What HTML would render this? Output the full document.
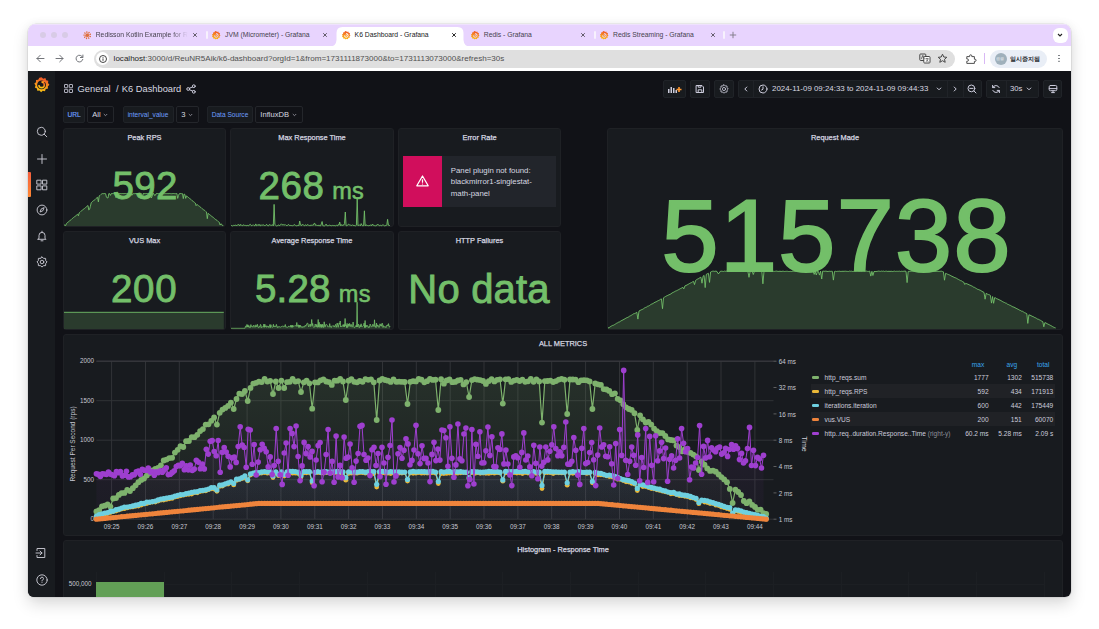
<!DOCTYPE html>
<html><head><meta charset="utf-8">
<style>
*{margin:0;padding:0;box-sizing:border-box}
html,body{width:1099px;height:629px;overflow:hidden;background:#ffffff;font-family:"Liberation Sans",sans-serif}
.a{position:absolute;white-space:nowrap}
#win{position:absolute;left:28px;top:24px;width:1043px;height:573px;border-radius:8px 8px 6px 6px;overflow:hidden;background:transparent;box-shadow:0 7px 16px rgba(0,0,0,0.15),0 0 0 0.6px rgba(0,0,0,0.10),0 0 10px rgba(0,0,0,0.05)}
#in{position:absolute;left:-28px;top:-24px;width:1099px;height:629px}
.tl{position:absolute;top:32px;width:6px;height:6px;border-radius:50%;background:#d8cbe6}
.tab{position:absolute;font-size:6.8px;color:#46424d;line-height:10px;top:30px;white-space:nowrap}
.sep{position:absolute;top:31px;width:2px;height:8px;border-radius:1px;background:#f7f1fd}
.x{position:absolute;top:29px;font-size:10px;line-height:12px;color:#4a4650}
.panel{position:absolute;background:#181b1f;border:1px solid #1f2125;border-radius:3px;overflow:hidden}
.pt{position:absolute;left:0;right:0;text-align:center;font-weight:normal;-webkit-text-stroke:0.25px #d6d7e0;font-size:7.4px;line-height:9px;color:#d6d7e0;white-space:nowrap}
.sv{position:absolute;left:0;right:0;text-align:center;color:#73bf69;white-space:nowrap;line-height:1}
.btn{position:absolute;top:80px;height:18px;background:#181b1f;border:1px solid #1f2227;border-radius:2px}
.vb{position:absolute;top:106px;height:17px;background:#181b1f;border:1px solid #202328;border-radius:2px;white-space:nowrap}
.vl{color:#6e9fff;font-size:6.6px;line-height:15px;text-align:center}
.vv{color:#d8d9e0;font-size:7.6px;line-height:15px;background:#111217 !important;border-color:#24262b !important}
.ax{position:absolute;font-size:6.3px;line-height:8px;color:#c7c8d2;white-space:nowrap}
.lg{position:absolute;font-size:6.6px;line-height:8px;color:#ccccdc;white-space:nowrap}
.lr{position:absolute;font-size:6.6px;line-height:8px;color:#ccccdc;white-space:nowrap;text-align:right}
svg{position:absolute;left:0;top:0;overflow:visible}
</style></head><body>
<div id="win"><div id="in">
<!-- ============ TAB BAR ============ -->
<div class="a" style="left:28px;top:24px;width:1043px;height:23px;background:#e8d4fe"></div><div class="a" style="left:28px;top:24px;width:1043px;height:1px;background:#efe2fd"></div>
<div class="tl" style="left:40px"></div><div class="tl" style="left:51px"></div><div class="tl" style="left:62px"></div>
<!-- active tab -->
<svg style="position:absolute;left:0;top:0" width="1099" height="60"><path d="M329,47 Q336,47 336.5,40 L336.5,33 Q336.5,27 342.5,27 L457.5,27 Q463.5,27 463.5,33 L463.5,40 Q464,47 471,47 Z" fill="#fff"/></svg>
<svg style="position:absolute;left:83px;top:31px" width="8.5" height="8.5" viewBox="0 0 16 16"><g stroke="#e37a4c" stroke-width="1.3" opacity="0.9"><line x1="8" y1="8" x2="13.92" y2="6.17"/><line x1="8" y1="8" x2="13.72" y2="10.40"/><line x1="8" y1="8" x2="10.83" y2="13.51"/><line x1="8" y1="8" x2="6.63" y2="14.05"/><line x1="8" y1="8" x2="3.06" y2="11.75"/><line x1="8" y1="8" x2="1.81" y2="7.70"/><line x1="8" y1="8" x2="3.45" y2="3.79"/><line x1="8" y1="8" x2="7.22" y2="1.85"/><line x1="8" y1="8" x2="11.36" y2="2.79"/></g><g fill="#e06d3a"><circle cx="13.92" cy="6.17" r="1.3"/><circle cx="13.72" cy="10.40" r="1.3"/><circle cx="10.83" cy="13.51" r="1.3"/><circle cx="6.63" cy="14.05" r="1.3"/><circle cx="3.06" cy="11.75" r="1.3"/><circle cx="1.81" cy="7.70" r="1.3"/><circle cx="3.45" cy="3.79" r="1.3"/><circle cx="7.22" cy="1.85" r="1.3"/><circle cx="11.36" cy="2.79" r="1.3"/></g><circle cx="8" cy="8" r="3.3" fill="#df6e3d"/></svg>
<div class="tab" style="left:95.7px;width:92px;overflow:hidden;-webkit-mask-image:linear-gradient(90deg,#000 82%,transparent)">Redisson Kotlin Example for R</div>
<svg style="position:absolute;left:192.4px;top:31.8px" width="6" height="6" viewBox="0 0 6 6"><path d="M1.2 1.2 L4.8 4.8 M4.8 1.2 L1.2 4.8" stroke="#4a4650" stroke-width="0.85"/></svg>
<div class="sep" style="left:206px"></div>
<svg style="position:absolute;left:211.75px;top:30.75px" width="8.5" height="8.5" viewBox="0 0 20 20"><defs><linearGradient id="gfl" x1="0" y1="1" x2="0.2" y2="0"><stop offset="0" stop-color="#fcc30f"/><stop offset="0.6" stop-color="#f7891e"/><stop offset="1" stop-color="#f05a28"/></linearGradient></defs><path fill="url(#gfl)" d="M9.6 0.2 L11.8 2.4 L14.8 1.2 L15.6 4.3 L18.8 4.8 L18 8 L20 10.4 L17.6 12.4 L18.2 15.6 L15 16 L14 19.2 L11 18 L8.6 20 L6.6 17.6 L3.4 18.2 L3 15 L0 13.8 L1.4 11 L0 8.2 L2.6 6.6 L2.4 3.4 L5.6 3.2 L7 0.4 Z"/><path d="M5.6 10.4 A4.4 4.4 0 1 0 10.2 6" fill="none" stroke="#e8d4fe" stroke-width="2.2"/><path d="M10.2 6 A2.2 2.2 0 1 1 8.2 9.4" fill="none" stroke="#e8d4fe" stroke-width="1.8"/></svg>
<div class="tab" style="left:225px">JVM (Micrometer) - Grafana</div>
<svg style="position:absolute;left:321.8px;top:31.8px" width="6" height="6" viewBox="0 0 6 6"><path d="M1.2 1.2 L4.8 4.8 M4.8 1.2 L1.2 4.8" stroke="#4a4650" stroke-width="0.85"/></svg>
<svg style="position:absolute;left:341.75px;top:30.75px" width="8.5" height="8.5" viewBox="0 0 20 20"><defs><linearGradient id="gfl" x1="0" y1="1" x2="0.2" y2="0"><stop offset="0" stop-color="#fcc30f"/><stop offset="0.6" stop-color="#f7891e"/><stop offset="1" stop-color="#f05a28"/></linearGradient></defs><path fill="url(#gfl)" d="M9.6 0.2 L11.8 2.4 L14.8 1.2 L15.6 4.3 L18.8 4.8 L18 8 L20 10.4 L17.6 12.4 L18.2 15.6 L15 16 L14 19.2 L11 18 L8.6 20 L6.6 17.6 L3.4 18.2 L3 15 L0 13.8 L1.4 11 L0 8.2 L2.6 6.6 L2.4 3.4 L5.6 3.2 L7 0.4 Z"/><path d="M5.6 10.4 A4.4 4.4 0 1 0 10.2 6" fill="none" stroke="#ffffff" stroke-width="2.2"/><path d="M10.2 6 A2.2 2.2 0 1 1 8.2 9.4" fill="none" stroke="#ffffff" stroke-width="1.8"/></svg>
<div class="tab" style="left:354.6px;color:#202124">K6 Dashboard - Grafana</div>
<svg style="position:absolute;left:451px;top:31.8px" width="6" height="6" viewBox="0 0 6 6"><path d="M1.2 1.2 L4.8 4.8 M4.8 1.2 L1.2 4.8" stroke="#1f1f1f" stroke-width="0.95"/></svg>
<svg style="position:absolute;left:470.75px;top:30.75px" width="8.5" height="8.5" viewBox="0 0 20 20"><defs><linearGradient id="gfl" x1="0" y1="1" x2="0.2" y2="0"><stop offset="0" stop-color="#fcc30f"/><stop offset="0.6" stop-color="#f7891e"/><stop offset="1" stop-color="#f05a28"/></linearGradient></defs><path fill="url(#gfl)" d="M9.6 0.2 L11.8 2.4 L14.8 1.2 L15.6 4.3 L18.8 4.8 L18 8 L20 10.4 L17.6 12.4 L18.2 15.6 L15 16 L14 19.2 L11 18 L8.6 20 L6.6 17.6 L3.4 18.2 L3 15 L0 13.8 L1.4 11 L0 8.2 L2.6 6.6 L2.4 3.4 L5.6 3.2 L7 0.4 Z"/><path d="M5.6 10.4 A4.4 4.4 0 1 0 10.2 6" fill="none" stroke="#e8d4fe" stroke-width="2.2"/><path d="M10.2 6 A2.2 2.2 0 1 1 8.2 9.4" fill="none" stroke="#e8d4fe" stroke-width="1.8"/></svg>
<div class="tab" style="left:483.8px">Redis - Grafana</div>
<svg style="position:absolute;left:580.4px;top:31.8px" width="6" height="6" viewBox="0 0 6 6"><path d="M1.2 1.2 L4.8 4.8 M4.8 1.2 L1.2 4.8" stroke="#4a4650" stroke-width="0.85"/></svg>
<div class="sep" style="left:593.8px"></div>
<svg style="position:absolute;left:599.75px;top:30.75px" width="8.5" height="8.5" viewBox="0 0 20 20"><defs><linearGradient id="gfl" x1="0" y1="1" x2="0.2" y2="0"><stop offset="0" stop-color="#fcc30f"/><stop offset="0.6" stop-color="#f7891e"/><stop offset="1" stop-color="#f05a28"/></linearGradient></defs><path fill="url(#gfl)" d="M9.6 0.2 L11.8 2.4 L14.8 1.2 L15.6 4.3 L18.8 4.8 L18 8 L20 10.4 L17.6 12.4 L18.2 15.6 L15 16 L14 19.2 L11 18 L8.6 20 L6.6 17.6 L3.4 18.2 L3 15 L0 13.8 L1.4 11 L0 8.2 L2.6 6.6 L2.4 3.4 L5.6 3.2 L7 0.4 Z"/><path d="M5.6 10.4 A4.4 4.4 0 1 0 10.2 6" fill="none" stroke="#e8d4fe" stroke-width="2.2"/><path d="M10.2 6 A2.2 2.2 0 1 1 8.2 9.4" fill="none" stroke="#e8d4fe" stroke-width="1.8"/></svg>
<div class="tab" style="left:613px">Redis Streaming - Grafana</div>
<svg style="position:absolute;left:709.5px;top:31.8px" width="6" height="6" viewBox="0 0 6 6"><path d="M1.2 1.2 L4.8 4.8 M4.8 1.2 L1.2 4.8" stroke="#4a4650" stroke-width="0.85"/></svg>
<div class="sep" style="left:723px"></div>
<svg style="position:absolute;left:728.5px;top:31px" width="8" height="8" viewBox="0 0 8 8"><path d="M4 0.8 V7.2 M0.8 4 H7.2" stroke="#7d7885" stroke-width="0.9"/></svg>
<div class="a" style="left:1052.5px;top:27.5px;width:15px;height:15px;border-radius:6px;background:#fff"></div>
<svg style="position:absolute;left:1056px;top:31px" width="8" height="8" viewBox="0 0 8 8"><path d="M2 3 L4 5 L6 3" fill="none" stroke="#222" stroke-width="1.1"/></svg>
<!-- ============ TOOLBAR ============ -->
<div class="a" style="left:28px;top:46px;width:1043px;height:25px;background:#fff"></div>
<div class="a" style="left:93.8px;top:49.6px;width:861.7px;height:18px;border-radius:9px;background:#dfdfdf"></div>
<div class="a" style="left:95.8px;top:51.8px;width:13.4px;height:13.4px;border-radius:50%;background:#fff"></div>
<div class="a" style="left:113.6px;top:54px;font-size:8.06px;line-height:10px;color:#1f1f1f">localhost<span style="color:#505050">:3000/d/ReuNR5Aik/k6-dashboard?orgId=1&amp;from=1731111873000&amp;to=1731113073000&amp;refresh=30s</span></div>
<svg style="position:absolute;left:35px;top:53px" width="11" height="11" viewBox="0 0 11 11"><path d="M9 5.5 H2 M5.3 2.2 L2 5.5 L5.3 8.8" fill="none" stroke="#6b6e73" stroke-width="0.95" stroke-linecap="round" stroke-linejoin="round"/></svg>
<svg style="position:absolute;left:54px;top:53px" width="11" height="11" viewBox="0 0 11 11"><path d="M2 5.5 H9 M5.7 2.2 L9 5.5 L5.7 8.8" fill="none" stroke="#6b6e73" stroke-width="0.95" stroke-linecap="round" stroke-linejoin="round"/></svg>
<svg style="position:absolute;left:74px;top:53px" width="11" height="11" viewBox="0 0 11 11"><path d="M8.6 4.2 A3.4 3.4 0 1 0 8.8 6.4" fill="none" stroke="#6b6e73" stroke-width="0.95" stroke-linecap="round" stroke-linejoin="round"/><path d="M8.9 2 V4.5 H6.4" fill="none" stroke="#6b6e73" stroke-width="0.95" stroke-linecap="round" stroke-linejoin="round"/></svg>
<svg style="position:absolute;left:97.5px;top:53.8px" width="10" height="10" viewBox="0 0 10 10"><circle cx="5" cy="5" r="3.5" fill="none" stroke="#303030" stroke-width="0.9"/><rect x="4.55" y="4.4" width="0.9" height="2.4" fill="#303030"/><rect x="4.55" y="3.1" width="0.9" height="0.8" fill="#303030"/></svg>
<svg style="position:absolute;left:919px;top:53px" width="12" height="11" viewBox="0 0 12 11"><rect x="0.8" y="1" width="6" height="6.5" rx="0.8" fill="none" stroke="#474747" stroke-width="1"/><rect x="4.8" y="3.5" width="6.2" height="6.5" rx="0.8" fill="#fff" stroke="#474747" stroke-width="1"/><path d="M2.4 5.8 L3.8 2.4 L5.2 5.8" fill="none" stroke="#474747" stroke-width="0.8"/><path d="M6.5 5.6 H9.5 M8 5 V5.6 M7 8.8 Q8.5 7.5 9.2 5.8 M7.2 6.5 Q8 8 9.6 8.8" fill="none" stroke="#474747" stroke-width="0.7"/></svg>
<svg style="position:absolute;left:937.3px;top:53px" width="11" height="11" viewBox="0 0 11 11"><path d="M5.5 1.2 L6.8 4 L9.8 4.3 L7.5 6.3 L8.2 9.3 L5.5 7.7 L2.8 9.3 L3.5 6.3 L1.2 4.3 L4.2 4 Z" fill="none" stroke="#474747" stroke-width="1" stroke-linejoin="round"/></svg>
<svg style="position:absolute;left:964.6px;top:52.6px" width="12" height="12" viewBox="0 0 12 12"><path d="M1.8 3.6 H4.6 V2.9 A1.1 1.1 0 0 1 6.8 2.9 V3.6 H9.4 V6.2 H10 A1.1 1.1 0 0 1 10 8.4 H9.4 V10.4 H1.8 V8.2 H2.4 A1.1 1.1 0 0 0 2.4 6 H1.8 Z" fill="none" stroke="#474747" stroke-width="0.95" stroke-linejoin="round"/></svg>
<div class="a" style="left:984px;top:53px;width:1px;height:11px;background:#d9b8f5"></div>
<div class="a" style="left:990px;top:50px;width:57px;height:18px;border-radius:9px;background:#e9eef6"></div>
<div class="a" style="left:994.6px;top:53px;width:12px;height:12px;border-radius:6px;background:#9fb0bb"></div>
<div class="a" style="left:996px;top:56px;font-size:4px;line-height:6px;color:#e8eef2">&#52896;&#52888;</div>
<div class="a" style="left:1009.6px;top:54.2px;font-size:6.2px;line-height:10px;color:#2f3236;-webkit-text-stroke:0.25px #2f3236">&#51068;&#49884;&#51473;&#51648;&#46120;</div>
<div class="a" style="left:1058.4px;top:54.6px;width:1.3px;height:1.3px;border-radius:1px;background:#6f7378;box-shadow:0 2.9px 0 #6f7378,0 5.8px 0 #6f7378"></div>
<!-- ============ GRAFANA ============ -->
<div class="a" style="left:28px;top:71px;width:1043px;height:526px;background:#111217"></div>
<div class="a" style="left:28px;top:71px;width:27px;height:526px;background:#181b1f"></div>
<svg style="position:absolute;left:33.6px;top:77px" width="15.4" height="15.4" viewBox="0 0 20 20"><defs><linearGradient id="glg" x1="0" y1="1" x2="0.25" y2="0"><stop offset="0" stop-color="#fcd20f"/><stop offset="0.5" stop-color="#f89a1c"/><stop offset="1" stop-color="#f05a28"/></linearGradient></defs><path fill="url(#glg)" d="M9.8 0.4 L12 2.2 L14.8 1.4 L15.8 4.2 L18.6 5 L18.2 7.9 L20 10.2 L17.9 12.2 L18.2 15.1 L15.3 15.7 L14.2 18.5 L11.4 17.8 L9.2 19.7 L7.2 17.6 L4.3 17.9 L3.8 15 L1.1 13.8 L2 11 L0.4 8.6 L2.6 6.8 L2.6 3.9 L5.5 3.6 L6.9 1 Z"/><circle cx="9.8" cy="10.3" r="5.7" fill="#181b1f"/><path d="M13.2 6.4 A4.6 4.6 0 1 0 14.2 12.4" fill="none" stroke="url(#glg)" stroke-width="0.01"/><path d="M9.9 6.8 A3.5 3.5 0 1 1 6.4 10.3" fill="none" stroke="url(#glg)" stroke-width="2"/><path d="M9.9 6.8 L14 5.2" fill="none" stroke="url(#glg)" stroke-width="2.2"/></svg>
<svg style="position:absolute;left:35.5px;top:125.8px" width="12" height="12" viewBox="0 0 12 12"><circle cx="5.3" cy="5.3" r="4" fill="none" stroke="#c7c7d1" stroke-width="0.95" stroke-linecap="round" stroke-linejoin="round"/><path d="M8.2 8.2 L10.8 10.8" fill="none" stroke="#c7c7d1" stroke-width="0.95" stroke-linecap="round" stroke-linejoin="round"/></svg>
<svg style="position:absolute;left:35.5px;top:152.7px" width="12" height="12" viewBox="0 0 12 12"><path d="M6 1.5 V10.5 M1.5 6 H10.5" fill="none" stroke="#c7c7d1" stroke-width="0.95" stroke-linecap="round" stroke-linejoin="round"/></svg>
<div class="a" style="left:28px;top:172px;width:2.5px;height:25px;border-radius:0 1px 1px 0;background:linear-gradient(180deg,#f55f3e,#ff8833)"></div>
<svg style="position:absolute;left:35.5px;top:178.5px" width="12" height="12" viewBox="0 0 12 12"><rect x="1.2" y="1.2" width="3.9" height="3.9" fill="none" stroke="#c7c7d1" stroke-width="0.95" stroke-linecap="round" stroke-linejoin="round"/><rect x="6.9" y="1.2" width="3.9" height="3.9" fill="none" stroke="#c7c7d1" stroke-width="0.95" stroke-linecap="round" stroke-linejoin="round"/><rect x="1.2" y="6.9" width="3.9" height="3.9" fill="none" stroke="#c7c7d1" stroke-width="0.95" stroke-linecap="round" stroke-linejoin="round"/><rect x="6.9" y="6.9" width="3.9" height="3.9" fill="none" stroke="#c7c7d1" stroke-width="0.95" stroke-linecap="round" stroke-linejoin="round"/></svg>
<svg style="position:absolute;left:35.5px;top:203.9px" width="12" height="12" viewBox="0 0 12 12"><circle cx="6" cy="6" r="4.9" fill="none" stroke="#c7c7d1" stroke-width="0.95" stroke-linecap="round" stroke-linejoin="round"/><path d="M8 4 L6.8 6.8 L4 8 L5.2 5.2 Z" fill="none" stroke="#c7c7d1" stroke-width="0.95" stroke-linecap="round" stroke-linejoin="round"/></svg>
<svg style="position:absolute;left:35.5px;top:229.8px" width="12" height="12" viewBox="0 0 12 12"><path d="M3 8.3 V5.4 A3 3 0 0 1 9 5.4 V8.3 L10 9.3 H2 Z" fill="none" stroke="#c7c7d1" stroke-width="0.95" stroke-linecap="round" stroke-linejoin="round"/><path d="M5 10.8 H7 M6 1.2 V2.2" fill="none" stroke="#c7c7d1" stroke-width="0.95" stroke-linecap="round" stroke-linejoin="round"/></svg>
<svg style="position:absolute;left:35.5px;top:255.6px" width="12" height="12" viewBox="0 0 12 12"><path d="M6 0.9 L7.4 2.3 L9.6 2.4 L9.7 4.6 L11.1 6 L9.7 7.4 L9.6 9.6 L7.4 9.7 L6 11.1 L4.6 9.7 L2.4 9.6 L2.3 7.4 L0.9 6 L2.3 4.6 L2.4 2.4 L4.6 2.3 Z" fill="none" stroke="#c7c7d1" stroke-width="0.95" stroke-linecap="round" stroke-linejoin="round"/><circle cx="6" cy="6" r="1.8" fill="none" stroke="#c7c7d1" stroke-width="0.95" stroke-linecap="round" stroke-linejoin="round"/></svg>
<svg style="position:absolute;left:35.3px;top:547.4px" width="12" height="12" viewBox="0 0 12 12"><path d="M2 3.5 V1.5 H9.8 V10.5 H2 V8.5" fill="none" stroke="#c7c7d1" stroke-width="0.95" stroke-linecap="round" stroke-linejoin="round"/><path d="M1 6 H7 M5 4 L7 6 L5 8" fill="none" stroke="#c7c7d1" stroke-width="0.95" stroke-linecap="round" stroke-linejoin="round"/></svg>
<svg style="position:absolute;left:35.6px;top:573.5px" width="12" height="12" viewBox="0 0 12 12"><circle cx="6" cy="6" r="5.2" fill="none" stroke="#c7c7d1" stroke-width="0.95" stroke-linecap="round" stroke-linejoin="round"/><path d="M4.5 4.6 A1.5 1.5 0 1 1 6.3 6.1 Q6 6.3 6 7" fill="none" stroke="#c7c7d1" stroke-width="0.95" stroke-linecap="round" stroke-linejoin="round"/><circle cx="6" cy="8.6" r="0.5" fill="#c7c7d1"/></svg>
<!-- header -->
<div class="a" style="left:77.6px;top:83px;font-size:9.3px;line-height:12px;color:#d8d9e1">General</div><div class="a" style="left:116px;top:83px;font-size:9.3px;line-height:12px;color:#d8d9e1">/</div><div class="a" style="left:121.8px;top:83px;font-size:9.3px;line-height:12px;color:#d8d9e1">K6 Dashboard</div>
<svg style="position:absolute;left:63.6px;top:83.7px" width="9" height="9" viewBox="0 0 9 9"><g fill="none" stroke="#ccccdc" stroke-width="0.85"><rect x="0.5" y="0.5" width="3.2" height="3.2" rx="0.3"/><rect x="5.3" y="0.5" width="3.2" height="3.2" rx="0.3"/><rect x="0.5" y="5.3" width="3.2" height="3.2" rx="0.3"/><rect x="5.3" y="5.3" width="3.2" height="3.2" rx="0.3"/></g></svg>
<svg style="position:absolute;left:185.5px;top:83.5px" width="10" height="10" viewBox="0 0 10 10"><circle cx="7.8" cy="2.2" r="1.4" fill="none" stroke="#ccccdc" stroke-width="1" stroke-linecap="round" stroke-linejoin="round"/><circle cx="2.2" cy="5" r="1.4" fill="none" stroke="#ccccdc" stroke-width="1" stroke-linecap="round" stroke-linejoin="round"/><circle cx="7.8" cy="7.8" r="1.4" fill="none" stroke="#ccccdc" stroke-width="1" stroke-linecap="round" stroke-linejoin="round"/><path d="M3.4 4.3 L6.6 2.9 M3.4 5.7 L6.6 7.1" fill="none" stroke="#ccccdc" stroke-width="1" stroke-linecap="round" stroke-linejoin="round"/></svg>
<div class="a" style="left:663.2px;top:80px;width:23.0px;height:17.5px;background:#181b1f;border:1px solid #202328;border-radius:2px"></div>
<div class="a" style="left:690.4px;top:80px;width:20.0px;height:17.5px;background:#181b1f;border:1px solid #202328;border-radius:2px"></div>
<div class="a" style="left:714.2px;top:80px;width:19.799999999999955px;height:17.5px;background:#181b1f;border:1px solid #202328;border-radius:2px"></div>
<div class="a" style="left:738.2px;top:80px;width:243.5px;height:17.5px;background:#181b1f;border:1px solid #202328;border-radius:2px"></div>
<div class="a" style="left:986.1px;top:80px;width:52.60000000000002px;height:17.5px;background:#181b1f;border:1px solid #202328;border-radius:2px"></div>
<div class="a" style="left:1043px;top:80px;width:19.200000000000045px;height:17.5px;background:#181b1f;border:1px solid #202328;border-radius:2px"></div>
<div class="a" style="left:753.4px;top:81px;width:1px;height:15.5px;background:#202328"></div>
<div class="a" style="left:947.3px;top:81px;width:1px;height:15.5px;background:#202328"></div>
<div class="a" style="left:962.6px;top:81px;width:1px;height:15.5px;background:#202328"></div>
<div class="a" style="left:1005.6px;top:81px;width:1px;height:15.5px;background:#202328"></div>
<svg style="position:absolute;left:667px;top:83.5px" width="15" height="10" viewBox="0 0 15 10"><g fill="#ccccdc"><rect x="1" y="5" width="1.5" height="4"/><rect x="3.5" y="3" width="1.5" height="6"/><rect x="6" y="4" width="1.5" height="5"/><rect x="8.5" y="6" width="1.5" height="3"/></g><path d="M12 3 V8 M9.5 5.5 H14.5" stroke="#ff9830" stroke-width="1.6"/></svg>
<svg style="position:absolute;left:695.4px;top:83.8px" width="10" height="10" viewBox="0 0 10 10"><path d="M1.5 1.5 H7 L8.5 3 V8.5 H1.5 Z" fill="none" stroke="#ccccdc" stroke-width="1" stroke-linecap="round" stroke-linejoin="round"/><path d="M3.2 8.5 V5.8 H6.8 V8.5" fill="none" stroke="#ccccdc" stroke-width="1" stroke-linecap="round" stroke-linejoin="round"/><path d="M3.2 1.5 V3.2 H6 V1.5" fill="none" stroke="#ccccdc" stroke-width="1" stroke-linecap="round" stroke-linejoin="round"/></svg>
<svg style="position:absolute;left:719.1px;top:83.8px" width="10" height="10" viewBox="0 0 12 12"><path d="M6 0.9 L7.4 2.3 L9.6 2.4 L9.7 4.6 L11.1 6 L9.7 7.4 L9.6 9.6 L7.4 9.7 L6 11.1 L4.6 9.7 L2.4 9.6 L2.3 7.4 L0.9 6 L2.3 4.6 L2.4 2.4 L4.6 2.3 Z" fill="none" stroke="#ccccdc" stroke-width="1" stroke-linecap="round" stroke-linejoin="round" stroke-width="1.1"/><circle cx="6" cy="6" r="1.9" fill="none" stroke="#ccccdc" stroke-width="1" stroke-linecap="round" stroke-linejoin="round" stroke-width="1.1"/></svg>
<svg style="position:absolute;left:742.8px;top:85.8px" width="6" height="6" viewBox="0 0 6 6"><path d="M3.8 1 L1.8 3 L3.8 5" fill="none" stroke="#ccccdc" stroke-width="1" stroke-linecap="round" stroke-linejoin="round"/></svg>
<svg style="position:absolute;left:758px;top:83.8px" width="10" height="10" viewBox="0 0 10 10"><circle cx="5" cy="5" r="4" fill="none" stroke="#ccccdc" stroke-width="1" stroke-linecap="round" stroke-linejoin="round"/><path d="M5 2.8 V5.2 L3.6 6" fill="none" stroke="#ccccdc" stroke-width="1" stroke-linecap="round" stroke-linejoin="round"/></svg>
<div class="a" style="left:772px;top:84px;font-size:7.9px;line-height:10px;color:#d8d9e1">2024-11-09 09:24:33 to 2024-11-09 09:44:33</div>
<svg style="position:absolute;left:935.7px;top:86px" width="6" height="6" viewBox="0 0 6 6"><path d="M1.2 2 L3 3.8 L4.8 2" fill="none" stroke="#ccccdc" stroke-width="1" stroke-linecap="round" stroke-linejoin="round"/></svg>
<svg style="position:absolute;left:952.2px;top:85.8px" width="6" height="6" viewBox="0 0 6 6"><path d="M2.2 1 L4.2 3 L2.2 5" fill="none" stroke="#ccccdc" stroke-width="1" stroke-linecap="round" stroke-linejoin="round"/></svg>
<svg style="position:absolute;left:966.8px;top:83.8px" width="10" height="10" viewBox="0 0 10 10"><circle cx="4.4" cy="4.4" r="3.4" fill="none" stroke="#ccccdc" stroke-width="1" stroke-linecap="round" stroke-linejoin="round"/><path d="M6.9 6.9 L9 9 M2.8 4.4 H6" fill="none" stroke="#ccccdc" stroke-width="1" stroke-linecap="round" stroke-linejoin="round"/></svg>
<svg style="position:absolute;left:990.7px;top:83.8px" width="10" height="10" viewBox="0 0 10 10"><path d="M8.2 3.6 A3.6 3.6 0 0 0 1.8 3.4 M1.8 6.4 A3.6 3.6 0 0 0 8.2 6.6" fill="none" stroke="#ccccdc" stroke-width="1" stroke-linecap="round" stroke-linejoin="round"/><path d="M1.6 1.4 V3.6 H3.8 M8.4 8.6 V6.4 H6.2" fill="none" stroke="#ccccdc" stroke-width="1" stroke-linecap="round" stroke-linejoin="round"/></svg>
<div class="a" style="left:1010px;top:84px;font-size:7.7px;line-height:10px;color:#d8d9e1">30s</div>
<svg style="position:absolute;left:1026px;top:86px" width="6" height="6" viewBox="0 0 6 6"><path d="M1.2 2 L3 3.8 L4.8 2" fill="none" stroke="#ccccdc" stroke-width="1" stroke-linecap="round" stroke-linejoin="round"/></svg>
<svg style="position:absolute;left:1047.6px;top:83.8px" width="10" height="10" viewBox="0 0 10 10"><rect x="1.2" y="1.5" width="7.6" height="5.2" rx="1.2" fill="none" stroke="#ccccdc" stroke-width="1" stroke-linecap="round" stroke-linejoin="round"/><path d="M1.2 4.6 H8.8 M3.6 8.6 H6.4 M5 6.8 V8.4" fill="none" stroke="#ccccdc" stroke-width="1" stroke-linecap="round" stroke-linejoin="round"/></svg>
<!-- variables -->
<div class="vb vl" style="left:63px;width:22px;-webkit-text-stroke:0.15px #6e9fff">URL</div>
<div class="vb vv" style="left:87px;width:27px;padding-left:4.3px">All<svg style="position:absolute;left:auto;right:5px;top:6px" width="5" height="4" viewBox="0 0 5 4"><path d="M0.8 1 L2.5 2.7 L4.2 1" fill="none" stroke="#9fa0ab" stroke-width="0.8"/></svg></div>
<div class="vb vl" style="left:122.5px;width:51px">interval_value</div>
<div class="vb vv" style="left:176px;width:23px;padding-left:4.3px">3<svg style="position:absolute;left:auto;right:5px;top:6px" width="5" height="4" viewBox="0 0 5 4"><path d="M0.8 1 L2.5 2.7 L4.2 1" fill="none" stroke="#9fa0ab" stroke-width="0.8"/></svg></div>
<div class="vb vl" style="left:207px;width:46px">Data Source</div>
<div class="vb vv" style="left:255px;width:48px;padding-left:4.3px">InfluxDB<svg style="position:absolute;left:auto;right:5px;top:6px" width="5" height="4" viewBox="0 0 5 4"><path d="M0.8 1 L2.5 2.7 L4.2 1" fill="none" stroke="#9fa0ab" stroke-width="0.8"/></svg></div>
<!-- ============ PANELS ============ -->
<div class="panel" style="left:63px;top:128px;width:163px;height:99px"></div>
<div class="panel" style="left:230px;top:128px;width:164px;height:99px"></div>
<div class="panel" style="left:398px;top:128px;width:163px;height:99px"></div>
<div class="panel" style="left:607px;top:128px;width:456px;height:202px"></div>
<div class="panel" style="left:63px;top:231px;width:163px;height:99px"></div>
<div class="panel" style="left:230px;top:231px;width:164px;height:99px"></div>
<div class="panel" style="left:398px;top:231px;width:163px;height:99px"></div>
<div class="panel" style="left:63px;top:334px;width:1000px;height:202px"></div>
<div class="panel" style="left:63px;top:540px;width:1000px;height:80px"></div>
<!-- titles -->
<div class="pt" style="left:63px;width:163px;top:132.8px">Peak RPS</div>
<div class="pt" style="left:230px;width:164px;top:132.8px">Max Response Time</div>
<div class="pt" style="left:398px;width:163px;top:132.8px">Error Rate</div>
<div class="pt" style="left:607px;width:456px;top:132.8px">Request Made</div>
<div class="pt" style="left:63px;width:163px;top:236px">VUS Max</div>
<div class="pt" style="left:230px;width:164px;top:236px">Average Response Time</div>
<div class="pt" style="left:398px;width:163px;top:236px">HTTP Failures</div>
<div class="pt" style="left:63px;width:1000px;top:339px">ALL METRICS</div>
<div class="pt" style="left:63px;width:1000px;top:544.6px">Histogram - Response Time</div>
<!-- stat values -->
<div class="a" style="left:112.5px;top:164.7px;font-size:38.5px;line-height:42px;letter-spacing:0.3px;color:#73bf69;-webkit-text-stroke:0.9px #73bf69">592</div>
<div class="a" style="left:258.5px;top:164.7px;font-size:38.5px;line-height:42px;letter-spacing:0.6px;color:#73bf69;-webkit-text-stroke:0.9px #73bf69">268<span style="font-size:23.5px;margin-left:7.6px;letter-spacing:0.4px;-webkit-text-stroke:0.6px #73bf69;position:relative;top:0.6px">ms</span></div>
<div class="a" style="left:111px;top:267.8px;font-size:38.5px;line-height:42px;letter-spacing:0.7px;color:#73bf69;-webkit-text-stroke:0.9px #73bf69">200</div>
<div class="a" style="left:255px;top:267.8px;font-size:38.5px;line-height:42px;letter-spacing:0.2px;color:#73bf69;-webkit-text-stroke:0.9px #73bf69">5.28<span style="font-size:23.5px;margin-left:8px;letter-spacing:0.4px;-webkit-text-stroke:0.6px #73bf69;position:relative;top:0.4px">ms</span></div>
<div class="a" style="left:408.3px;top:267.8px;font-size:40px;line-height:42px;letter-spacing:0.2px;color:#73bf69;-webkit-text-stroke:0.9px #73bf69">No data</div>
<div class="a" style="left:661.5px;top:180.6px;font-size:102.5px;line-height:110px;letter-spacing:1.4px;color:#73bf69;-webkit-text-stroke:2.2px #73bf69">515738</div>
<svg width="1099" height="629" viewBox="0 0 1099 629">
<path d="M64.0,226 L64.0,225.5 L64.8,224.9 L65.6,225.6 L66.4,223.7 L67.2,222.8 L68.0,222.2 L68.8,221.5 L69.6,220.8 L70.4,220.3 L71.2,219.6 L72.0,218.7 L72.8,218.2 L73.6,217.4 L74.4,216.8 L75.2,216.3 L76.0,215.6 L76.8,214.9 L77.6,214.3 L78.4,215.8 L79.2,212.9 L80.0,212.2 L80.8,211.4 L81.6,210.7 L82.4,210.1 L83.2,209.5 L84.0,208.9 L84.8,208.1 L85.6,207.5 L86.4,206.8 L87.2,206.1 L88.0,205.5 L88.8,210.0 L89.6,209.3 L90.4,206.2 L91.2,202.8 L92.0,201.9 L92.8,201.2 L93.6,200.6 L94.4,200.1 L95.2,199.5 L96.0,198.5 L96.8,197.8 L97.6,197.3 L98.4,201.9 L99.2,195.9 L100.0,195.4 L100.8,194.6 L101.6,194.0 L102.4,193.6 L103.2,193.7 L104.0,193.6 L104.8,193.5 L105.6,193.7 L106.4,197.0 L107.2,197.9 L108.0,198.0 L108.8,193.6 L109.6,193.6 L110.4,195.4 L111.2,193.7 L112.0,193.5 L112.8,193.6 L113.6,193.6 L114.4,193.6 L115.2,193.5 L116.0,197.7 L116.8,193.7 L117.6,193.5 L118.4,193.5 L119.2,193.6 L120.0,193.5 L120.8,193.6 L121.6,193.6 L122.4,193.5 L123.2,193.6 L124.0,193.6 L124.8,193.5 L125.6,193.5 L126.4,193.7 L127.2,193.5 L128.0,193.6 L128.8,196.4 L129.6,193.7 L130.4,193.6 L131.2,193.6 L132.0,195.2 L132.8,193.7 L133.6,193.7 L134.4,193.7 L135.2,193.5 L136.0,193.7 L136.8,193.6 L137.6,193.6 L138.4,193.5 L139.2,193.5 L140.0,193.5 L140.8,193.7 L141.6,193.7 L142.4,198.5 L143.2,193.5 L144.1,193.6 L144.9,193.6 L145.7,193.6 L146.5,193.5 L147.3,193.6 L148.1,193.6 L148.9,193.6 L149.7,193.5 L150.5,193.7 L151.3,198.0 L152.1,196.4 L152.9,193.5 L153.7,193.6 L154.5,195.4 L155.3,195.3 L156.1,193.7 L156.9,193.5 L157.7,193.5 L158.5,193.6 L159.3,193.6 L160.1,193.5 L160.9,193.5 L161.7,193.7 L162.5,193.5 L163.3,193.6 L164.1,193.7 L164.9,193.7 L165.7,193.6 L166.5,193.6 L167.3,193.6 L168.1,193.6 L168.9,193.6 L169.7,193.5 L170.5,193.6 L171.3,193.7 L172.1,193.7 L172.9,193.5 L173.7,193.5 L174.5,193.6 L175.3,193.7 L176.1,193.7 L176.9,193.5 L177.7,198.4 L178.5,195.4 L179.3,193.7 L180.1,193.5 L180.9,193.5 L181.7,193.7 L182.5,193.7 L183.3,198.6 L184.1,194.0 L184.9,194.5 L185.7,198.4 L186.5,195.9 L187.3,196.5 L188.1,197.1 L188.9,197.9 L189.7,198.5 L190.5,199.1 L191.3,199.7 L192.1,200.6 L192.9,201.2 L193.7,201.8 L194.5,202.4 L195.3,203.0 L196.1,205.7 L196.9,204.4 L197.7,205.0 L198.5,205.7 L199.3,206.2 L200.1,206.9 L200.9,207.5 L201.7,208.3 L202.5,208.9 L203.3,209.6 L204.1,210.0 L204.9,210.6 L205.7,211.4 L206.5,212.0 L207.3,218.7 L208.1,213.3 L208.9,214.0 L209.7,214.7 L210.5,215.3 L211.3,216.0 L212.1,216.6 L212.9,217.2 L213.7,217.8 L214.5,218.6 L215.3,219.3 L216.1,219.7 L216.9,220.3 L217.7,221.2 L218.5,221.7 L219.3,222.3 L220.1,225.0 L220.9,223.8 L221.7,224.3 L222.5,225.6 L223.3,225.6 L223.3,226 Z" fill="rgba(115,191,105,0.2)"/><polyline points="64.0,225.5 64.8,224.9 65.6,225.6 66.4,223.7 67.2,222.8 68.0,222.2 68.8,221.5 69.6,220.8 70.4,220.3 71.2,219.6 72.0,218.7 72.8,218.2 73.6,217.4 74.4,216.8 75.2,216.3 76.0,215.6 76.8,214.9 77.6,214.3 78.4,215.8 79.2,212.9 80.0,212.2 80.8,211.4 81.6,210.7 82.4,210.1 83.2,209.5 84.0,208.9 84.8,208.1 85.6,207.5 86.4,206.8 87.2,206.1 88.0,205.5 88.8,210.0 89.6,209.3 90.4,206.2 91.2,202.8 92.0,201.9 92.8,201.2 93.6,200.6 94.4,200.1 95.2,199.5 96.0,198.5 96.8,197.8 97.6,197.3 98.4,201.9 99.2,195.9 100.0,195.4 100.8,194.6 101.6,194.0 102.4,193.6 103.2,193.7 104.0,193.6 104.8,193.5 105.6,193.7 106.4,197.0 107.2,197.9 108.0,198.0 108.8,193.6 109.6,193.6 110.4,195.4 111.2,193.7 112.0,193.5 112.8,193.6 113.6,193.6 114.4,193.6 115.2,193.5 116.0,197.7 116.8,193.7 117.6,193.5 118.4,193.5 119.2,193.6 120.0,193.5 120.8,193.6 121.6,193.6 122.4,193.5 123.2,193.6 124.0,193.6 124.8,193.5 125.6,193.5 126.4,193.7 127.2,193.5 128.0,193.6 128.8,196.4 129.6,193.7 130.4,193.6 131.2,193.6 132.0,195.2 132.8,193.7 133.6,193.7 134.4,193.7 135.2,193.5 136.0,193.7 136.8,193.6 137.6,193.6 138.4,193.5 139.2,193.5 140.0,193.5 140.8,193.7 141.6,193.7 142.4,198.5 143.2,193.5 144.1,193.6 144.9,193.6 145.7,193.6 146.5,193.5 147.3,193.6 148.1,193.6 148.9,193.6 149.7,193.5 150.5,193.7 151.3,198.0 152.1,196.4 152.9,193.5 153.7,193.6 154.5,195.4 155.3,195.3 156.1,193.7 156.9,193.5 157.7,193.5 158.5,193.6 159.3,193.6 160.1,193.5 160.9,193.5 161.7,193.7 162.5,193.5 163.3,193.6 164.1,193.7 164.9,193.7 165.7,193.6 166.5,193.6 167.3,193.6 168.1,193.6 168.9,193.6 169.7,193.5 170.5,193.6 171.3,193.7 172.1,193.7 172.9,193.5 173.7,193.5 174.5,193.6 175.3,193.7 176.1,193.7 176.9,193.5 177.7,198.4 178.5,195.4 179.3,193.7 180.1,193.5 180.9,193.5 181.7,193.7 182.5,193.7 183.3,198.6 184.1,194.0 184.9,194.5 185.7,198.4 186.5,195.9 187.3,196.5 188.1,197.1 188.9,197.9 189.7,198.5 190.5,199.1 191.3,199.7 192.1,200.6 192.9,201.2 193.7,201.8 194.5,202.4 195.3,203.0 196.1,205.7 196.9,204.4 197.7,205.0 198.5,205.7 199.3,206.2 200.1,206.9 200.9,207.5 201.7,208.3 202.5,208.9 203.3,209.6 204.1,210.0 204.9,210.6 205.7,211.4 206.5,212.0 207.3,218.7 208.1,213.3 208.9,214.0 209.7,214.7 210.5,215.3 211.3,216.0 212.1,216.6 212.9,217.2 213.7,217.8 214.5,218.6 215.3,219.3 216.1,219.7 216.9,220.3 217.7,221.2 218.5,221.7 219.3,222.3 220.1,225.0 220.9,223.8 221.7,224.3 222.5,225.6 223.3,225.6" fill="none" stroke="#73bf69" stroke-width="0.9"/>
<path d="M608.0,329 L608.0,327.9 L609.1,327.6 L610.1,326.9 L611.2,326.2 L612.3,325.5 L613.3,325.3 L614.4,324.7 L615.5,324.0 L616.5,323.3 L617.6,322.8 L618.7,322.1 L619.8,321.8 L620.8,321.0 L621.9,320.4 L623.0,319.9 L624.0,319.3 L625.1,318.7 L626.2,318.0 L627.2,317.6 L628.3,317.1 L629.4,316.3 L630.4,315.8 L631.5,315.2 L632.6,314.5 L633.6,313.8 L634.7,313.5 L635.8,313.0 L636.8,312.2 L637.9,319.1 L639.0,311.0 L640.0,310.5 L641.1,309.9 L642.2,309.5 L643.3,308.9 L644.3,308.1 L645.4,307.5 L646.5,307.1 L647.5,306.3 L648.6,306.0 L649.7,305.4 L650.7,304.6 L651.8,304.0 L652.9,303.6 L653.9,302.9 L655.0,302.2 L656.1,301.9 L657.1,301.2 L658.2,300.7 L659.3,300.2 L660.3,299.4 L661.4,298.9 L662.5,308.7 L663.5,297.8 L664.6,297.1 L665.7,296.4 L666.8,295.8 L667.8,295.4 L668.9,294.8 L670.0,294.4 L671.0,293.8 L672.1,292.9 L673.2,292.4 L674.2,291.9 L675.3,291.2 L676.4,290.8 L677.4,290.3 L678.5,289.7 L679.6,289.1 L680.6,288.5 L681.7,288.0 L682.8,287.3 L683.8,288.9 L684.9,285.9 L686.0,285.5 L687.1,284.9 L688.1,284.4 L689.2,283.7 L690.3,283.1 L691.3,282.7 L692.4,281.9 L693.5,281.4 L694.5,284.6 L695.6,280.4 L696.7,279.6 L697.7,279.0 L698.8,278.5 L699.9,277.7 L700.9,277.2 L702.0,283.2 L703.1,276.1 L704.1,275.4 L705.2,287.6 L706.3,274.3 L707.3,273.8 L708.4,273.3 L709.5,282.4 L710.6,272.0 L711.6,271.5 L712.7,271.2 L713.8,271.2 L714.8,271.4 L715.9,271.1 L717.0,271.5 L718.0,273.6 L719.1,273.3 L720.2,271.4 L721.2,271.2 L722.3,271.3 L723.4,271.5 L724.4,271.1 L725.5,271.3 L726.6,271.1 L727.6,271.4 L728.7,271.3 L729.8,271.4 L730.8,271.2 L731.9,271.4 L733.0,271.3 L734.1,271.2 L735.1,271.2 L736.2,271.3 L737.3,271.2 L738.3,271.3 L739.4,271.3 L740.5,271.2 L741.5,271.1 L742.6,271.4 L743.7,271.1 L744.7,271.4 L745.8,271.5 L746.9,271.3 L747.9,271.4 L749.0,277.3 L750.1,271.5 L751.1,271.3 L752.2,271.1 L753.3,274.5 L754.4,271.4 L755.4,271.1 L756.5,271.5 L757.6,271.3 L758.6,271.4 L759.7,271.4 L760.8,271.2 L761.8,271.1 L762.9,283.8 L764.0,271.2 L765.0,271.1 L766.1,271.2 L767.2,271.3 L768.2,271.4 L769.3,271.2 L770.4,271.3 L771.4,271.4 L772.5,271.4 L773.6,271.3 L774.6,271.4 L775.7,271.2 L776.8,271.1 L777.9,271.4 L778.9,271.4 L780.0,271.2 L781.1,271.5 L782.1,271.3 L783.2,271.2 L784.3,271.5 L785.3,271.4 L786.4,271.3 L787.5,271.3 L788.5,271.5 L789.6,271.5 L790.7,271.4 L791.7,271.5 L792.8,271.2 L793.9,271.2 L794.9,271.4 L796.0,271.3 L797.1,271.1 L798.1,271.2 L799.2,271.2 L800.3,271.4 L801.4,271.1 L802.4,271.3 L803.5,271.2 L804.6,271.4 L805.6,271.5 L806.7,271.2 L807.8,271.2 L808.8,271.3 L809.9,271.2 L811.0,271.2 L812.0,271.5 L813.1,271.2 L814.2,274.4 L815.2,271.3 L816.3,275.0 L817.4,271.4 L818.4,271.5 L819.5,275.1 L820.6,271.1 L821.7,279.0 L822.7,271.1 L823.8,271.2 L824.9,271.3 L825.9,271.1 L827.0,271.4 L828.1,271.5 L829.1,271.2 L830.2,271.4 L831.3,271.3 L832.3,271.3 L833.4,280.1 L834.5,271.5 L835.5,271.3 L836.6,271.5 L837.7,271.3 L838.7,271.3 L839.8,271.2 L840.9,271.5 L841.9,271.3 L843.0,271.3 L844.1,271.3 L845.2,271.2 L846.2,271.3 L847.3,271.4 L848.4,271.5 L849.4,271.1 L850.5,271.3 L851.6,271.2 L852.6,271.5 L853.7,271.4 L854.8,271.3 L855.8,271.5 L856.9,271.2 L858.0,271.2 L859.0,271.4 L860.1,271.2 L861.2,271.5 L862.2,271.3 L863.3,271.2 L864.4,271.5 L865.5,271.2 L866.5,271.1 L867.6,271.4 L868.7,271.4 L869.7,271.1 L870.8,276.1 L871.9,271.3 L872.9,275.5 L874.0,271.5 L875.1,271.5 L876.1,271.5 L877.2,271.4 L878.3,271.1 L879.3,271.2 L880.4,271.4 L881.5,271.1 L882.5,271.3 L883.6,271.1 L884.7,271.5 L885.7,271.2 L886.8,271.2 L887.9,271.5 L889.0,271.2 L890.0,271.5 L891.1,271.2 L892.2,271.5 L893.2,271.4 L894.3,271.1 L895.4,271.4 L896.4,271.3 L897.5,271.3 L898.6,271.3 L899.6,271.2 L900.7,271.5 L901.8,271.2 L902.8,271.4 L903.9,271.2 L905.0,271.1 L906.0,271.3 L907.1,282.6 L908.2,271.4 L909.2,271.4 L910.3,271.4 L911.4,271.3 L912.5,271.2 L913.5,271.2 L914.6,271.2 L915.7,271.2 L916.7,271.5 L917.8,271.4 L918.9,271.2 L919.9,271.2 L921.0,271.3 L922.1,271.2 L923.1,271.2 L924.2,271.3 L925.3,271.3 L926.3,271.5 L927.4,271.3 L928.5,271.1 L929.5,271.4 L930.6,271.1 L931.7,271.3 L932.8,271.2 L933.8,271.3 L934.9,271.3 L936.0,271.4 L937.0,271.2 L938.1,271.3 L939.2,271.4 L940.2,271.3 L941.3,271.2 L942.4,271.5 L943.4,271.8 L944.5,280.2 L945.6,273.3 L946.6,273.7 L947.7,274.3 L948.8,274.7 L949.8,275.1 L950.9,275.7 L952.0,276.4 L953.0,276.7 L954.1,277.4 L955.2,277.7 L956.3,278.2 L957.3,278.8 L958.4,279.4 L959.5,280.0 L960.5,280.6 L961.6,280.9 L962.7,281.7 L963.7,282.1 L964.8,284.5 L965.9,283.2 L966.9,283.9 L968.0,284.2 L969.1,284.8 L970.1,285.2 L971.2,285.7 L972.3,286.2 L973.3,287.0 L974.4,287.3 L975.5,288.0 L976.5,288.6 L977.6,289.3 L978.7,289.6 L979.8,290.1 L980.8,290.5 L981.9,291.3 L983.0,291.9 L984.0,292.4 L985.1,299.2 L986.2,293.3 L987.2,294.0 L988.3,294.5 L989.4,294.8 L990.4,295.4 L991.5,303.1 L992.6,296.5 L993.6,303.3 L994.7,297.6 L995.8,298.0 L996.8,298.8 L997.9,299.1 L999.0,299.7 L1000.1,300.2 L1001.1,300.7 L1002.2,301.4 L1003.3,302.0 L1004.3,302.4 L1005.4,303.0 L1006.5,303.3 L1007.5,304.2 L1008.6,304.6 L1009.7,305.2 L1010.7,305.5 L1011.8,306.3 L1012.9,306.9 L1013.9,307.1 L1015.0,307.7 L1016.1,308.3 L1017.1,308.8 L1018.2,309.3 L1019.3,310.0 L1020.3,310.4 L1021.4,311.1 L1022.5,311.3 L1023.6,312.0 L1024.6,312.7 L1025.7,313.1 L1026.8,313.7 L1027.8,323.4 L1028.9,314.8 L1030.0,315.2 L1031.0,315.6 L1032.1,316.3 L1033.2,316.6 L1034.2,317.3 L1035.3,317.7 L1036.4,318.3 L1037.4,319.0 L1038.5,319.3 L1039.6,319.9 L1040.6,320.4 L1041.7,321.1 L1042.8,321.7 L1043.8,326.8 L1044.9,322.6 L1046.0,323.0 L1047.1,323.7 L1048.1,324.2 L1049.2,324.7 L1050.3,325.3 L1051.3,325.8 L1052.4,326.5 L1053.5,327.1 L1054.5,327.5 L1055.6,327.9 L1055.6,329 Z" fill="rgba(115,191,105,0.2)"/><polyline points="608.0,327.9 609.1,327.6 610.1,326.9 611.2,326.2 612.3,325.5 613.3,325.3 614.4,324.7 615.5,324.0 616.5,323.3 617.6,322.8 618.7,322.1 619.8,321.8 620.8,321.0 621.9,320.4 623.0,319.9 624.0,319.3 625.1,318.7 626.2,318.0 627.2,317.6 628.3,317.1 629.4,316.3 630.4,315.8 631.5,315.2 632.6,314.5 633.6,313.8 634.7,313.5 635.8,313.0 636.8,312.2 637.9,319.1 639.0,311.0 640.0,310.5 641.1,309.9 642.2,309.5 643.3,308.9 644.3,308.1 645.4,307.5 646.5,307.1 647.5,306.3 648.6,306.0 649.7,305.4 650.7,304.6 651.8,304.0 652.9,303.6 653.9,302.9 655.0,302.2 656.1,301.9 657.1,301.2 658.2,300.7 659.3,300.2 660.3,299.4 661.4,298.9 662.5,308.7 663.5,297.8 664.6,297.1 665.7,296.4 666.8,295.8 667.8,295.4 668.9,294.8 670.0,294.4 671.0,293.8 672.1,292.9 673.2,292.4 674.2,291.9 675.3,291.2 676.4,290.8 677.4,290.3 678.5,289.7 679.6,289.1 680.6,288.5 681.7,288.0 682.8,287.3 683.8,288.9 684.9,285.9 686.0,285.5 687.1,284.9 688.1,284.4 689.2,283.7 690.3,283.1 691.3,282.7 692.4,281.9 693.5,281.4 694.5,284.6 695.6,280.4 696.7,279.6 697.7,279.0 698.8,278.5 699.9,277.7 700.9,277.2 702.0,283.2 703.1,276.1 704.1,275.4 705.2,287.6 706.3,274.3 707.3,273.8 708.4,273.3 709.5,282.4 710.6,272.0 711.6,271.5 712.7,271.2 713.8,271.2 714.8,271.4 715.9,271.1 717.0,271.5 718.0,273.6 719.1,273.3 720.2,271.4 721.2,271.2 722.3,271.3 723.4,271.5 724.4,271.1 725.5,271.3 726.6,271.1 727.6,271.4 728.7,271.3 729.8,271.4 730.8,271.2 731.9,271.4 733.0,271.3 734.1,271.2 735.1,271.2 736.2,271.3 737.3,271.2 738.3,271.3 739.4,271.3 740.5,271.2 741.5,271.1 742.6,271.4 743.7,271.1 744.7,271.4 745.8,271.5 746.9,271.3 747.9,271.4 749.0,277.3 750.1,271.5 751.1,271.3 752.2,271.1 753.3,274.5 754.4,271.4 755.4,271.1 756.5,271.5 757.6,271.3 758.6,271.4 759.7,271.4 760.8,271.2 761.8,271.1 762.9,283.8 764.0,271.2 765.0,271.1 766.1,271.2 767.2,271.3 768.2,271.4 769.3,271.2 770.4,271.3 771.4,271.4 772.5,271.4 773.6,271.3 774.6,271.4 775.7,271.2 776.8,271.1 777.9,271.4 778.9,271.4 780.0,271.2 781.1,271.5 782.1,271.3 783.2,271.2 784.3,271.5 785.3,271.4 786.4,271.3 787.5,271.3 788.5,271.5 789.6,271.5 790.7,271.4 791.7,271.5 792.8,271.2 793.9,271.2 794.9,271.4 796.0,271.3 797.1,271.1 798.1,271.2 799.2,271.2 800.3,271.4 801.4,271.1 802.4,271.3 803.5,271.2 804.6,271.4 805.6,271.5 806.7,271.2 807.8,271.2 808.8,271.3 809.9,271.2 811.0,271.2 812.0,271.5 813.1,271.2 814.2,274.4 815.2,271.3 816.3,275.0 817.4,271.4 818.4,271.5 819.5,275.1 820.6,271.1 821.7,279.0 822.7,271.1 823.8,271.2 824.9,271.3 825.9,271.1 827.0,271.4 828.1,271.5 829.1,271.2 830.2,271.4 831.3,271.3 832.3,271.3 833.4,280.1 834.5,271.5 835.5,271.3 836.6,271.5 837.7,271.3 838.7,271.3 839.8,271.2 840.9,271.5 841.9,271.3 843.0,271.3 844.1,271.3 845.2,271.2 846.2,271.3 847.3,271.4 848.4,271.5 849.4,271.1 850.5,271.3 851.6,271.2 852.6,271.5 853.7,271.4 854.8,271.3 855.8,271.5 856.9,271.2 858.0,271.2 859.0,271.4 860.1,271.2 861.2,271.5 862.2,271.3 863.3,271.2 864.4,271.5 865.5,271.2 866.5,271.1 867.6,271.4 868.7,271.4 869.7,271.1 870.8,276.1 871.9,271.3 872.9,275.5 874.0,271.5 875.1,271.5 876.1,271.5 877.2,271.4 878.3,271.1 879.3,271.2 880.4,271.4 881.5,271.1 882.5,271.3 883.6,271.1 884.7,271.5 885.7,271.2 886.8,271.2 887.9,271.5 889.0,271.2 890.0,271.5 891.1,271.2 892.2,271.5 893.2,271.4 894.3,271.1 895.4,271.4 896.4,271.3 897.5,271.3 898.6,271.3 899.6,271.2 900.7,271.5 901.8,271.2 902.8,271.4 903.9,271.2 905.0,271.1 906.0,271.3 907.1,282.6 908.2,271.4 909.2,271.4 910.3,271.4 911.4,271.3 912.5,271.2 913.5,271.2 914.6,271.2 915.7,271.2 916.7,271.5 917.8,271.4 918.9,271.2 919.9,271.2 921.0,271.3 922.1,271.2 923.1,271.2 924.2,271.3 925.3,271.3 926.3,271.5 927.4,271.3 928.5,271.1 929.5,271.4 930.6,271.1 931.7,271.3 932.8,271.2 933.8,271.3 934.9,271.3 936.0,271.4 937.0,271.2 938.1,271.3 939.2,271.4 940.2,271.3 941.3,271.2 942.4,271.5 943.4,271.8 944.5,280.2 945.6,273.3 946.6,273.7 947.7,274.3 948.8,274.7 949.8,275.1 950.9,275.7 952.0,276.4 953.0,276.7 954.1,277.4 955.2,277.7 956.3,278.2 957.3,278.8 958.4,279.4 959.5,280.0 960.5,280.6 961.6,280.9 962.7,281.7 963.7,282.1 964.8,284.5 965.9,283.2 966.9,283.9 968.0,284.2 969.1,284.8 970.1,285.2 971.2,285.7 972.3,286.2 973.3,287.0 974.4,287.3 975.5,288.0 976.5,288.6 977.6,289.3 978.7,289.6 979.8,290.1 980.8,290.5 981.9,291.3 983.0,291.9 984.0,292.4 985.1,299.2 986.2,293.3 987.2,294.0 988.3,294.5 989.4,294.8 990.4,295.4 991.5,303.1 992.6,296.5 993.6,303.3 994.7,297.6 995.8,298.0 996.8,298.8 997.9,299.1 999.0,299.7 1000.1,300.2 1001.1,300.7 1002.2,301.4 1003.3,302.0 1004.3,302.4 1005.4,303.0 1006.5,303.3 1007.5,304.2 1008.6,304.6 1009.7,305.2 1010.7,305.5 1011.8,306.3 1012.9,306.9 1013.9,307.1 1015.0,307.7 1016.1,308.3 1017.1,308.8 1018.2,309.3 1019.3,310.0 1020.3,310.4 1021.4,311.1 1022.5,311.3 1023.6,312.0 1024.6,312.7 1025.7,313.1 1026.8,313.7 1027.8,323.4 1028.9,314.8 1030.0,315.2 1031.0,315.6 1032.1,316.3 1033.2,316.6 1034.2,317.3 1035.3,317.7 1036.4,318.3 1037.4,319.0 1038.5,319.3 1039.6,319.9 1040.6,320.4 1041.7,321.1 1042.8,321.7 1043.8,326.8 1044.9,322.6 1046.0,323.0 1047.1,323.7 1048.1,324.2 1049.2,324.7 1050.3,325.3 1051.3,325.8 1052.4,326.5 1053.5,327.1 1054.5,327.5 1055.6,327.9" fill="none" stroke="#73bf69" stroke-width="0.9"/>
<path d="M231.0,226 L231.0,225.1 L231.8,225.8 L232.6,225.9 L233.4,225.4 L234.2,225.5 L235.0,225.3 L235.8,225.0 L236.6,225.9 L237.4,224.9 L238.2,224.8 L239.0,224.5 L239.8,225.9 L240.6,224.4 L241.4,225.2 L242.2,225.8 L243.0,224.8 L243.8,225.1 L244.6,225.4 L245.4,225.4 L246.2,225.7 L247.0,225.5 L247.8,225.4 L248.6,225.8 L249.4,224.8 L250.2,224.2 L251.0,225.4 L251.8,225.8 L252.6,225.0 L253.4,224.8 L254.2,225.6 L255.0,225.8 L255.8,223.9 L256.6,225.7 L257.4,225.4 L258.2,224.4 L259.0,225.7 L259.8,224.4 L260.6,225.8 L261.4,225.2 L262.2,225.0 L263.0,225.3 L263.8,224.8 L264.6,225.6 L265.4,225.5 L266.2,224.6 L267.0,224.6 L267.8,225.8 L268.6,225.8 L269.4,224.5 L270.2,225.1 L270.9,225.1 L271.7,225.3 L272.5,224.7 L273.3,225.9 L274.1,204.4 L274.9,224.5 L275.7,225.2 L276.5,225.9 L277.3,225.7 L278.1,225.4 L278.9,224.8 L279.7,225.7 L280.5,224.8 L281.3,223.8 L282.1,224.6 L282.9,224.9 L283.7,224.7 L284.5,224.9 L285.3,224.6 L286.1,225.4 L286.9,225.6 L287.7,225.3 L288.5,224.4 L289.3,225.4 L290.1,225.5 L290.9,225.4 L291.7,225.6 L292.5,225.7 L293.3,225.4 L294.1,224.8 L294.9,224.7 L295.7,225.6 L296.5,225.8 L297.3,225.7 L298.1,225.1 L298.9,225.8 L299.7,221.0 L300.5,224.8 L301.3,225.8 L302.1,224.4 L302.9,224.8 L303.7,225.1 L304.5,225.8 L305.3,224.8 L306.1,225.2 L306.9,225.6 L307.7,224.4 L308.5,225.3 L309.3,225.5 L310.1,225.9 L310.9,224.8 L311.7,225.4 L312.5,225.2 L313.3,225.2 L314.1,223.4 L314.9,223.4 L315.7,225.5 L316.5,225.2 L317.3,225.4 L318.1,225.9 L318.9,224.9 L319.7,225.9 L320.5,225.9 L321.3,223.9 L322.1,221.5 L322.9,225.8 L323.7,225.8 L324.5,225.9 L325.3,225.4 L326.1,224.1 L326.9,225.7 L327.7,225.7 L328.5,225.6 L329.3,225.2 L330.1,225.2 L330.9,225.8 L331.7,225.7 L332.5,225.4 L333.3,225.6 L334.1,225.6 L334.9,225.6 L335.7,225.8 L336.5,225.3 L337.3,225.8 L338.1,224.6 L338.9,225.2 L339.7,222.0 L340.5,225.6 L341.3,224.6 L342.1,225.8 L342.9,224.7 L343.7,225.2 L344.5,223.6 L345.3,212.0 L346.1,225.6 L346.9,225.9 L347.7,225.0 L348.5,224.1 L349.3,224.7 L350.1,225.2 L350.8,225.1 L351.6,225.6 L352.4,224.7 L353.2,225.6 L354.0,225.1 L354.8,225.8 L355.6,225.8 L356.4,225.2 L357.2,198.4 L358.0,225.8 L358.8,225.1 L359.6,224.9 L360.4,225.8 L361.2,223.6 L362.0,225.3 L362.8,225.8 L363.6,225.7 L364.4,210.8 L365.2,225.8 L366.0,224.7 L366.8,225.4 L367.6,225.5 L368.4,225.7 L369.2,225.5 L370.0,225.4 L370.8,224.9 L371.6,225.8 L372.4,224.0 L373.2,225.1 L374.0,225.6 L374.8,225.7 L375.6,225.8 L376.4,225.7 L377.2,224.4 L378.0,225.0 L378.8,224.8 L379.6,225.8 L380.4,225.3 L381.2,225.8 L382.0,225.3 L382.8,224.9 L383.6,225.1 L384.4,225.8 L385.2,225.5 L386.0,225.8 L386.8,224.9 L387.6,219.3 L388.4,225.2 L389.2,225.4 L390.0,225.7 L390.0,226 Z" fill="rgba(115,191,105,0.2)"/><polyline points="231.0,225.1 231.8,225.8 232.6,225.9 233.4,225.4 234.2,225.5 235.0,225.3 235.8,225.0 236.6,225.9 237.4,224.9 238.2,224.8 239.0,224.5 239.8,225.9 240.6,224.4 241.4,225.2 242.2,225.8 243.0,224.8 243.8,225.1 244.6,225.4 245.4,225.4 246.2,225.7 247.0,225.5 247.8,225.4 248.6,225.8 249.4,224.8 250.2,224.2 251.0,225.4 251.8,225.8 252.6,225.0 253.4,224.8 254.2,225.6 255.0,225.8 255.8,223.9 256.6,225.7 257.4,225.4 258.2,224.4 259.0,225.7 259.8,224.4 260.6,225.8 261.4,225.2 262.2,225.0 263.0,225.3 263.8,224.8 264.6,225.6 265.4,225.5 266.2,224.6 267.0,224.6 267.8,225.8 268.6,225.8 269.4,224.5 270.2,225.1 270.9,225.1 271.7,225.3 272.5,224.7 273.3,225.9 274.1,204.4 274.9,224.5 275.7,225.2 276.5,225.9 277.3,225.7 278.1,225.4 278.9,224.8 279.7,225.7 280.5,224.8 281.3,223.8 282.1,224.6 282.9,224.9 283.7,224.7 284.5,224.9 285.3,224.6 286.1,225.4 286.9,225.6 287.7,225.3 288.5,224.4 289.3,225.4 290.1,225.5 290.9,225.4 291.7,225.6 292.5,225.7 293.3,225.4 294.1,224.8 294.9,224.7 295.7,225.6 296.5,225.8 297.3,225.7 298.1,225.1 298.9,225.8 299.7,221.0 300.5,224.8 301.3,225.8 302.1,224.4 302.9,224.8 303.7,225.1 304.5,225.8 305.3,224.8 306.1,225.2 306.9,225.6 307.7,224.4 308.5,225.3 309.3,225.5 310.1,225.9 310.9,224.8 311.7,225.4 312.5,225.2 313.3,225.2 314.1,223.4 314.9,223.4 315.7,225.5 316.5,225.2 317.3,225.4 318.1,225.9 318.9,224.9 319.7,225.9 320.5,225.9 321.3,223.9 322.1,221.5 322.9,225.8 323.7,225.8 324.5,225.9 325.3,225.4 326.1,224.1 326.9,225.7 327.7,225.7 328.5,225.6 329.3,225.2 330.1,225.2 330.9,225.8 331.7,225.7 332.5,225.4 333.3,225.6 334.1,225.6 334.9,225.6 335.7,225.8 336.5,225.3 337.3,225.8 338.1,224.6 338.9,225.2 339.7,222.0 340.5,225.6 341.3,224.6 342.1,225.8 342.9,224.7 343.7,225.2 344.5,223.6 345.3,212.0 346.1,225.6 346.9,225.9 347.7,225.0 348.5,224.1 349.3,224.7 350.1,225.2 350.8,225.1 351.6,225.6 352.4,224.7 353.2,225.6 354.0,225.1 354.8,225.8 355.6,225.8 356.4,225.2 357.2,198.4 358.0,225.8 358.8,225.1 359.6,224.9 360.4,225.8 361.2,223.6 362.0,225.3 362.8,225.8 363.6,225.7 364.4,210.8 365.2,225.8 366.0,224.7 366.8,225.4 367.6,225.5 368.4,225.7 369.2,225.5 370.0,225.4 370.8,224.9 371.6,225.8 372.4,224.0 373.2,225.1 374.0,225.6 374.8,225.7 375.6,225.8 376.4,225.7 377.2,224.4 378.0,225.0 378.8,224.8 379.6,225.8 380.4,225.3 381.2,225.8 382.0,225.3 382.8,224.9 383.6,225.1 384.4,225.8 385.2,225.5 386.0,225.8 386.8,224.9 387.6,219.3 388.4,225.2 389.2,225.4 390.0,225.7" fill="none" stroke="#73bf69" stroke-width="0.9"/>
<path d="M64.0,329 L64.0,312.3 L223.8,312.3 L223.8,329 Z" fill="rgba(115,191,105,0.2)"/><polyline points="64.0,312.3 223.8,312.3" fill="none" stroke="#73bf69" stroke-width="0.9"/>
<path d="M231.0,329 L231.0,328.3 L231.5,328.3 L232.0,328.3 L232.5,328.3 L233.0,328.3 L233.5,328.3 L234.0,328.3 L234.5,328.3 L235.0,328.3 L235.5,328.3 L236.0,328.3 L236.5,328.3 L237.0,328.3 L237.5,328.3 L238.0,328.3 L238.5,328.3 L239.0,328.3 L239.5,328.3 L240.0,328.3 L240.5,328.3 L241.0,328.3 L241.5,328.3 L242.0,328.3 L242.5,328.3 L243.0,328.3 L243.5,328.3 L244.0,328.3 L244.5,328.3 L245.0,328.3 L245.5,326.2 L246.0,326.6 L246.5,327.2 L246.9,324.5 L247.4,326.8 L247.9,324.8 L248.4,327.2 L248.9,325.6 L249.4,327.1 L249.9,327.9 L250.4,327.4 L250.9,324.6 L251.4,326.5 L251.9,326.5 L252.4,326.4 L252.9,327.3 L253.4,325.6 L253.9,325.0 L254.4,326.9 L254.9,327.3 L255.4,327.1 L255.9,324.8 L256.4,326.5 L256.9,327.0 L257.4,324.3 L257.9,326.4 L258.4,327.7 L258.9,327.4 L259.4,326.4 L259.9,327.3 L260.4,324.4 L260.9,324.8 L261.4,327.6 L261.9,327.0 L262.4,326.8 L262.9,326.9 L263.4,327.0 L263.9,324.0 L264.4,327.3 L264.9,324.3 L265.4,327.0 L265.9,326.5 L266.4,327.3 L266.9,325.7 L267.4,326.2 L267.9,327.1 L268.4,326.4 L268.9,327.6 L269.4,325.7 L269.9,324.5 L270.4,327.6 L270.9,324.7 L271.4,326.6 L271.9,327.2 L272.4,327.4 L272.9,326.8 L273.4,324.3 L273.9,327.0 L274.4,325.9 L274.9,326.7 L275.4,326.4 L275.9,326.6 L276.4,324.4 L276.9,326.5 L277.4,327.6 L277.9,326.4 L278.4,326.7 L278.8,327.3 L279.3,326.5 L279.8,327.1 L280.3,327.3 L280.8,327.0 L281.3,326.4 L281.8,326.7 L282.3,326.4 L282.8,325.8 L283.3,326.7 L283.8,327.0 L284.3,326.2 L284.8,326.2 L285.3,324.5 L285.8,327.2 L286.3,327.2 L286.8,326.9 L287.3,327.3 L287.8,327.0 L288.3,326.9 L288.8,325.9 L289.3,326.5 L289.8,326.9 L290.3,327.0 L290.8,325.1 L291.3,327.3 L291.8,325.3 L292.3,327.4 L292.8,325.1 L293.3,326.7 L293.8,326.7 L294.3,326.2 L294.8,325.6 L295.3,325.7 L295.8,325.8 L296.3,326.4 L296.8,322.5 L297.3,326.3 L297.8,326.0 L298.3,324.8 L298.8,327.5 L299.3,325.0 L299.8,327.3 L300.3,325.2 L300.8,326.9 L301.3,327.4 L301.8,326.3 L302.3,326.6 L302.8,327.6 L303.3,326.7 L303.8,326.6 L304.3,327.2 L304.8,326.0 L305.3,325.2 L305.8,326.3 L306.3,325.3 L306.8,323.9 L307.3,323.1 L307.8,323.2 L308.3,325.6 L308.8,327.0 L309.3,324.7 L309.8,325.3 L310.3,324.1 L310.7,326.6 L311.2,325.3 L311.7,319.5 L312.2,325.6 L312.7,323.5 L313.2,326.8 L313.7,327.4 L314.2,326.9 L314.7,327.1 L315.2,324.0 L315.7,325.5 L316.2,327.1 L316.7,324.4 L317.2,326.1 L317.7,327.4 L318.2,319.5 L318.7,327.1 L319.2,322.3 L319.7,327.3 L320.2,326.9 L320.7,324.2 L321.2,327.6 L321.7,324.5 L322.2,327.3 L322.7,324.2 L323.2,326.2 L323.7,327.6 L324.2,321.8 L324.7,326.3 L325.2,327.1 L325.7,324.7 L326.2,324.6 L326.7,324.5 L327.2,325.1 L327.7,326.8 L328.2,327.1 L328.7,326.6 L329.2,327.2 L329.7,323.6 L330.2,326.5 L330.7,326.3 L331.2,327.6 L331.7,326.3 L332.2,325.7 L332.7,326.2 L333.2,325.6 L333.7,325.9 L334.2,327.1 L334.7,325.8 L335.2,325.7 L335.7,324.3 L336.2,327.4 L336.7,325.8 L337.2,323.0 L337.7,325.3 L338.2,327.3 L338.7,324.6 L339.2,322.9 L339.7,324.4 L340.2,321.0 L340.7,327.0 L341.2,326.0 L341.7,326.4 L342.2,325.9 L342.6,326.4 L343.1,324.6 L343.6,326.6 L344.1,324.4 L344.6,326.8 L345.1,318.5 L345.6,325.8 L346.1,324.9 L346.6,327.6 L347.1,323.4 L347.6,327.5 L348.1,326.3 L348.6,323.9 L349.1,326.4 L349.6,323.4 L350.1,325.3 L350.6,326.5 L351.1,324.3 L351.6,326.4 L352.1,327.2 L352.6,326.0 L353.1,322.0 L353.6,325.5 L354.1,327.6 L354.6,327.7 L355.1,327.0 L355.6,326.3 L356.1,325.3 L356.6,327.0 L357.1,302.2 L357.6,326.9 L358.1,325.4 L358.6,324.1 L359.1,327.6 L359.6,327.6 L360.1,325.2 L360.6,326.7 L361.1,323.8 L361.6,326.6 L362.1,326.9 L362.6,326.0 L363.1,325.5 L363.6,325.5 L364.1,323.1 L364.6,327.6 L365.1,320.5 L365.6,327.5 L366.1,325.0 L366.6,326.6 L367.1,325.8 L367.6,325.5 L368.1,327.5 L368.6,327.5 L369.1,326.4 L369.6,327.4 L370.1,324.0 L370.6,325.2 L371.1,326.2 L371.6,326.9 L372.1,326.9 L372.6,324.5 L373.1,324.2 L373.6,326.2 L374.1,326.7 L374.5,319.8 L375.0,326.5 L375.5,326.2 L376.0,327.7 L376.5,323.1 L377.0,326.4 L377.5,324.9 L378.0,326.3 L378.5,325.7 L379.0,327.5 L379.5,326.9 L380.0,323.8 L380.5,325.6 L381.0,324.5 L381.5,326.2 L382.0,323.1 L382.5,323.5 L383.0,327.5 L383.5,325.7 L384.0,326.7 L384.5,326.7 L385.0,327.4 L385.5,326.7 L386.0,327.6 L386.5,325.4 L387.0,324.9 L387.5,325.0 L388.0,326.0 L388.5,323.6 L389.0,326.0 L389.5,327.2 L390.0,326.0 L390.0,329 Z" fill="rgba(115,191,105,0.2)"/><polyline points="231.0,328.3 231.5,328.3 232.0,328.3 232.5,328.3 233.0,328.3 233.5,328.3 234.0,328.3 234.5,328.3 235.0,328.3 235.5,328.3 236.0,328.3 236.5,328.3 237.0,328.3 237.5,328.3 238.0,328.3 238.5,328.3 239.0,328.3 239.5,328.3 240.0,328.3 240.5,328.3 241.0,328.3 241.5,328.3 242.0,328.3 242.5,328.3 243.0,328.3 243.5,328.3 244.0,328.3 244.5,328.3 245.0,328.3 245.5,326.2 246.0,326.6 246.5,327.2 246.9,324.5 247.4,326.8 247.9,324.8 248.4,327.2 248.9,325.6 249.4,327.1 249.9,327.9 250.4,327.4 250.9,324.6 251.4,326.5 251.9,326.5 252.4,326.4 252.9,327.3 253.4,325.6 253.9,325.0 254.4,326.9 254.9,327.3 255.4,327.1 255.9,324.8 256.4,326.5 256.9,327.0 257.4,324.3 257.9,326.4 258.4,327.7 258.9,327.4 259.4,326.4 259.9,327.3 260.4,324.4 260.9,324.8 261.4,327.6 261.9,327.0 262.4,326.8 262.9,326.9 263.4,327.0 263.9,324.0 264.4,327.3 264.9,324.3 265.4,327.0 265.9,326.5 266.4,327.3 266.9,325.7 267.4,326.2 267.9,327.1 268.4,326.4 268.9,327.6 269.4,325.7 269.9,324.5 270.4,327.6 270.9,324.7 271.4,326.6 271.9,327.2 272.4,327.4 272.9,326.8 273.4,324.3 273.9,327.0 274.4,325.9 274.9,326.7 275.4,326.4 275.9,326.6 276.4,324.4 276.9,326.5 277.4,327.6 277.9,326.4 278.4,326.7 278.8,327.3 279.3,326.5 279.8,327.1 280.3,327.3 280.8,327.0 281.3,326.4 281.8,326.7 282.3,326.4 282.8,325.8 283.3,326.7 283.8,327.0 284.3,326.2 284.8,326.2 285.3,324.5 285.8,327.2 286.3,327.2 286.8,326.9 287.3,327.3 287.8,327.0 288.3,326.9 288.8,325.9 289.3,326.5 289.8,326.9 290.3,327.0 290.8,325.1 291.3,327.3 291.8,325.3 292.3,327.4 292.8,325.1 293.3,326.7 293.8,326.7 294.3,326.2 294.8,325.6 295.3,325.7 295.8,325.8 296.3,326.4 296.8,322.5 297.3,326.3 297.8,326.0 298.3,324.8 298.8,327.5 299.3,325.0 299.8,327.3 300.3,325.2 300.8,326.9 301.3,327.4 301.8,326.3 302.3,326.6 302.8,327.6 303.3,326.7 303.8,326.6 304.3,327.2 304.8,326.0 305.3,325.2 305.8,326.3 306.3,325.3 306.8,323.9 307.3,323.1 307.8,323.2 308.3,325.6 308.8,327.0 309.3,324.7 309.8,325.3 310.3,324.1 310.7,326.6 311.2,325.3 311.7,319.5 312.2,325.6 312.7,323.5 313.2,326.8 313.7,327.4 314.2,326.9 314.7,327.1 315.2,324.0 315.7,325.5 316.2,327.1 316.7,324.4 317.2,326.1 317.7,327.4 318.2,319.5 318.7,327.1 319.2,322.3 319.7,327.3 320.2,326.9 320.7,324.2 321.2,327.6 321.7,324.5 322.2,327.3 322.7,324.2 323.2,326.2 323.7,327.6 324.2,321.8 324.7,326.3 325.2,327.1 325.7,324.7 326.2,324.6 326.7,324.5 327.2,325.1 327.7,326.8 328.2,327.1 328.7,326.6 329.2,327.2 329.7,323.6 330.2,326.5 330.7,326.3 331.2,327.6 331.7,326.3 332.2,325.7 332.7,326.2 333.2,325.6 333.7,325.9 334.2,327.1 334.7,325.8 335.2,325.7 335.7,324.3 336.2,327.4 336.7,325.8 337.2,323.0 337.7,325.3 338.2,327.3 338.7,324.6 339.2,322.9 339.7,324.4 340.2,321.0 340.7,327.0 341.2,326.0 341.7,326.4 342.2,325.9 342.6,326.4 343.1,324.6 343.6,326.6 344.1,324.4 344.6,326.8 345.1,318.5 345.6,325.8 346.1,324.9 346.6,327.6 347.1,323.4 347.6,327.5 348.1,326.3 348.6,323.9 349.1,326.4 349.6,323.4 350.1,325.3 350.6,326.5 351.1,324.3 351.6,326.4 352.1,327.2 352.6,326.0 353.1,322.0 353.6,325.5 354.1,327.6 354.6,327.7 355.1,327.0 355.6,326.3 356.1,325.3 356.6,327.0 357.1,302.2 357.6,326.9 358.1,325.4 358.6,324.1 359.1,327.6 359.6,327.6 360.1,325.2 360.6,326.7 361.1,323.8 361.6,326.6 362.1,326.9 362.6,326.0 363.1,325.5 363.6,325.5 364.1,323.1 364.6,327.6 365.1,320.5 365.6,327.5 366.1,325.0 366.6,326.6 367.1,325.8 367.6,325.5 368.1,327.5 368.6,327.5 369.1,326.4 369.6,327.4 370.1,324.0 370.6,325.2 371.1,326.2 371.6,326.9 372.1,326.9 372.6,324.5 373.1,324.2 373.6,326.2 374.1,326.7 374.5,319.8 375.0,326.5 375.5,326.2 376.0,327.7 376.5,323.1 377.0,326.4 377.5,324.9 378.0,326.3 378.5,325.7 379.0,327.5 379.5,326.9 380.0,323.8 380.5,325.6 381.0,324.5 381.5,326.2 382.0,323.1 382.5,323.5 383.0,327.5 383.5,325.7 384.0,326.7 384.5,326.7 385.0,327.4 385.5,326.7 386.0,327.6 386.5,325.4 387.0,324.9 387.5,325.0 388.0,326.0 388.5,323.6 389.0,326.0 389.5,327.2 390.0,326.0" fill="none" stroke="#73bf69" stroke-width="0.8"/>
</svg>
<!-- error panel -->
<div class="a" style="left:403px;top:156px;width:153px;height:51px;background:#22252b"></div>
<div class="a" style="left:403px;top:156px;width:39px;height:51px;background:#d10e5c"></div>
<svg style="position:absolute;left:415.6px;top:175.2px" width="13" height="12" viewBox="0 0 13 12"><path d="M6.5 1 L12.2 10.8 H0.8 Z" fill="none" stroke="#fff" stroke-width="1.25" stroke-linejoin="round"/><rect x="5.9" y="4.3" width="1.2" height="3.4" rx="0.5" fill="#fff"/><rect x="5.9" y="8.4" width="1.2" height="1.1" rx="0.5" fill="#fff"/></svg>
<div class="a" style="left:450.8px;top:165px;font-size:7.8px;line-height:11.3px;color:#d8d9e1">Panel plugin not found:<br>blackmirror1-singlestat-<br>math-panel</div>
<svg width="1099" height="629" viewBox="0 0 1099 629">
<defs><linearGradient id="gg" x1="0" y1="0" x2="0" y2="1"><stop offset="0" stop-color="#7eb26d" stop-opacity="0.14"/><stop offset="1" stop-color="#7eb26d" stop-opacity="0.02"/></linearGradient><linearGradient id="pg" x1="0" y1="0" x2="0" y2="1"><stop offset="0" stop-color="#a040d0" stop-opacity="0.10"/><stop offset="1" stop-color="#a040d0" stop-opacity="0.03"/></linearGradient><linearGradient id="cg" x1="0" y1="0" x2="0" y2="1"><stop offset="0" stop-color="#6ed0e0" stop-opacity="0.06"/><stop offset="1" stop-color="#6ed0e0" stop-opacity="0.02"/></linearGradient></defs>
<g stroke="#313337" stroke-width="1"><line x1="96.4" y1="361.2" x2="773.5" y2="361.2"/><line x1="96.4" y1="400.7" x2="773.5" y2="400.7"/><line x1="96.4" y1="440.2" x2="773.5" y2="440.2"/><line x1="96.4" y1="479.7" x2="773.5" y2="479.7"/><line x1="96.4" y1="519.2" x2="773.5" y2="519.2"/><line x1="111.6" y1="361.2" x2="111.6" y2="519.2"/><line x1="145.5" y1="361.2" x2="145.5" y2="519.2"/><line x1="179.3" y1="361.2" x2="179.3" y2="519.2"/><line x1="213.2" y1="361.2" x2="213.2" y2="519.2"/><line x1="247.1" y1="361.2" x2="247.1" y2="519.2"/><line x1="280.9" y1="361.2" x2="280.9" y2="519.2"/><line x1="314.8" y1="361.2" x2="314.8" y2="519.2"/><line x1="348.6" y1="361.2" x2="348.6" y2="519.2"/><line x1="382.5" y1="361.2" x2="382.5" y2="519.2"/><line x1="416.3" y1="361.2" x2="416.3" y2="519.2"/><line x1="450.2" y1="361.2" x2="450.2" y2="519.2"/><line x1="484.0" y1="361.2" x2="484.0" y2="519.2"/><line x1="517.9" y1="361.2" x2="517.9" y2="519.2"/><line x1="551.7" y1="361.2" x2="551.7" y2="519.2"/><line x1="585.6" y1="361.2" x2="585.6" y2="519.2"/><line x1="619.5" y1="361.2" x2="619.5" y2="519.2"/><line x1="653.3" y1="361.2" x2="653.3" y2="519.2"/><line x1="687.2" y1="361.2" x2="687.2" y2="519.2"/><line x1="721.0" y1="361.2" x2="721.0" y2="519.2"/><line x1="754.9" y1="361.2" x2="754.9" y2="519.2"/></g>
<line x1="96.4" y1="361.2" x2="773.5" y2="361.2" stroke="#3a3b40" stroke-width="1"/>
<g stroke="#8e8e8e" stroke-width="0.6"><line x1="773.5" y1="519.2" x2="776.5" y2="519.2"/><line x1="773.5" y1="492.9" x2="776.5" y2="492.9"/><line x1="773.5" y1="466.5" x2="776.5" y2="466.5"/><line x1="773.5" y1="440.2" x2="776.5" y2="440.2"/><line x1="773.5" y1="413.9" x2="776.5" y2="413.9"/><line x1="773.5" y1="387.5" x2="776.5" y2="387.5"/><line x1="773.5" y1="361.2" x2="776.5" y2="361.2"/></g>
<path d="M96.4,519.2 L96.4,511.4 L99.2,510.1 L102.0,506.3 L104.8,505.7 L107.6,504.4 L110.4,506.6 L113.2,498.5 L116.0,498.1 L118.8,494.9 L121.6,493.1 L124.4,492.9 L127.2,489.9 L130.0,491.0 L132.8,488.2 L135.6,485.3 L138.4,482.2 L141.2,479.9 L144.0,478.5 L146.8,475.6 L149.6,472.9 L152.5,470.5 L155.3,468.8 L158.1,467.8 L160.9,465.3 L163.7,460.5 L166.5,459.6 L169.3,458.1 L172.1,457.8 L174.9,452.6 L177.7,449.8 L180.5,446.2 L183.3,447.0 L186.1,441.2 L188.9,441.0 L191.7,437.1 L194.5,437.2 L197.3,434.8 L200.1,431.1 L202.9,429.1 L205.7,424.6 L208.5,424.3 L211.3,420.8 L214.1,417.5 L216.9,424.6 L219.7,412.8 L222.5,409.6 L225.3,407.9 L228.1,405.9 L230.9,402.6 L233.7,409.0 L236.5,399.0 L239.3,393.7 L242.1,394.1 L244.9,391.0 L247.7,401.0 L250.5,387.9 L253.3,383.7 L256.1,382.8 L258.9,381.7 L261.7,382.1 L264.6,378.8 L267.4,381.6 L270.2,380.8 L273.0,394.0 L275.8,381.5 L278.6,388.0 L281.4,380.6 L284.2,388.0 L287.0,382.1 L289.8,381.8 L292.6,379.0 L295.4,381.6 L298.2,381.1 L301.0,392.0 L303.8,382.3 L306.6,380.6 L309.4,383.3 L312.2,408.7 L315.0,382.3 L317.8,382.4 L320.6,380.3 L323.4,379.3 L326.2,381.5 L329.0,382.1 L331.8,384.9 L334.6,380.7 L337.4,380.7 L340.2,378.9 L343.0,381.5 L345.8,400.0 L348.6,380.7 L351.4,379.1 L354.2,381.8 L357.0,382.3 L359.8,381.0 L362.6,381.8 L365.4,379.1 L368.2,379.8 L371.0,379.3 L373.8,382.3 L376.7,420.0 L379.5,380.5 L382.3,378.8 L385.1,380.0 L387.9,380.7 L390.7,381.9 L393.5,379.3 L396.3,381.8 L399.1,381.7 L401.9,381.8 L404.7,382.0 L407.5,404.0 L410.3,381.8 L413.1,381.2 L415.9,381.4 L418.7,379.0 L421.5,379.7 L424.3,382.3 L427.1,381.2 L429.9,379.0 L432.7,379.9 L435.5,379.7 L438.3,410.0 L441.1,379.2 L443.9,383.7 L446.7,380.4 L449.5,379.5 L452.3,382.2 L455.1,381.9 L457.9,380.5 L460.7,379.8 L463.5,384.4 L466.3,382.1 L469.1,397.0 L471.9,380.1 L474.7,379.1 L477.5,379.7 L480.3,380.1 L483.1,381.0 L485.9,383.9 L488.8,381.1 L491.6,379.2 L494.4,381.4 L497.2,379.8 L500.0,379.3 L502.8,403.6 L505.6,379.3 L508.4,379.1 L511.2,381.9 L514.0,380.6 L516.8,379.8 L519.6,381.0 L522.4,379.6 L525.2,381.8 L528.0,381.3 L530.8,378.8 L533.6,381.8 L536.4,379.3 L539.2,381.4 L542.0,422.6 L544.8,381.1 L547.6,381.0 L550.4,380.6 L553.2,382.0 L556.0,381.1 L558.8,379.6 L561.6,378.8 L564.4,379.7 L567.2,414.0 L570.0,379.5 L572.8,379.5 L575.6,379.6 L578.4,382.2 L581.2,380.3 L584.0,380.2 L586.8,380.3 L589.6,381.4 L592.4,409.0 L595.2,383.4 L598.0,384.3 L600.9,384.9 L603.7,389.1 L606.5,389.5 L609.3,390.9 L612.1,394.2 L614.9,393.3 L617.7,398.8 L620.5,400.3 L623.3,404.2 L626.1,407.3 L628.9,409.0 L631.7,409.9 L634.5,413.2 L637.3,430.0 L640.1,415.3 L642.9,419.3 L645.7,422.5 L648.5,421.9 L651.3,424.6 L654.1,428.6 L656.9,431.2 L659.7,433.0 L662.5,433.1 L665.3,436.0 L668.1,439.4 L670.9,440.0 L673.7,440.4 L676.5,445.6 L679.3,447.1 L682.1,451.3 L684.9,449.1 L687.7,451.8 L690.5,452.9 L693.3,454.6 L696.1,456.4 L698.9,470.0 L701.7,461.5 L704.5,464.7 L707.3,468.4 L710.1,470.9 L713.0,470.6 L715.8,471.7 L718.6,474.4 L721.4,477.1 L724.2,479.4 L727.0,482.2 L729.8,488.9 L732.6,503.0 L735.4,489.7 L738.2,492.0 L741.0,495.0 L743.8,501.0 L746.6,503.2 L749.4,501.4 L752.2,504.9 L755.0,507.0 L757.8,509.8 L760.6,509.6 L763.4,513.1 L766.2,514.0 L766.2,519.2 Z" fill="url(#gg)"/>
<path d="M96.4,519.2 L96.4,473.7 L98.4,474.4 L100.4,476.5 L102.4,473.8 L104.4,474.0 L106.4,474.5 L108.4,472.1 L110.4,474.1 L112.4,474.8 L114.4,475.8 L116.4,471.6 L118.4,472.8 L120.4,471.5 L122.4,475.9 L124.4,475.2 L126.4,471.3 L128.4,476.9 L130.4,476.8 L132.4,474.9 L134.3,474.7 L136.3,471.9 L138.3,471.1 L140.3,474.2 L142.3,469.3 L144.3,470.3 L146.3,470.5 L148.3,468.1 L150.3,472.1 L152.3,471.6 L154.3,475.3 L156.3,471.7 L158.3,472.6 L160.3,470.9 L162.3,472.2 L164.3,469.9 L166.3,467.8 L168.3,474.6 L170.3,474.3 L172.3,472.4 L174.3,470.8 L176.3,466.6 L178.3,465.4 L180.3,465.7 L182.3,463.2 L184.3,469.8 L186.3,465.9 L188.3,470.0 L190.3,465.1 L192.3,470.5 L194.3,469.1 L196.3,460.3 L198.3,462.1 L200.3,468.8 L202.3,464.1 L204.3,468.9 L206.3,449.2 L208.3,454.1 L210.2,441.3 L212.2,440.6 L214.2,451.5 L216.2,455.8 L218.2,440.5 L220.2,472.2 L222.2,452.2 L224.2,447.5 L226.2,452.1 L228.2,456.2 L230.2,466.9 L232.2,457.9 L234.2,457.1 L236.2,462.4 L238.2,446.5 L240.2,426.8 L242.2,445.0 L244.2,447.5 L246.2,467.2 L248.2,429.3 L250.2,430.0 L252.2,464.2 L254.2,444.6 L256.2,475.0 L258.2,462.1 L260.2,449.7 L262.2,444.3 L264.2,448.3 L266.2,451.7 L268.2,466.9 L270.2,456.9 L272.2,474.6 L274.2,465.6 L276.2,428.5 L278.2,461.2 L280.2,474.8 L282.2,484.4 L284.2,453.0 L286.1,443.0 L288.1,475.3 L290.1,428.6 L292.1,433.4 L294.1,446.6 L296.1,426.0 L298.1,456.5 L300.1,480.6 L302.1,465.9 L304.1,442.4 L306.1,453.6 L308.1,446.6 L310.1,456.9 L312.1,451.4 L314.1,485.7 L316.1,460.0 L318.1,445.6 L320.1,442.5 L322.1,481.8 L324.1,472.3 L326.1,454.5 L328.1,429.5 L330.1,473.1 L332.1,461.2 L334.1,482.3 L336.1,436.1 L338.1,476.9 L340.1,465.4 L342.1,477.8 L344.1,437.1 L346.1,458.2 L348.1,457.1 L350.1,444.1 L352.1,467.8 L354.1,482.2 L356.1,461.1 L358.1,453.5 L360.0,426.2 L362.0,425.4 L364.0,454.5 L366.0,460.2 L368.0,458.0 L370.0,475.6 L372.0,449.8 L374.0,447.3 L376.0,465.5 L378.0,453.5 L380.0,476.6 L382.0,447.2 L384.0,463.0 L386.0,484.3 L388.0,457.2 L390.0,445.5 L392.0,420.0 L394.0,482.0 L396.0,475.9 L398.0,453.7 L400.0,447.6 L402.0,458.3 L404.0,450.2 L406.0,438.7 L408.0,443.9 L410.0,464.7 L412.0,460.4 L414.0,450.0 L416.0,425.3 L418.0,453.8 L420.0,463.6 L422.0,445.7 L424.0,458.4 L426.0,458.4 L428.0,463.0 L430.0,481.6 L432.0,454.4 L434.0,442.3 L435.9,460.6 L437.9,449.1 L439.9,460.1 L441.9,430.0 L443.9,430.5 L445.9,437.7 L447.9,466.2 L449.9,426.8 L451.9,458.3 L453.9,477.3 L455.9,464.9 L457.9,424.0 L459.9,458.9 L461.9,460.8 L463.9,434.0 L465.9,428.0 L467.9,485.7 L469.9,479.5 L471.9,429.5 L473.9,484.0 L475.9,444.2 L477.9,456.3 L479.9,431.8 L481.9,463.0 L483.9,462.8 L485.9,450.7 L487.9,427.0 L489.9,455.4 L491.9,436.8 L493.9,466.6 L495.9,466.7 L497.9,447.8 L499.9,449.5 L501.9,433.9 L503.9,463.9 L505.9,450.1 L507.9,464.0 L509.9,474.9 L511.8,485.6 L513.8,456.9 L515.8,455.9 L517.8,457.7 L519.8,467.2 L521.8,452.4 L523.8,432.9 L525.8,460.0 L527.8,456.0 L529.8,466.9 L531.8,475.8 L533.8,445.3 L535.8,463.2 L537.8,478.7 L539.8,447.0 L541.8,466.1 L543.8,462.3 L545.8,447.0 L547.8,459.9 L549.8,451.2 L551.8,444.7 L553.8,426.7 L555.8,448.5 L557.8,455.8 L559.8,451.8 L561.8,455.8 L563.8,447.3 L565.8,422.0 L567.8,464.1 L569.8,464.3 L571.8,461.3 L573.8,437.6 L575.8,450.2 L577.8,475.1 L579.8,484.4 L581.8,448.2 L583.8,428.6 L585.7,463.6 L587.7,462.5 L589.7,452.5 L591.7,442.5 L593.7,459.7 L595.7,485.6 L597.7,455.1 L599.7,428.0 L601.7,446.9 L603.7,444.8 L605.7,456.3 L607.7,456.8 L609.7,446.8 L611.7,463.8 L613.7,485.0 L615.7,443.6 L617.7,478.5 L619.7,429.6 L621.7,455.4 L623.7,370.4 L625.7,460.2 L627.7,474.5 L629.7,461.2 L631.7,447.1 L633.7,455.3 L635.7,465.2 L637.7,434.9 L639.7,480.8 L641.7,457.6 L643.7,467.5 L645.7,428.6 L647.7,482.4 L649.7,436.4 L651.7,465.3 L653.7,481.7 L655.7,435.7 L657.7,460.8 L659.7,450.9 L661.6,442.3 L663.6,458.6 L665.6,448.0 L667.6,481.3 L669.6,459.2 L671.6,455.9 L673.6,468.0 L675.6,460.2 L677.6,438.7 L679.6,458.0 L681.6,428.6 L683.6,443.3 L685.6,451.8 L687.6,448.5 L689.6,479.7 L691.6,467.1 L693.6,467.9 L695.6,463.0 L697.6,457.5 L699.6,425.6 L701.6,474.2 L703.6,446.4 L705.6,457.9 L707.6,440.4 L709.6,456.8 L711.6,447.8 L713.6,450.1 L715.6,451.8 L717.6,448.0 L719.6,447.0 L721.6,454.1 L723.6,452.8 L725.6,448.2 L727.6,456.4 L729.6,449.2 L731.6,444.6 L733.6,449.2 L735.6,445.9 L737.5,448.4 L739.5,459.6 L741.5,453.4 L743.5,463.0 L745.5,460.7 L747.5,448.5 L749.5,427.4 L751.5,465.5 L753.5,450.2 L755.5,465.6 L757.5,457.4 L759.5,458.7 L761.5,468.0 L763.5,455.3 L763.5,519.2 Z" fill="url(#pg)"/>
<path d="M96.4,519.2 L96.4,516.2 L99.2,514.7 L102.0,513.8 L104.8,513.0 L107.6,512.6 L110.4,511.4 L113.2,511.1 L116.0,509.7 L118.8,509.2 L121.6,508.1 L124.4,507.2 L127.2,507.1 L130.0,506.5 L132.8,505.9 L135.6,505.2 L138.4,504.7 L141.2,503.3 L144.0,503.4 L146.8,502.0 L149.6,502.1 L152.5,501.6 L155.3,501.0 L158.1,499.9 L160.9,499.0 L163.7,498.7 L166.5,498.0 L169.3,497.5 L172.1,497.2 L174.9,496.2 L177.7,495.3 L180.5,494.7 L183.3,494.5 L186.1,493.6 L188.9,493.1 L191.7,492.3 L194.5,491.9 L197.3,491.7 L200.1,490.5 L202.9,490.3 L205.7,489.8 L208.5,489.0 L211.3,487.6 L214.1,487.7 L216.9,489.9 L219.7,485.2 L222.5,484.9 L225.3,483.8 L228.1,482.8 L230.9,481.8 L233.7,483.4 L236.5,479.2 L239.3,478.9 L242.1,477.7 L244.9,475.9 L247.7,479.8 L250.5,473.8 L253.3,473.1 L256.1,472.3 L258.9,472.6 L261.7,471.9 L264.6,471.5 L267.4,471.8 L270.2,471.8 L273.0,476.0 L275.8,471.9 L278.6,474.4 L281.4,471.8 L284.2,474.5 L287.0,471.9 L289.8,471.4 L292.6,471.4 L295.4,471.5 L298.2,472.2 L301.0,475.5 L303.8,471.5 L306.6,471.5 L309.4,471.7 L312.2,481.1 L315.0,472.3 L317.8,471.6 L320.6,472.1 L323.4,471.9 L326.2,471.7 L329.0,472.1 L331.8,471.8 L334.6,471.6 L337.4,471.4 L340.2,471.6 L343.0,471.8 L345.8,477.7 L348.6,471.8 L351.4,471.7 L354.2,471.8 L357.0,472.1 L359.8,471.6 L362.6,471.6 L365.4,472.2 L368.2,471.6 L371.0,471.6 L373.8,471.5 L376.7,484.3 L379.5,471.5 L382.3,471.4 L385.1,471.5 L387.9,472.0 L390.7,471.6 L393.5,471.9 L396.3,471.9 L399.1,471.8 L401.9,472.1 L404.7,472.0 L407.5,479.4 L410.3,471.9 L413.1,471.3 L415.9,471.8 L418.7,471.6 L421.5,471.5 L424.3,471.7 L427.1,471.9 L429.9,471.6 L432.7,471.3 L435.5,472.0 L438.3,481.5 L441.1,471.5 L443.9,472.1 L446.7,471.5 L449.5,471.4 L452.3,472.1 L455.1,471.5 L457.9,471.8 L460.7,471.6 L463.5,472.1 L466.3,472.2 L469.1,477.7 L471.9,471.6 L474.7,471.6 L477.5,471.8 L480.3,472.2 L483.1,472.2 L485.9,471.8 L488.8,471.3 L491.6,471.6 L494.4,471.6 L497.2,471.7 L500.0,472.2 L502.8,479.9 L505.6,471.4 L508.4,471.6 L511.2,471.7 L514.0,471.6 L516.8,471.4 L519.6,471.5 L522.4,471.7 L525.2,471.3 L528.0,471.8 L530.8,472.2 L533.6,471.5 L536.4,472.0 L539.2,472.1 L542.0,485.4 L544.8,471.4 L547.6,471.4 L550.4,471.7 L553.2,471.8 L556.0,471.8 L558.8,472.0 L561.6,472.0 L564.4,472.2 L567.2,482.8 L570.0,472.0 L572.8,471.6 L575.6,472.1 L578.4,471.5 L581.2,472.2 L584.0,472.3 L586.8,472.2 L589.6,472.2 L592.4,481.4 L595.2,472.4 L598.0,473.0 L600.9,473.4 L603.7,474.3 L606.5,475.3 L609.3,475.0 L612.1,475.6 L614.9,476.4 L617.7,477.3 L620.5,478.6 L623.3,479.7 L626.1,480.1 L628.9,480.7 L631.7,481.5 L634.5,483.0 L637.3,488.4 L640.1,484.4 L642.9,484.8 L645.7,485.4 L648.5,486.6 L651.3,487.3 L654.1,488.1 L656.9,488.8 L659.7,489.2 L662.5,490.3 L665.3,490.9 L668.1,492.0 L670.9,492.5 L673.7,492.4 L676.5,493.9 L679.3,493.9 L682.1,494.9 L684.9,495.1 L687.7,495.7 L690.5,496.4 L693.3,497.5 L696.1,498.3 L698.9,502.5 L701.7,500.2 L704.5,500.4 L707.3,500.9 L710.1,501.9 L713.0,502.7 L715.8,503.7 L718.6,504.3 L721.4,505.3 L724.2,506.4 L727.0,507.4 L729.8,507.7 L732.6,513.1 L735.4,509.8 L738.2,510.2 L741.0,510.8 L743.8,512.1 L746.6,512.6 L749.4,513.4 L752.2,514.1 L755.0,514.6 L757.8,515.3 L760.6,516.3 L763.4,516.7 L766.2,518.2 L766.2,519.2 Z" fill="url(#cg)"/>
<polyline points="96.4,511.4 99.2,510.1 102.0,506.3 104.8,505.7 107.6,504.4 110.4,506.6 113.2,498.5 116.0,498.1 118.8,494.9 121.6,493.1 124.4,492.9 127.2,489.9 130.0,491.0 132.8,488.2 135.6,485.3 138.4,482.2 141.2,479.9 144.0,478.5 146.8,475.6 149.6,472.9 152.5,470.5 155.3,468.8 158.1,467.8 160.9,465.3 163.7,460.5 166.5,459.6 169.3,458.1 172.1,457.8 174.9,452.6 177.7,449.8 180.5,446.2 183.3,447.0 186.1,441.2 188.9,441.0 191.7,437.1 194.5,437.2 197.3,434.8 200.1,431.1 202.9,429.1 205.7,424.6 208.5,424.3 211.3,420.8 214.1,417.5 216.9,424.6 219.7,412.8 222.5,409.6 225.3,407.9 228.1,405.9 230.9,402.6 233.7,409.0 236.5,399.0 239.3,393.7 242.1,394.1 244.9,391.0 247.7,401.0 250.5,387.9 253.3,383.7 256.1,382.8 258.9,381.7 261.7,382.1 264.6,378.8 267.4,381.6 270.2,380.8 273.0,394.0 275.8,381.5 278.6,388.0 281.4,380.6 284.2,388.0 287.0,382.1 289.8,381.8 292.6,379.0 295.4,381.6 298.2,381.1 301.0,392.0 303.8,382.3 306.6,380.6 309.4,383.3 312.2,408.7 315.0,382.3 317.8,382.4 320.6,380.3 323.4,379.3 326.2,381.5 329.0,382.1 331.8,384.9 334.6,380.7 337.4,380.7 340.2,378.9 343.0,381.5 345.8,400.0 348.6,380.7 351.4,379.1 354.2,381.8 357.0,382.3 359.8,381.0 362.6,381.8 365.4,379.1 368.2,379.8 371.0,379.3 373.8,382.3 376.7,420.0 379.5,380.5 382.3,378.8 385.1,380.0 387.9,380.7 390.7,381.9 393.5,379.3 396.3,381.8 399.1,381.7 401.9,381.8 404.7,382.0 407.5,404.0 410.3,381.8 413.1,381.2 415.9,381.4 418.7,379.0 421.5,379.7 424.3,382.3 427.1,381.2 429.9,379.0 432.7,379.9 435.5,379.7 438.3,410.0 441.1,379.2 443.9,383.7 446.7,380.4 449.5,379.5 452.3,382.2 455.1,381.9 457.9,380.5 460.7,379.8 463.5,384.4 466.3,382.1 469.1,397.0 471.9,380.1 474.7,379.1 477.5,379.7 480.3,380.1 483.1,381.0 485.9,383.9 488.8,381.1 491.6,379.2 494.4,381.4 497.2,379.8 500.0,379.3 502.8,403.6 505.6,379.3 508.4,379.1 511.2,381.9 514.0,380.6 516.8,379.8 519.6,381.0 522.4,379.6 525.2,381.8 528.0,381.3 530.8,378.8 533.6,381.8 536.4,379.3 539.2,381.4 542.0,422.6 544.8,381.1 547.6,381.0 550.4,380.6 553.2,382.0 556.0,381.1 558.8,379.6 561.6,378.8 564.4,379.7 567.2,414.0 570.0,379.5 572.8,379.5 575.6,379.6 578.4,382.2 581.2,380.3 584.0,380.2 586.8,380.3 589.6,381.4 592.4,409.0 595.2,383.4 598.0,384.3 600.9,384.9 603.7,389.1 606.5,389.5 609.3,390.9 612.1,394.2 614.9,393.3 617.7,398.8 620.5,400.3 623.3,404.2 626.1,407.3 628.9,409.0 631.7,409.9 634.5,413.2 637.3,430.0 640.1,415.3 642.9,419.3 645.7,422.5 648.5,421.9 651.3,424.6 654.1,428.6 656.9,431.2 659.7,433.0 662.5,433.1 665.3,436.0 668.1,439.4 670.9,440.0 673.7,440.4 676.5,445.6 679.3,447.1 682.1,451.3 684.9,449.1 687.7,451.8 690.5,452.9 693.3,454.6 696.1,456.4 698.9,470.0 701.7,461.5 704.5,464.7 707.3,468.4 710.1,470.9 713.0,470.6 715.8,471.7 718.6,474.4 721.4,477.1 724.2,479.4 727.0,482.2 729.8,488.9 732.6,503.0 735.4,489.7 738.2,492.0 741.0,495.0 743.8,501.0 746.6,503.2 749.4,501.4 752.2,504.9 755.0,507.0 757.8,509.8 760.6,509.6 763.4,513.1 766.2,514.0" fill="none" stroke="#7eb26d" stroke-width="1.2"/>
<g fill="#7eb26d"><circle cx="96.4" cy="511.4" r="2.9"/><circle cx="99.2" cy="510.1" r="2.9"/><circle cx="102.0" cy="506.3" r="2.9"/><circle cx="104.8" cy="505.7" r="2.9"/><circle cx="107.6" cy="504.4" r="2.9"/><circle cx="110.4" cy="506.6" r="2.9"/><circle cx="113.2" cy="498.5" r="2.9"/><circle cx="116.0" cy="498.1" r="2.9"/><circle cx="118.8" cy="494.9" r="2.9"/><circle cx="121.6" cy="493.1" r="2.9"/><circle cx="124.4" cy="492.9" r="2.9"/><circle cx="127.2" cy="489.9" r="2.9"/><circle cx="130.0" cy="491.0" r="2.9"/><circle cx="132.8" cy="488.2" r="2.9"/><circle cx="135.6" cy="485.3" r="2.9"/><circle cx="138.4" cy="482.2" r="2.9"/><circle cx="141.2" cy="479.9" r="2.9"/><circle cx="144.0" cy="478.5" r="2.9"/><circle cx="146.8" cy="475.6" r="2.9"/><circle cx="149.6" cy="472.9" r="2.9"/><circle cx="152.5" cy="470.5" r="2.9"/><circle cx="155.3" cy="468.8" r="2.9"/><circle cx="158.1" cy="467.8" r="2.9"/><circle cx="160.9" cy="465.3" r="2.9"/><circle cx="163.7" cy="460.5" r="2.9"/><circle cx="166.5" cy="459.6" r="2.9"/><circle cx="169.3" cy="458.1" r="2.9"/><circle cx="172.1" cy="457.8" r="2.9"/><circle cx="174.9" cy="452.6" r="2.9"/><circle cx="177.7" cy="449.8" r="2.9"/><circle cx="180.5" cy="446.2" r="2.9"/><circle cx="183.3" cy="447.0" r="2.9"/><circle cx="186.1" cy="441.2" r="2.9"/><circle cx="188.9" cy="441.0" r="2.9"/><circle cx="191.7" cy="437.1" r="2.9"/><circle cx="194.5" cy="437.2" r="2.9"/><circle cx="197.3" cy="434.8" r="2.9"/><circle cx="200.1" cy="431.1" r="2.9"/><circle cx="202.9" cy="429.1" r="2.9"/><circle cx="205.7" cy="424.6" r="2.9"/><circle cx="208.5" cy="424.3" r="2.9"/><circle cx="211.3" cy="420.8" r="2.9"/><circle cx="214.1" cy="417.5" r="2.9"/><circle cx="216.9" cy="424.6" r="2.9"/><circle cx="219.7" cy="412.8" r="2.9"/><circle cx="222.5" cy="409.6" r="2.9"/><circle cx="225.3" cy="407.9" r="2.9"/><circle cx="228.1" cy="405.9" r="2.9"/><circle cx="230.9" cy="402.6" r="2.9"/><circle cx="233.7" cy="409.0" r="2.9"/><circle cx="236.5" cy="399.0" r="2.9"/><circle cx="239.3" cy="393.7" r="2.9"/><circle cx="242.1" cy="394.1" r="2.9"/><circle cx="244.9" cy="391.0" r="2.9"/><circle cx="247.7" cy="401.0" r="2.9"/><circle cx="250.5" cy="387.9" r="2.9"/><circle cx="253.3" cy="383.7" r="2.9"/><circle cx="256.1" cy="382.8" r="2.9"/><circle cx="258.9" cy="381.7" r="2.9"/><circle cx="261.7" cy="382.1" r="2.9"/><circle cx="264.6" cy="378.8" r="2.9"/><circle cx="267.4" cy="381.6" r="2.9"/><circle cx="270.2" cy="380.8" r="2.9"/><circle cx="273.0" cy="394.0" r="2.9"/><circle cx="275.8" cy="381.5" r="2.9"/><circle cx="278.6" cy="388.0" r="2.9"/><circle cx="281.4" cy="380.6" r="2.9"/><circle cx="284.2" cy="388.0" r="2.9"/><circle cx="287.0" cy="382.1" r="2.9"/><circle cx="289.8" cy="381.8" r="2.9"/><circle cx="292.6" cy="379.0" r="2.9"/><circle cx="295.4" cy="381.6" r="2.9"/><circle cx="298.2" cy="381.1" r="2.9"/><circle cx="301.0" cy="392.0" r="2.9"/><circle cx="303.8" cy="382.3" r="2.9"/><circle cx="306.6" cy="380.6" r="2.9"/><circle cx="309.4" cy="383.3" r="2.9"/><circle cx="312.2" cy="408.7" r="2.9"/><circle cx="315.0" cy="382.3" r="2.9"/><circle cx="317.8" cy="382.4" r="2.9"/><circle cx="320.6" cy="380.3" r="2.9"/><circle cx="323.4" cy="379.3" r="2.9"/><circle cx="326.2" cy="381.5" r="2.9"/><circle cx="329.0" cy="382.1" r="2.9"/><circle cx="331.8" cy="384.9" r="2.9"/><circle cx="334.6" cy="380.7" r="2.9"/><circle cx="337.4" cy="380.7" r="2.9"/><circle cx="340.2" cy="378.9" r="2.9"/><circle cx="343.0" cy="381.5" r="2.9"/><circle cx="345.8" cy="400.0" r="2.9"/><circle cx="348.6" cy="380.7" r="2.9"/><circle cx="351.4" cy="379.1" r="2.9"/><circle cx="354.2" cy="381.8" r="2.9"/><circle cx="357.0" cy="382.3" r="2.9"/><circle cx="359.8" cy="381.0" r="2.9"/><circle cx="362.6" cy="381.8" r="2.9"/><circle cx="365.4" cy="379.1" r="2.9"/><circle cx="368.2" cy="379.8" r="2.9"/><circle cx="371.0" cy="379.3" r="2.9"/><circle cx="373.8" cy="382.3" r="2.9"/><circle cx="376.7" cy="420.0" r="2.9"/><circle cx="379.5" cy="380.5" r="2.9"/><circle cx="382.3" cy="378.8" r="2.9"/><circle cx="385.1" cy="380.0" r="2.9"/><circle cx="387.9" cy="380.7" r="2.9"/><circle cx="390.7" cy="381.9" r="2.9"/><circle cx="393.5" cy="379.3" r="2.9"/><circle cx="396.3" cy="381.8" r="2.9"/><circle cx="399.1" cy="381.7" r="2.9"/><circle cx="401.9" cy="381.8" r="2.9"/><circle cx="404.7" cy="382.0" r="2.9"/><circle cx="407.5" cy="404.0" r="2.9"/><circle cx="410.3" cy="381.8" r="2.9"/><circle cx="413.1" cy="381.2" r="2.9"/><circle cx="415.9" cy="381.4" r="2.9"/><circle cx="418.7" cy="379.0" r="2.9"/><circle cx="421.5" cy="379.7" r="2.9"/><circle cx="424.3" cy="382.3" r="2.9"/><circle cx="427.1" cy="381.2" r="2.9"/><circle cx="429.9" cy="379.0" r="2.9"/><circle cx="432.7" cy="379.9" r="2.9"/><circle cx="435.5" cy="379.7" r="2.9"/><circle cx="438.3" cy="410.0" r="2.9"/><circle cx="441.1" cy="379.2" r="2.9"/><circle cx="443.9" cy="383.7" r="2.9"/><circle cx="446.7" cy="380.4" r="2.9"/><circle cx="449.5" cy="379.5" r="2.9"/><circle cx="452.3" cy="382.2" r="2.9"/><circle cx="455.1" cy="381.9" r="2.9"/><circle cx="457.9" cy="380.5" r="2.9"/><circle cx="460.7" cy="379.8" r="2.9"/><circle cx="463.5" cy="384.4" r="2.9"/><circle cx="466.3" cy="382.1" r="2.9"/><circle cx="469.1" cy="397.0" r="2.9"/><circle cx="471.9" cy="380.1" r="2.9"/><circle cx="474.7" cy="379.1" r="2.9"/><circle cx="477.5" cy="379.7" r="2.9"/><circle cx="480.3" cy="380.1" r="2.9"/><circle cx="483.1" cy="381.0" r="2.9"/><circle cx="485.9" cy="383.9" r="2.9"/><circle cx="488.8" cy="381.1" r="2.9"/><circle cx="491.6" cy="379.2" r="2.9"/><circle cx="494.4" cy="381.4" r="2.9"/><circle cx="497.2" cy="379.8" r="2.9"/><circle cx="500.0" cy="379.3" r="2.9"/><circle cx="502.8" cy="403.6" r="2.9"/><circle cx="505.6" cy="379.3" r="2.9"/><circle cx="508.4" cy="379.1" r="2.9"/><circle cx="511.2" cy="381.9" r="2.9"/><circle cx="514.0" cy="380.6" r="2.9"/><circle cx="516.8" cy="379.8" r="2.9"/><circle cx="519.6" cy="381.0" r="2.9"/><circle cx="522.4" cy="379.6" r="2.9"/><circle cx="525.2" cy="381.8" r="2.9"/><circle cx="528.0" cy="381.3" r="2.9"/><circle cx="530.8" cy="378.8" r="2.9"/><circle cx="533.6" cy="381.8" r="2.9"/><circle cx="536.4" cy="379.3" r="2.9"/><circle cx="539.2" cy="381.4" r="2.9"/><circle cx="542.0" cy="422.6" r="2.9"/><circle cx="544.8" cy="381.1" r="2.9"/><circle cx="547.6" cy="381.0" r="2.9"/><circle cx="550.4" cy="380.6" r="2.9"/><circle cx="553.2" cy="382.0" r="2.9"/><circle cx="556.0" cy="381.1" r="2.9"/><circle cx="558.8" cy="379.6" r="2.9"/><circle cx="561.6" cy="378.8" r="2.9"/><circle cx="564.4" cy="379.7" r="2.9"/><circle cx="567.2" cy="414.0" r="2.9"/><circle cx="570.0" cy="379.5" r="2.9"/><circle cx="572.8" cy="379.5" r="2.9"/><circle cx="575.6" cy="379.6" r="2.9"/><circle cx="578.4" cy="382.2" r="2.9"/><circle cx="581.2" cy="380.3" r="2.9"/><circle cx="584.0" cy="380.2" r="2.9"/><circle cx="586.8" cy="380.3" r="2.9"/><circle cx="589.6" cy="381.4" r="2.9"/><circle cx="592.4" cy="409.0" r="2.9"/><circle cx="595.2" cy="383.4" r="2.9"/><circle cx="598.0" cy="384.3" r="2.9"/><circle cx="600.9" cy="384.9" r="2.9"/><circle cx="603.7" cy="389.1" r="2.9"/><circle cx="606.5" cy="389.5" r="2.9"/><circle cx="609.3" cy="390.9" r="2.9"/><circle cx="612.1" cy="394.2" r="2.9"/><circle cx="614.9" cy="393.3" r="2.9"/><circle cx="617.7" cy="398.8" r="2.9"/><circle cx="620.5" cy="400.3" r="2.9"/><circle cx="623.3" cy="404.2" r="2.9"/><circle cx="626.1" cy="407.3" r="2.9"/><circle cx="628.9" cy="409.0" r="2.9"/><circle cx="631.7" cy="409.9" r="2.9"/><circle cx="634.5" cy="413.2" r="2.9"/><circle cx="637.3" cy="430.0" r="2.9"/><circle cx="640.1" cy="415.3" r="2.9"/><circle cx="642.9" cy="419.3" r="2.9"/><circle cx="645.7" cy="422.5" r="2.9"/><circle cx="648.5" cy="421.9" r="2.9"/><circle cx="651.3" cy="424.6" r="2.9"/><circle cx="654.1" cy="428.6" r="2.9"/><circle cx="656.9" cy="431.2" r="2.9"/><circle cx="659.7" cy="433.0" r="2.9"/><circle cx="662.5" cy="433.1" r="2.9"/><circle cx="665.3" cy="436.0" r="2.9"/><circle cx="668.1" cy="439.4" r="2.9"/><circle cx="670.9" cy="440.0" r="2.9"/><circle cx="673.7" cy="440.4" r="2.9"/><circle cx="676.5" cy="445.6" r="2.9"/><circle cx="679.3" cy="447.1" r="2.9"/><circle cx="682.1" cy="451.3" r="2.9"/><circle cx="684.9" cy="449.1" r="2.9"/><circle cx="687.7" cy="451.8" r="2.9"/><circle cx="690.5" cy="452.9" r="2.9"/><circle cx="693.3" cy="454.6" r="2.9"/><circle cx="696.1" cy="456.4" r="2.9"/><circle cx="698.9" cy="470.0" r="2.9"/><circle cx="701.7" cy="461.5" r="2.9"/><circle cx="704.5" cy="464.7" r="2.9"/><circle cx="707.3" cy="468.4" r="2.9"/><circle cx="710.1" cy="470.9" r="2.9"/><circle cx="713.0" cy="470.6" r="2.9"/><circle cx="715.8" cy="471.7" r="2.9"/><circle cx="718.6" cy="474.4" r="2.9"/><circle cx="721.4" cy="477.1" r="2.9"/><circle cx="724.2" cy="479.4" r="2.9"/><circle cx="727.0" cy="482.2" r="2.9"/><circle cx="729.8" cy="488.9" r="2.9"/><circle cx="732.6" cy="503.0" r="2.9"/><circle cx="735.4" cy="489.7" r="2.9"/><circle cx="738.2" cy="492.0" r="2.9"/><circle cx="741.0" cy="495.0" r="2.9"/><circle cx="743.8" cy="501.0" r="2.9"/><circle cx="746.6" cy="503.2" r="2.9"/><circle cx="749.4" cy="501.4" r="2.9"/><circle cx="752.2" cy="504.9" r="2.9"/><circle cx="755.0" cy="507.0" r="2.9"/><circle cx="757.8" cy="509.8" r="2.9"/><circle cx="760.6" cy="509.6" r="2.9"/><circle cx="763.4" cy="513.1" r="2.9"/><circle cx="766.2" cy="514.0" r="2.9"/></g>
<polyline points="96.4,516.8 99.2,516.3 102.0,515.0 104.8,514.3 107.6,513.6 110.4,512.5 113.2,511.6 116.0,511.1 118.8,510.1 121.6,509.1 124.4,508.7 127.2,507.8 130.0,507.1 132.8,506.9 135.6,506.3 138.4,506.0 141.2,505.1 144.0,504.1 146.8,503.6 149.6,502.7 152.5,502.0 155.3,502.1 158.1,501.0 160.9,500.2 163.7,500.0 166.5,499.4 169.3,498.8 172.1,498.4 174.9,497.1 177.7,496.5 180.5,495.8 183.3,495.2 186.1,494.6 188.9,494.3 191.7,494.0 194.5,492.7 197.3,492.8 200.1,491.5 202.9,491.0 205.7,490.9 208.5,489.7 211.3,488.8 214.1,489.1 216.9,491.3 219.7,486.4 222.5,486.0 225.3,484.3 228.1,484.0 230.9,482.6 233.7,484.9 236.5,480.4 239.3,479.4 242.1,478.6 244.9,478.1 247.7,480.8 250.5,475.1 253.3,473.9 256.1,472.9 258.9,473.4 261.7,473.0 264.6,472.5 267.4,473.2 270.2,473.1 273.0,477.6 275.8,473.3 278.6,475.7 281.4,473.0 284.2,476.1 287.0,473.4 289.8,472.9 292.6,473.2 295.4,473.2 298.2,473.5 301.0,477.1 303.8,472.9 306.6,472.8 309.4,472.5 312.2,482.7 315.0,472.6 317.8,472.6 320.6,472.8 323.4,473.2 326.2,472.6 329.0,472.6 331.8,472.8 334.6,472.6 337.4,472.7 340.2,472.8 343.0,472.7 345.8,480.2 348.6,473.4 351.4,473.0 354.2,473.2 357.0,473.2 359.8,472.6 362.6,472.7 365.4,473.2 368.2,473.0 371.0,473.5 373.8,473.5 376.7,487.1 379.5,473.0 382.3,472.9 385.1,473.1 387.9,473.2 390.7,473.5 393.5,472.5 396.3,473.2 399.1,473.0 401.9,473.1 404.7,472.7 407.5,481.0 410.3,473.1 413.1,473.3 415.9,473.2 418.7,472.6 421.5,473.2 424.3,473.0 427.1,473.1 429.9,473.2 432.7,472.6 435.5,473.2 438.3,483.6 441.1,473.5 443.9,473.5 446.7,473.4 449.5,473.0 452.3,473.0 455.1,473.4 457.9,473.0 460.7,472.8 463.5,472.6 466.3,472.8 469.1,479.0 471.9,472.5 474.7,473.4 477.5,472.7 480.3,473.3 483.1,473.0 485.9,473.3 488.8,473.4 491.6,472.8 494.4,473.2 497.2,472.7 500.0,473.0 502.8,481.2 505.6,472.8 508.4,473.1 511.2,472.9 514.0,472.6 516.8,473.0 519.6,472.8 522.4,473.5 525.2,472.5 528.0,473.1 530.8,473.3 533.6,472.6 536.4,473.4 539.2,473.0 542.0,488.6 544.8,472.8 547.6,472.6 550.4,472.7 553.2,473.5 556.0,472.7 558.8,472.8 561.6,472.9 564.4,472.7 567.2,485.2 570.0,473.0 572.8,473.3 575.6,472.8 578.4,472.7 581.2,472.6 584.0,472.6 586.8,473.4 589.6,472.8 592.4,482.8 595.2,473.6 598.0,474.8 600.9,474.8 603.7,475.1 606.5,475.8 609.3,476.6 612.1,476.8 614.9,478.1 617.7,479.2 620.5,479.4 623.3,480.6 626.1,481.8 628.9,482.1 631.7,483.3 634.5,484.0 637.3,490.5 640.1,485.1 642.9,486.6 645.7,486.5 648.5,487.6 651.3,488.6 654.1,488.8 656.9,489.8 659.7,490.4 662.5,491.2 665.3,491.8 668.1,492.3 670.9,493.8 673.7,493.7 676.5,494.5 679.3,495.6 682.1,495.7 684.9,496.3 687.7,496.7 690.5,497.8 693.3,498.2 696.1,499.6 698.9,503.7 701.7,500.7 704.5,502.0 707.3,502.6 710.1,503.5 713.0,503.6 715.8,505.2 718.6,505.6 721.4,506.9 724.2,507.7 727.0,508.6 729.8,509.4 732.6,515.4 735.4,511.0 738.2,511.5 741.0,512.5 743.8,512.6 746.6,513.9 749.4,514.5 752.2,514.8 755.0,516.3 757.8,516.8 760.6,517.2 763.4,518.5 766.2,519.1" fill="none" stroke="#eab839" stroke-width="1"/>
<g fill="#eab839"><circle cx="96.4" cy="516.8" r="2.4"/><circle cx="99.2" cy="516.3" r="2.4"/><circle cx="102.0" cy="515.0" r="2.4"/><circle cx="104.8" cy="514.3" r="2.4"/><circle cx="107.6" cy="513.6" r="2.4"/><circle cx="110.4" cy="512.5" r="2.4"/><circle cx="113.2" cy="511.6" r="2.4"/><circle cx="116.0" cy="511.1" r="2.4"/><circle cx="118.8" cy="510.1" r="2.4"/><circle cx="121.6" cy="509.1" r="2.4"/><circle cx="124.4" cy="508.7" r="2.4"/><circle cx="127.2" cy="507.8" r="2.4"/><circle cx="130.0" cy="507.1" r="2.4"/><circle cx="132.8" cy="506.9" r="2.4"/><circle cx="135.6" cy="506.3" r="2.4"/><circle cx="138.4" cy="506.0" r="2.4"/><circle cx="141.2" cy="505.1" r="2.4"/><circle cx="144.0" cy="504.1" r="2.4"/><circle cx="146.8" cy="503.6" r="2.4"/><circle cx="149.6" cy="502.7" r="2.4"/><circle cx="152.5" cy="502.0" r="2.4"/><circle cx="155.3" cy="502.1" r="2.4"/><circle cx="158.1" cy="501.0" r="2.4"/><circle cx="160.9" cy="500.2" r="2.4"/><circle cx="163.7" cy="500.0" r="2.4"/><circle cx="166.5" cy="499.4" r="2.4"/><circle cx="169.3" cy="498.8" r="2.4"/><circle cx="172.1" cy="498.4" r="2.4"/><circle cx="174.9" cy="497.1" r="2.4"/><circle cx="177.7" cy="496.5" r="2.4"/><circle cx="180.5" cy="495.8" r="2.4"/><circle cx="183.3" cy="495.2" r="2.4"/><circle cx="186.1" cy="494.6" r="2.4"/><circle cx="188.9" cy="494.3" r="2.4"/><circle cx="191.7" cy="494.0" r="2.4"/><circle cx="194.5" cy="492.7" r="2.4"/><circle cx="197.3" cy="492.8" r="2.4"/><circle cx="200.1" cy="491.5" r="2.4"/><circle cx="202.9" cy="491.0" r="2.4"/><circle cx="205.7" cy="490.9" r="2.4"/><circle cx="208.5" cy="489.7" r="2.4"/><circle cx="211.3" cy="488.8" r="2.4"/><circle cx="214.1" cy="489.1" r="2.4"/><circle cx="216.9" cy="491.3" r="2.4"/><circle cx="219.7" cy="486.4" r="2.4"/><circle cx="222.5" cy="486.0" r="2.4"/><circle cx="225.3" cy="484.3" r="2.4"/><circle cx="228.1" cy="484.0" r="2.4"/><circle cx="230.9" cy="482.6" r="2.4"/><circle cx="233.7" cy="484.9" r="2.4"/><circle cx="236.5" cy="480.4" r="2.4"/><circle cx="239.3" cy="479.4" r="2.4"/><circle cx="242.1" cy="478.6" r="2.4"/><circle cx="244.9" cy="478.1" r="2.4"/><circle cx="247.7" cy="480.8" r="2.4"/><circle cx="250.5" cy="475.1" r="2.4"/><circle cx="253.3" cy="473.9" r="2.4"/><circle cx="256.1" cy="472.9" r="2.4"/><circle cx="258.9" cy="473.4" r="2.4"/><circle cx="261.7" cy="473.0" r="2.4"/><circle cx="264.6" cy="472.5" r="2.4"/><circle cx="267.4" cy="473.2" r="2.4"/><circle cx="270.2" cy="473.1" r="2.4"/><circle cx="273.0" cy="477.6" r="2.4"/><circle cx="275.8" cy="473.3" r="2.4"/><circle cx="278.6" cy="475.7" r="2.4"/><circle cx="281.4" cy="473.0" r="2.4"/><circle cx="284.2" cy="476.1" r="2.4"/><circle cx="287.0" cy="473.4" r="2.4"/><circle cx="289.8" cy="472.9" r="2.4"/><circle cx="292.6" cy="473.2" r="2.4"/><circle cx="295.4" cy="473.2" r="2.4"/><circle cx="298.2" cy="473.5" r="2.4"/><circle cx="301.0" cy="477.1" r="2.4"/><circle cx="303.8" cy="472.9" r="2.4"/><circle cx="306.6" cy="472.8" r="2.4"/><circle cx="309.4" cy="472.5" r="2.4"/><circle cx="312.2" cy="482.7" r="2.4"/><circle cx="315.0" cy="472.6" r="2.4"/><circle cx="317.8" cy="472.6" r="2.4"/><circle cx="320.6" cy="472.8" r="2.4"/><circle cx="323.4" cy="473.2" r="2.4"/><circle cx="326.2" cy="472.6" r="2.4"/><circle cx="329.0" cy="472.6" r="2.4"/><circle cx="331.8" cy="472.8" r="2.4"/><circle cx="334.6" cy="472.6" r="2.4"/><circle cx="337.4" cy="472.7" r="2.4"/><circle cx="340.2" cy="472.8" r="2.4"/><circle cx="343.0" cy="472.7" r="2.4"/><circle cx="345.8" cy="480.2" r="2.4"/><circle cx="348.6" cy="473.4" r="2.4"/><circle cx="351.4" cy="473.0" r="2.4"/><circle cx="354.2" cy="473.2" r="2.4"/><circle cx="357.0" cy="473.2" r="2.4"/><circle cx="359.8" cy="472.6" r="2.4"/><circle cx="362.6" cy="472.7" r="2.4"/><circle cx="365.4" cy="473.2" r="2.4"/><circle cx="368.2" cy="473.0" r="2.4"/><circle cx="371.0" cy="473.5" r="2.4"/><circle cx="373.8" cy="473.5" r="2.4"/><circle cx="376.7" cy="487.1" r="2.4"/><circle cx="379.5" cy="473.0" r="2.4"/><circle cx="382.3" cy="472.9" r="2.4"/><circle cx="385.1" cy="473.1" r="2.4"/><circle cx="387.9" cy="473.2" r="2.4"/><circle cx="390.7" cy="473.5" r="2.4"/><circle cx="393.5" cy="472.5" r="2.4"/><circle cx="396.3" cy="473.2" r="2.4"/><circle cx="399.1" cy="473.0" r="2.4"/><circle cx="401.9" cy="473.1" r="2.4"/><circle cx="404.7" cy="472.7" r="2.4"/><circle cx="407.5" cy="481.0" r="2.4"/><circle cx="410.3" cy="473.1" r="2.4"/><circle cx="413.1" cy="473.3" r="2.4"/><circle cx="415.9" cy="473.2" r="2.4"/><circle cx="418.7" cy="472.6" r="2.4"/><circle cx="421.5" cy="473.2" r="2.4"/><circle cx="424.3" cy="473.0" r="2.4"/><circle cx="427.1" cy="473.1" r="2.4"/><circle cx="429.9" cy="473.2" r="2.4"/><circle cx="432.7" cy="472.6" r="2.4"/><circle cx="435.5" cy="473.2" r="2.4"/><circle cx="438.3" cy="483.6" r="2.4"/><circle cx="441.1" cy="473.5" r="2.4"/><circle cx="443.9" cy="473.5" r="2.4"/><circle cx="446.7" cy="473.4" r="2.4"/><circle cx="449.5" cy="473.0" r="2.4"/><circle cx="452.3" cy="473.0" r="2.4"/><circle cx="455.1" cy="473.4" r="2.4"/><circle cx="457.9" cy="473.0" r="2.4"/><circle cx="460.7" cy="472.8" r="2.4"/><circle cx="463.5" cy="472.6" r="2.4"/><circle cx="466.3" cy="472.8" r="2.4"/><circle cx="469.1" cy="479.0" r="2.4"/><circle cx="471.9" cy="472.5" r="2.4"/><circle cx="474.7" cy="473.4" r="2.4"/><circle cx="477.5" cy="472.7" r="2.4"/><circle cx="480.3" cy="473.3" r="2.4"/><circle cx="483.1" cy="473.0" r="2.4"/><circle cx="485.9" cy="473.3" r="2.4"/><circle cx="488.8" cy="473.4" r="2.4"/><circle cx="491.6" cy="472.8" r="2.4"/><circle cx="494.4" cy="473.2" r="2.4"/><circle cx="497.2" cy="472.7" r="2.4"/><circle cx="500.0" cy="473.0" r="2.4"/><circle cx="502.8" cy="481.2" r="2.4"/><circle cx="505.6" cy="472.8" r="2.4"/><circle cx="508.4" cy="473.1" r="2.4"/><circle cx="511.2" cy="472.9" r="2.4"/><circle cx="514.0" cy="472.6" r="2.4"/><circle cx="516.8" cy="473.0" r="2.4"/><circle cx="519.6" cy="472.8" r="2.4"/><circle cx="522.4" cy="473.5" r="2.4"/><circle cx="525.2" cy="472.5" r="2.4"/><circle cx="528.0" cy="473.1" r="2.4"/><circle cx="530.8" cy="473.3" r="2.4"/><circle cx="533.6" cy="472.6" r="2.4"/><circle cx="536.4" cy="473.4" r="2.4"/><circle cx="539.2" cy="473.0" r="2.4"/><circle cx="542.0" cy="488.6" r="2.4"/><circle cx="544.8" cy="472.8" r="2.4"/><circle cx="547.6" cy="472.6" r="2.4"/><circle cx="550.4" cy="472.7" r="2.4"/><circle cx="553.2" cy="473.5" r="2.4"/><circle cx="556.0" cy="472.7" r="2.4"/><circle cx="558.8" cy="472.8" r="2.4"/><circle cx="561.6" cy="472.9" r="2.4"/><circle cx="564.4" cy="472.7" r="2.4"/><circle cx="567.2" cy="485.2" r="2.4"/><circle cx="570.0" cy="473.0" r="2.4"/><circle cx="572.8" cy="473.3" r="2.4"/><circle cx="575.6" cy="472.8" r="2.4"/><circle cx="578.4" cy="472.7" r="2.4"/><circle cx="581.2" cy="472.6" r="2.4"/><circle cx="584.0" cy="472.6" r="2.4"/><circle cx="586.8" cy="473.4" r="2.4"/><circle cx="589.6" cy="472.8" r="2.4"/><circle cx="592.4" cy="482.8" r="2.4"/><circle cx="595.2" cy="473.6" r="2.4"/><circle cx="598.0" cy="474.8" r="2.4"/><circle cx="600.9" cy="474.8" r="2.4"/><circle cx="603.7" cy="475.1" r="2.4"/><circle cx="606.5" cy="475.8" r="2.4"/><circle cx="609.3" cy="476.6" r="2.4"/><circle cx="612.1" cy="476.8" r="2.4"/><circle cx="614.9" cy="478.1" r="2.4"/><circle cx="617.7" cy="479.2" r="2.4"/><circle cx="620.5" cy="479.4" r="2.4"/><circle cx="623.3" cy="480.6" r="2.4"/><circle cx="626.1" cy="481.8" r="2.4"/><circle cx="628.9" cy="482.1" r="2.4"/><circle cx="631.7" cy="483.3" r="2.4"/><circle cx="634.5" cy="484.0" r="2.4"/><circle cx="637.3" cy="490.5" r="2.4"/><circle cx="640.1" cy="485.1" r="2.4"/><circle cx="642.9" cy="486.6" r="2.4"/><circle cx="645.7" cy="486.5" r="2.4"/><circle cx="648.5" cy="487.6" r="2.4"/><circle cx="651.3" cy="488.6" r="2.4"/><circle cx="654.1" cy="488.8" r="2.4"/><circle cx="656.9" cy="489.8" r="2.4"/><circle cx="659.7" cy="490.4" r="2.4"/><circle cx="662.5" cy="491.2" r="2.4"/><circle cx="665.3" cy="491.8" r="2.4"/><circle cx="668.1" cy="492.3" r="2.4"/><circle cx="670.9" cy="493.8" r="2.4"/><circle cx="673.7" cy="493.7" r="2.4"/><circle cx="676.5" cy="494.5" r="2.4"/><circle cx="679.3" cy="495.6" r="2.4"/><circle cx="682.1" cy="495.7" r="2.4"/><circle cx="684.9" cy="496.3" r="2.4"/><circle cx="687.7" cy="496.7" r="2.4"/><circle cx="690.5" cy="497.8" r="2.4"/><circle cx="693.3" cy="498.2" r="2.4"/><circle cx="696.1" cy="499.6" r="2.4"/><circle cx="698.9" cy="503.7" r="2.4"/><circle cx="701.7" cy="500.7" r="2.4"/><circle cx="704.5" cy="502.0" r="2.4"/><circle cx="707.3" cy="502.6" r="2.4"/><circle cx="710.1" cy="503.5" r="2.4"/><circle cx="713.0" cy="503.6" r="2.4"/><circle cx="715.8" cy="505.2" r="2.4"/><circle cx="718.6" cy="505.6" r="2.4"/><circle cx="721.4" cy="506.9" r="2.4"/><circle cx="724.2" cy="507.7" r="2.4"/><circle cx="727.0" cy="508.6" r="2.4"/><circle cx="729.8" cy="509.4" r="2.4"/><circle cx="732.6" cy="515.4" r="2.4"/><circle cx="735.4" cy="511.0" r="2.4"/><circle cx="738.2" cy="511.5" r="2.4"/><circle cx="741.0" cy="512.5" r="2.4"/><circle cx="743.8" cy="512.6" r="2.4"/><circle cx="746.6" cy="513.9" r="2.4"/><circle cx="749.4" cy="514.5" r="2.4"/><circle cx="752.2" cy="514.8" r="2.4"/><circle cx="755.0" cy="516.3" r="2.4"/><circle cx="757.8" cy="516.8" r="2.4"/><circle cx="760.6" cy="517.2" r="2.4"/><circle cx="763.4" cy="518.5" r="2.4"/><circle cx="766.2" cy="519.1" r="2.4"/></g>
<polyline points="96.4,516.2 99.2,514.7 102.0,513.8 104.8,513.0 107.6,512.6 110.4,511.4 113.2,511.1 116.0,509.7 118.8,509.2 121.6,508.1 124.4,507.2 127.2,507.1 130.0,506.5 132.8,505.9 135.6,505.2 138.4,504.7 141.2,503.3 144.0,503.4 146.8,502.0 149.6,502.1 152.5,501.6 155.3,501.0 158.1,499.9 160.9,499.0 163.7,498.7 166.5,498.0 169.3,497.5 172.1,497.2 174.9,496.2 177.7,495.3 180.5,494.7 183.3,494.5 186.1,493.6 188.9,493.1 191.7,492.3 194.5,491.9 197.3,491.7 200.1,490.5 202.9,490.3 205.7,489.8 208.5,489.0 211.3,487.6 214.1,487.7 216.9,489.9 219.7,485.2 222.5,484.9 225.3,483.8 228.1,482.8 230.9,481.8 233.7,483.4 236.5,479.2 239.3,478.9 242.1,477.7 244.9,475.9 247.7,479.8 250.5,473.8 253.3,473.1 256.1,472.3 258.9,472.6 261.7,471.9 264.6,471.5 267.4,471.8 270.2,471.8 273.0,476.0 275.8,471.9 278.6,474.4 281.4,471.8 284.2,474.5 287.0,471.9 289.8,471.4 292.6,471.4 295.4,471.5 298.2,472.2 301.0,475.5 303.8,471.5 306.6,471.5 309.4,471.7 312.2,481.1 315.0,472.3 317.8,471.6 320.6,472.1 323.4,471.9 326.2,471.7 329.0,472.1 331.8,471.8 334.6,471.6 337.4,471.4 340.2,471.6 343.0,471.8 345.8,477.7 348.6,471.8 351.4,471.7 354.2,471.8 357.0,472.1 359.8,471.6 362.6,471.6 365.4,472.2 368.2,471.6 371.0,471.6 373.8,471.5 376.7,484.3 379.5,471.5 382.3,471.4 385.1,471.5 387.9,472.0 390.7,471.6 393.5,471.9 396.3,471.9 399.1,471.8 401.9,472.1 404.7,472.0 407.5,479.4 410.3,471.9 413.1,471.3 415.9,471.8 418.7,471.6 421.5,471.5 424.3,471.7 427.1,471.9 429.9,471.6 432.7,471.3 435.5,472.0 438.3,481.5 441.1,471.5 443.9,472.1 446.7,471.5 449.5,471.4 452.3,472.1 455.1,471.5 457.9,471.8 460.7,471.6 463.5,472.1 466.3,472.2 469.1,477.7 471.9,471.6 474.7,471.6 477.5,471.8 480.3,472.2 483.1,472.2 485.9,471.8 488.8,471.3 491.6,471.6 494.4,471.6 497.2,471.7 500.0,472.2 502.8,479.9 505.6,471.4 508.4,471.6 511.2,471.7 514.0,471.6 516.8,471.4 519.6,471.5 522.4,471.7 525.2,471.3 528.0,471.8 530.8,472.2 533.6,471.5 536.4,472.0 539.2,472.1 542.0,485.4 544.8,471.4 547.6,471.4 550.4,471.7 553.2,471.8 556.0,471.8 558.8,472.0 561.6,472.0 564.4,472.2 567.2,482.8 570.0,472.0 572.8,471.6 575.6,472.1 578.4,471.5 581.2,472.2 584.0,472.3 586.8,472.2 589.6,472.2 592.4,481.4 595.2,472.4 598.0,473.0 600.9,473.4 603.7,474.3 606.5,475.3 609.3,475.0 612.1,475.6 614.9,476.4 617.7,477.3 620.5,478.6 623.3,479.7 626.1,480.1 628.9,480.7 631.7,481.5 634.5,483.0 637.3,488.4 640.1,484.4 642.9,484.8 645.7,485.4 648.5,486.6 651.3,487.3 654.1,488.1 656.9,488.8 659.7,489.2 662.5,490.3 665.3,490.9 668.1,492.0 670.9,492.5 673.7,492.4 676.5,493.9 679.3,493.9 682.1,494.9 684.9,495.1 687.7,495.7 690.5,496.4 693.3,497.5 696.1,498.3 698.9,502.5 701.7,500.2 704.5,500.4 707.3,500.9 710.1,501.9 713.0,502.7 715.8,503.7 718.6,504.3 721.4,505.3 724.2,506.4 727.0,507.4 729.8,507.7 732.6,513.1 735.4,509.8 738.2,510.2 741.0,510.8 743.8,512.1 746.6,512.6 749.4,513.4 752.2,514.1 755.0,514.6 757.8,515.3 760.6,516.3 763.4,516.7 766.2,518.2" fill="none" stroke="#6ed0e0" stroke-width="1.2"/>
<g fill="#6ed0e0"><circle cx="96.4" cy="516.2" r="2.6"/><circle cx="99.2" cy="514.7" r="2.6"/><circle cx="102.0" cy="513.8" r="2.6"/><circle cx="104.8" cy="513.0" r="2.6"/><circle cx="107.6" cy="512.6" r="2.6"/><circle cx="110.4" cy="511.4" r="2.6"/><circle cx="113.2" cy="511.1" r="2.6"/><circle cx="116.0" cy="509.7" r="2.6"/><circle cx="118.8" cy="509.2" r="2.6"/><circle cx="121.6" cy="508.1" r="2.6"/><circle cx="124.4" cy="507.2" r="2.6"/><circle cx="127.2" cy="507.1" r="2.6"/><circle cx="130.0" cy="506.5" r="2.6"/><circle cx="132.8" cy="505.9" r="2.6"/><circle cx="135.6" cy="505.2" r="2.6"/><circle cx="138.4" cy="504.7" r="2.6"/><circle cx="141.2" cy="503.3" r="2.6"/><circle cx="144.0" cy="503.4" r="2.6"/><circle cx="146.8" cy="502.0" r="2.6"/><circle cx="149.6" cy="502.1" r="2.6"/><circle cx="152.5" cy="501.6" r="2.6"/><circle cx="155.3" cy="501.0" r="2.6"/><circle cx="158.1" cy="499.9" r="2.6"/><circle cx="160.9" cy="499.0" r="2.6"/><circle cx="163.7" cy="498.7" r="2.6"/><circle cx="166.5" cy="498.0" r="2.6"/><circle cx="169.3" cy="497.5" r="2.6"/><circle cx="172.1" cy="497.2" r="2.6"/><circle cx="174.9" cy="496.2" r="2.6"/><circle cx="177.7" cy="495.3" r="2.6"/><circle cx="180.5" cy="494.7" r="2.6"/><circle cx="183.3" cy="494.5" r="2.6"/><circle cx="186.1" cy="493.6" r="2.6"/><circle cx="188.9" cy="493.1" r="2.6"/><circle cx="191.7" cy="492.3" r="2.6"/><circle cx="194.5" cy="491.9" r="2.6"/><circle cx="197.3" cy="491.7" r="2.6"/><circle cx="200.1" cy="490.5" r="2.6"/><circle cx="202.9" cy="490.3" r="2.6"/><circle cx="205.7" cy="489.8" r="2.6"/><circle cx="208.5" cy="489.0" r="2.6"/><circle cx="211.3" cy="487.6" r="2.6"/><circle cx="214.1" cy="487.7" r="2.6"/><circle cx="216.9" cy="489.9" r="2.6"/><circle cx="219.7" cy="485.2" r="2.6"/><circle cx="222.5" cy="484.9" r="2.6"/><circle cx="225.3" cy="483.8" r="2.6"/><circle cx="228.1" cy="482.8" r="2.6"/><circle cx="230.9" cy="481.8" r="2.6"/><circle cx="233.7" cy="483.4" r="2.6"/><circle cx="236.5" cy="479.2" r="2.6"/><circle cx="239.3" cy="478.9" r="2.6"/><circle cx="242.1" cy="477.7" r="2.6"/><circle cx="244.9" cy="475.9" r="2.6"/><circle cx="247.7" cy="479.8" r="2.6"/><circle cx="250.5" cy="473.8" r="2.6"/><circle cx="253.3" cy="473.1" r="2.6"/><circle cx="256.1" cy="472.3" r="2.6"/><circle cx="258.9" cy="472.6" r="2.6"/><circle cx="261.7" cy="471.9" r="2.6"/><circle cx="264.6" cy="471.5" r="2.6"/><circle cx="267.4" cy="471.8" r="2.6"/><circle cx="270.2" cy="471.8" r="2.6"/><circle cx="273.0" cy="476.0" r="2.6"/><circle cx="275.8" cy="471.9" r="2.6"/><circle cx="278.6" cy="474.4" r="2.6"/><circle cx="281.4" cy="471.8" r="2.6"/><circle cx="284.2" cy="474.5" r="2.6"/><circle cx="287.0" cy="471.9" r="2.6"/><circle cx="289.8" cy="471.4" r="2.6"/><circle cx="292.6" cy="471.4" r="2.6"/><circle cx="295.4" cy="471.5" r="2.6"/><circle cx="298.2" cy="472.2" r="2.6"/><circle cx="301.0" cy="475.5" r="2.6"/><circle cx="303.8" cy="471.5" r="2.6"/><circle cx="306.6" cy="471.5" r="2.6"/><circle cx="309.4" cy="471.7" r="2.6"/><circle cx="312.2" cy="481.1" r="2.6"/><circle cx="315.0" cy="472.3" r="2.6"/><circle cx="317.8" cy="471.6" r="2.6"/><circle cx="320.6" cy="472.1" r="2.6"/><circle cx="323.4" cy="471.9" r="2.6"/><circle cx="326.2" cy="471.7" r="2.6"/><circle cx="329.0" cy="472.1" r="2.6"/><circle cx="331.8" cy="471.8" r="2.6"/><circle cx="334.6" cy="471.6" r="2.6"/><circle cx="337.4" cy="471.4" r="2.6"/><circle cx="340.2" cy="471.6" r="2.6"/><circle cx="343.0" cy="471.8" r="2.6"/><circle cx="345.8" cy="477.7" r="2.6"/><circle cx="348.6" cy="471.8" r="2.6"/><circle cx="351.4" cy="471.7" r="2.6"/><circle cx="354.2" cy="471.8" r="2.6"/><circle cx="357.0" cy="472.1" r="2.6"/><circle cx="359.8" cy="471.6" r="2.6"/><circle cx="362.6" cy="471.6" r="2.6"/><circle cx="365.4" cy="472.2" r="2.6"/><circle cx="368.2" cy="471.6" r="2.6"/><circle cx="371.0" cy="471.6" r="2.6"/><circle cx="373.8" cy="471.5" r="2.6"/><circle cx="376.7" cy="484.3" r="2.6"/><circle cx="379.5" cy="471.5" r="2.6"/><circle cx="382.3" cy="471.4" r="2.6"/><circle cx="385.1" cy="471.5" r="2.6"/><circle cx="387.9" cy="472.0" r="2.6"/><circle cx="390.7" cy="471.6" r="2.6"/><circle cx="393.5" cy="471.9" r="2.6"/><circle cx="396.3" cy="471.9" r="2.6"/><circle cx="399.1" cy="471.8" r="2.6"/><circle cx="401.9" cy="472.1" r="2.6"/><circle cx="404.7" cy="472.0" r="2.6"/><circle cx="407.5" cy="479.4" r="2.6"/><circle cx="410.3" cy="471.9" r="2.6"/><circle cx="413.1" cy="471.3" r="2.6"/><circle cx="415.9" cy="471.8" r="2.6"/><circle cx="418.7" cy="471.6" r="2.6"/><circle cx="421.5" cy="471.5" r="2.6"/><circle cx="424.3" cy="471.7" r="2.6"/><circle cx="427.1" cy="471.9" r="2.6"/><circle cx="429.9" cy="471.6" r="2.6"/><circle cx="432.7" cy="471.3" r="2.6"/><circle cx="435.5" cy="472.0" r="2.6"/><circle cx="438.3" cy="481.5" r="2.6"/><circle cx="441.1" cy="471.5" r="2.6"/><circle cx="443.9" cy="472.1" r="2.6"/><circle cx="446.7" cy="471.5" r="2.6"/><circle cx="449.5" cy="471.4" r="2.6"/><circle cx="452.3" cy="472.1" r="2.6"/><circle cx="455.1" cy="471.5" r="2.6"/><circle cx="457.9" cy="471.8" r="2.6"/><circle cx="460.7" cy="471.6" r="2.6"/><circle cx="463.5" cy="472.1" r="2.6"/><circle cx="466.3" cy="472.2" r="2.6"/><circle cx="469.1" cy="477.7" r="2.6"/><circle cx="471.9" cy="471.6" r="2.6"/><circle cx="474.7" cy="471.6" r="2.6"/><circle cx="477.5" cy="471.8" r="2.6"/><circle cx="480.3" cy="472.2" r="2.6"/><circle cx="483.1" cy="472.2" r="2.6"/><circle cx="485.9" cy="471.8" r="2.6"/><circle cx="488.8" cy="471.3" r="2.6"/><circle cx="491.6" cy="471.6" r="2.6"/><circle cx="494.4" cy="471.6" r="2.6"/><circle cx="497.2" cy="471.7" r="2.6"/><circle cx="500.0" cy="472.2" r="2.6"/><circle cx="502.8" cy="479.9" r="2.6"/><circle cx="505.6" cy="471.4" r="2.6"/><circle cx="508.4" cy="471.6" r="2.6"/><circle cx="511.2" cy="471.7" r="2.6"/><circle cx="514.0" cy="471.6" r="2.6"/><circle cx="516.8" cy="471.4" r="2.6"/><circle cx="519.6" cy="471.5" r="2.6"/><circle cx="522.4" cy="471.7" r="2.6"/><circle cx="525.2" cy="471.3" r="2.6"/><circle cx="528.0" cy="471.8" r="2.6"/><circle cx="530.8" cy="472.2" r="2.6"/><circle cx="533.6" cy="471.5" r="2.6"/><circle cx="536.4" cy="472.0" r="2.6"/><circle cx="539.2" cy="472.1" r="2.6"/><circle cx="542.0" cy="485.4" r="2.6"/><circle cx="544.8" cy="471.4" r="2.6"/><circle cx="547.6" cy="471.4" r="2.6"/><circle cx="550.4" cy="471.7" r="2.6"/><circle cx="553.2" cy="471.8" r="2.6"/><circle cx="556.0" cy="471.8" r="2.6"/><circle cx="558.8" cy="472.0" r="2.6"/><circle cx="561.6" cy="472.0" r="2.6"/><circle cx="564.4" cy="472.2" r="2.6"/><circle cx="567.2" cy="482.8" r="2.6"/><circle cx="570.0" cy="472.0" r="2.6"/><circle cx="572.8" cy="471.6" r="2.6"/><circle cx="575.6" cy="472.1" r="2.6"/><circle cx="578.4" cy="471.5" r="2.6"/><circle cx="581.2" cy="472.2" r="2.6"/><circle cx="584.0" cy="472.3" r="2.6"/><circle cx="586.8" cy="472.2" r="2.6"/><circle cx="589.6" cy="472.2" r="2.6"/><circle cx="592.4" cy="481.4" r="2.6"/><circle cx="595.2" cy="472.4" r="2.6"/><circle cx="598.0" cy="473.0" r="2.6"/><circle cx="600.9" cy="473.4" r="2.6"/><circle cx="603.7" cy="474.3" r="2.6"/><circle cx="606.5" cy="475.3" r="2.6"/><circle cx="609.3" cy="475.0" r="2.6"/><circle cx="612.1" cy="475.6" r="2.6"/><circle cx="614.9" cy="476.4" r="2.6"/><circle cx="617.7" cy="477.3" r="2.6"/><circle cx="620.5" cy="478.6" r="2.6"/><circle cx="623.3" cy="479.7" r="2.6"/><circle cx="626.1" cy="480.1" r="2.6"/><circle cx="628.9" cy="480.7" r="2.6"/><circle cx="631.7" cy="481.5" r="2.6"/><circle cx="634.5" cy="483.0" r="2.6"/><circle cx="637.3" cy="488.4" r="2.6"/><circle cx="640.1" cy="484.4" r="2.6"/><circle cx="642.9" cy="484.8" r="2.6"/><circle cx="645.7" cy="485.4" r="2.6"/><circle cx="648.5" cy="486.6" r="2.6"/><circle cx="651.3" cy="487.3" r="2.6"/><circle cx="654.1" cy="488.1" r="2.6"/><circle cx="656.9" cy="488.8" r="2.6"/><circle cx="659.7" cy="489.2" r="2.6"/><circle cx="662.5" cy="490.3" r="2.6"/><circle cx="665.3" cy="490.9" r="2.6"/><circle cx="668.1" cy="492.0" r="2.6"/><circle cx="670.9" cy="492.5" r="2.6"/><circle cx="673.7" cy="492.4" r="2.6"/><circle cx="676.5" cy="493.9" r="2.6"/><circle cx="679.3" cy="493.9" r="2.6"/><circle cx="682.1" cy="494.9" r="2.6"/><circle cx="684.9" cy="495.1" r="2.6"/><circle cx="687.7" cy="495.7" r="2.6"/><circle cx="690.5" cy="496.4" r="2.6"/><circle cx="693.3" cy="497.5" r="2.6"/><circle cx="696.1" cy="498.3" r="2.6"/><circle cx="698.9" cy="502.5" r="2.6"/><circle cx="701.7" cy="500.2" r="2.6"/><circle cx="704.5" cy="500.4" r="2.6"/><circle cx="707.3" cy="500.9" r="2.6"/><circle cx="710.1" cy="501.9" r="2.6"/><circle cx="713.0" cy="502.7" r="2.6"/><circle cx="715.8" cy="503.7" r="2.6"/><circle cx="718.6" cy="504.3" r="2.6"/><circle cx="721.4" cy="505.3" r="2.6"/><circle cx="724.2" cy="506.4" r="2.6"/><circle cx="727.0" cy="507.4" r="2.6"/><circle cx="729.8" cy="507.7" r="2.6"/><circle cx="732.6" cy="513.1" r="2.6"/><circle cx="735.4" cy="509.8" r="2.6"/><circle cx="738.2" cy="510.2" r="2.6"/><circle cx="741.0" cy="510.8" r="2.6"/><circle cx="743.8" cy="512.1" r="2.6"/><circle cx="746.6" cy="512.6" r="2.6"/><circle cx="749.4" cy="513.4" r="2.6"/><circle cx="752.2" cy="514.1" r="2.6"/><circle cx="755.0" cy="514.6" r="2.6"/><circle cx="757.8" cy="515.3" r="2.6"/><circle cx="760.6" cy="516.3" r="2.6"/><circle cx="763.4" cy="516.7" r="2.6"/><circle cx="766.2" cy="518.2" r="2.6"/></g>
<polyline points="96.4,519.2 99.2,518.9 102.0,518.7 104.8,518.4 107.6,518.1 110.4,517.8 113.2,517.6 116.0,517.3 118.8,517.0 121.6,516.7 124.4,516.5 127.2,516.2 130.0,515.9 132.8,515.7 135.6,515.4 138.4,515.1 141.2,514.8 144.0,514.6 146.8,514.3 149.6,514.0 152.5,513.8 155.3,513.5 158.1,513.2 160.9,512.9 163.7,512.7 166.5,512.4 169.3,512.1 172.1,511.8 174.9,511.6 177.7,511.3 180.5,511.0 183.3,510.8 186.1,510.5 188.9,510.2 191.7,509.9 194.5,509.7 197.3,509.4 200.1,509.1 202.9,508.8 205.7,508.6 208.5,508.3 211.3,508.0 214.1,507.8 216.9,507.5 219.7,507.2 222.5,506.9 225.3,506.7 228.1,506.4 230.9,506.1 233.7,505.8 236.5,505.6 239.3,505.3 242.1,505.0 244.9,504.8 247.7,504.5 250.5,504.2 253.3,503.9 256.1,503.7 258.9,503.4 261.7,503.4 264.6,503.4 267.4,503.4 270.2,503.4 273.0,503.4 275.8,503.4 278.6,503.4 281.4,503.4 284.2,503.4 287.0,503.4 289.8,503.4 292.6,503.4 295.4,503.4 298.2,503.4 301.0,503.4 303.8,503.4 306.6,503.4 309.4,503.4 312.2,503.4 315.0,503.4 317.8,503.4 320.6,503.4 323.4,503.4 326.2,503.4 329.0,503.4 331.8,503.4 334.6,503.4 337.4,503.4 340.2,503.4 343.0,503.4 345.8,503.4 348.6,503.4 351.4,503.4 354.2,503.4 357.0,503.4 359.8,503.4 362.6,503.4 365.4,503.4 368.2,503.4 371.0,503.4 373.8,503.4 376.7,503.4 379.5,503.4 382.3,503.4 385.1,503.4 387.9,503.4 390.7,503.4 393.5,503.4 396.3,503.4 399.1,503.4 401.9,503.4 404.7,503.4 407.5,503.4 410.3,503.4 413.1,503.4 415.9,503.4 418.7,503.4 421.5,503.4 424.3,503.4 427.1,503.4 429.9,503.4 432.7,503.4 435.5,503.4 438.3,503.4 441.1,503.4 443.9,503.4 446.7,503.4 449.5,503.4 452.3,503.4 455.1,503.4 457.9,503.4 460.7,503.4 463.5,503.4 466.3,503.4 469.1,503.4 471.9,503.4 474.7,503.4 477.5,503.4 480.3,503.4 483.1,503.4 485.9,503.4 488.8,503.4 491.6,503.4 494.4,503.4 497.2,503.4 500.0,503.4 502.8,503.4 505.6,503.4 508.4,503.4 511.2,503.4 514.0,503.4 516.8,503.4 519.6,503.4 522.4,503.4 525.2,503.4 528.0,503.4 530.8,503.4 533.6,503.4 536.4,503.4 539.2,503.4 542.0,503.4 544.8,503.4 547.6,503.4 550.4,503.4 553.2,503.4 556.0,503.4 558.8,503.4 561.6,503.4 564.4,503.4 567.2,503.4 570.0,503.4 572.8,503.4 575.6,503.4 578.4,503.4 581.2,503.4 584.0,503.4 586.8,503.4 589.6,503.4 592.4,503.4 595.2,503.4 598.0,503.4 600.9,503.7 603.7,503.9 606.5,504.2 609.3,504.5 612.1,504.7 614.9,505.0 617.7,505.2 620.5,505.5 623.3,505.8 626.1,506.0 628.9,506.3 631.7,506.6 634.5,506.8 637.3,507.1 640.1,507.4 642.9,507.6 645.7,507.9 648.5,508.1 651.3,508.4 654.1,508.7 656.9,508.9 659.7,509.2 662.5,509.5 665.3,509.7 668.1,510.0 670.9,510.2 673.7,510.5 676.5,510.8 679.3,511.0 682.1,511.3 684.9,511.6 687.7,511.8 690.5,512.1 693.3,512.4 696.1,512.6 698.9,512.9 701.7,513.1 704.5,513.4 707.3,513.7 710.1,513.9 713.0,514.2 715.8,514.5 718.6,514.7 721.4,515.0 724.2,515.3 727.0,515.5 729.8,515.8 732.6,516.0 735.4,516.3 738.2,516.6 741.0,516.8 743.8,517.1 746.6,517.4 749.4,517.6 752.2,517.9 755.0,518.1 757.8,518.4 760.6,518.7 763.4,518.9 766.2,519.2" fill="none" stroke="#ef843c" stroke-width="1.5"/>
<g fill="#ef843c"><circle cx="96.4" cy="519.2" r="2.6"/><circle cx="99.2" cy="518.9" r="2.6"/><circle cx="102.0" cy="518.7" r="2.6"/><circle cx="104.8" cy="518.4" r="2.6"/><circle cx="107.6" cy="518.1" r="2.6"/><circle cx="110.4" cy="517.8" r="2.6"/><circle cx="113.2" cy="517.6" r="2.6"/><circle cx="116.0" cy="517.3" r="2.6"/><circle cx="118.8" cy="517.0" r="2.6"/><circle cx="121.6" cy="516.7" r="2.6"/><circle cx="124.4" cy="516.5" r="2.6"/><circle cx="127.2" cy="516.2" r="2.6"/><circle cx="130.0" cy="515.9" r="2.6"/><circle cx="132.8" cy="515.7" r="2.6"/><circle cx="135.6" cy="515.4" r="2.6"/><circle cx="138.4" cy="515.1" r="2.6"/><circle cx="141.2" cy="514.8" r="2.6"/><circle cx="144.0" cy="514.6" r="2.6"/><circle cx="146.8" cy="514.3" r="2.6"/><circle cx="149.6" cy="514.0" r="2.6"/><circle cx="152.5" cy="513.8" r="2.6"/><circle cx="155.3" cy="513.5" r="2.6"/><circle cx="158.1" cy="513.2" r="2.6"/><circle cx="160.9" cy="512.9" r="2.6"/><circle cx="163.7" cy="512.7" r="2.6"/><circle cx="166.5" cy="512.4" r="2.6"/><circle cx="169.3" cy="512.1" r="2.6"/><circle cx="172.1" cy="511.8" r="2.6"/><circle cx="174.9" cy="511.6" r="2.6"/><circle cx="177.7" cy="511.3" r="2.6"/><circle cx="180.5" cy="511.0" r="2.6"/><circle cx="183.3" cy="510.8" r="2.6"/><circle cx="186.1" cy="510.5" r="2.6"/><circle cx="188.9" cy="510.2" r="2.6"/><circle cx="191.7" cy="509.9" r="2.6"/><circle cx="194.5" cy="509.7" r="2.6"/><circle cx="197.3" cy="509.4" r="2.6"/><circle cx="200.1" cy="509.1" r="2.6"/><circle cx="202.9" cy="508.8" r="2.6"/><circle cx="205.7" cy="508.6" r="2.6"/><circle cx="208.5" cy="508.3" r="2.6"/><circle cx="211.3" cy="508.0" r="2.6"/><circle cx="214.1" cy="507.8" r="2.6"/><circle cx="216.9" cy="507.5" r="2.6"/><circle cx="219.7" cy="507.2" r="2.6"/><circle cx="222.5" cy="506.9" r="2.6"/><circle cx="225.3" cy="506.7" r="2.6"/><circle cx="228.1" cy="506.4" r="2.6"/><circle cx="230.9" cy="506.1" r="2.6"/><circle cx="233.7" cy="505.8" r="2.6"/><circle cx="236.5" cy="505.6" r="2.6"/><circle cx="239.3" cy="505.3" r="2.6"/><circle cx="242.1" cy="505.0" r="2.6"/><circle cx="244.9" cy="504.8" r="2.6"/><circle cx="247.7" cy="504.5" r="2.6"/><circle cx="250.5" cy="504.2" r="2.6"/><circle cx="253.3" cy="503.9" r="2.6"/><circle cx="256.1" cy="503.7" r="2.6"/><circle cx="258.9" cy="503.4" r="2.6"/><circle cx="261.7" cy="503.4" r="2.6"/><circle cx="264.6" cy="503.4" r="2.6"/><circle cx="267.4" cy="503.4" r="2.6"/><circle cx="270.2" cy="503.4" r="2.6"/><circle cx="273.0" cy="503.4" r="2.6"/><circle cx="275.8" cy="503.4" r="2.6"/><circle cx="278.6" cy="503.4" r="2.6"/><circle cx="281.4" cy="503.4" r="2.6"/><circle cx="284.2" cy="503.4" r="2.6"/><circle cx="287.0" cy="503.4" r="2.6"/><circle cx="289.8" cy="503.4" r="2.6"/><circle cx="292.6" cy="503.4" r="2.6"/><circle cx="295.4" cy="503.4" r="2.6"/><circle cx="298.2" cy="503.4" r="2.6"/><circle cx="301.0" cy="503.4" r="2.6"/><circle cx="303.8" cy="503.4" r="2.6"/><circle cx="306.6" cy="503.4" r="2.6"/><circle cx="309.4" cy="503.4" r="2.6"/><circle cx="312.2" cy="503.4" r="2.6"/><circle cx="315.0" cy="503.4" r="2.6"/><circle cx="317.8" cy="503.4" r="2.6"/><circle cx="320.6" cy="503.4" r="2.6"/><circle cx="323.4" cy="503.4" r="2.6"/><circle cx="326.2" cy="503.4" r="2.6"/><circle cx="329.0" cy="503.4" r="2.6"/><circle cx="331.8" cy="503.4" r="2.6"/><circle cx="334.6" cy="503.4" r="2.6"/><circle cx="337.4" cy="503.4" r="2.6"/><circle cx="340.2" cy="503.4" r="2.6"/><circle cx="343.0" cy="503.4" r="2.6"/><circle cx="345.8" cy="503.4" r="2.6"/><circle cx="348.6" cy="503.4" r="2.6"/><circle cx="351.4" cy="503.4" r="2.6"/><circle cx="354.2" cy="503.4" r="2.6"/><circle cx="357.0" cy="503.4" r="2.6"/><circle cx="359.8" cy="503.4" r="2.6"/><circle cx="362.6" cy="503.4" r="2.6"/><circle cx="365.4" cy="503.4" r="2.6"/><circle cx="368.2" cy="503.4" r="2.6"/><circle cx="371.0" cy="503.4" r="2.6"/><circle cx="373.8" cy="503.4" r="2.6"/><circle cx="376.7" cy="503.4" r="2.6"/><circle cx="379.5" cy="503.4" r="2.6"/><circle cx="382.3" cy="503.4" r="2.6"/><circle cx="385.1" cy="503.4" r="2.6"/><circle cx="387.9" cy="503.4" r="2.6"/><circle cx="390.7" cy="503.4" r="2.6"/><circle cx="393.5" cy="503.4" r="2.6"/><circle cx="396.3" cy="503.4" r="2.6"/><circle cx="399.1" cy="503.4" r="2.6"/><circle cx="401.9" cy="503.4" r="2.6"/><circle cx="404.7" cy="503.4" r="2.6"/><circle cx="407.5" cy="503.4" r="2.6"/><circle cx="410.3" cy="503.4" r="2.6"/><circle cx="413.1" cy="503.4" r="2.6"/><circle cx="415.9" cy="503.4" r="2.6"/><circle cx="418.7" cy="503.4" r="2.6"/><circle cx="421.5" cy="503.4" r="2.6"/><circle cx="424.3" cy="503.4" r="2.6"/><circle cx="427.1" cy="503.4" r="2.6"/><circle cx="429.9" cy="503.4" r="2.6"/><circle cx="432.7" cy="503.4" r="2.6"/><circle cx="435.5" cy="503.4" r="2.6"/><circle cx="438.3" cy="503.4" r="2.6"/><circle cx="441.1" cy="503.4" r="2.6"/><circle cx="443.9" cy="503.4" r="2.6"/><circle cx="446.7" cy="503.4" r="2.6"/><circle cx="449.5" cy="503.4" r="2.6"/><circle cx="452.3" cy="503.4" r="2.6"/><circle cx="455.1" cy="503.4" r="2.6"/><circle cx="457.9" cy="503.4" r="2.6"/><circle cx="460.7" cy="503.4" r="2.6"/><circle cx="463.5" cy="503.4" r="2.6"/><circle cx="466.3" cy="503.4" r="2.6"/><circle cx="469.1" cy="503.4" r="2.6"/><circle cx="471.9" cy="503.4" r="2.6"/><circle cx="474.7" cy="503.4" r="2.6"/><circle cx="477.5" cy="503.4" r="2.6"/><circle cx="480.3" cy="503.4" r="2.6"/><circle cx="483.1" cy="503.4" r="2.6"/><circle cx="485.9" cy="503.4" r="2.6"/><circle cx="488.8" cy="503.4" r="2.6"/><circle cx="491.6" cy="503.4" r="2.6"/><circle cx="494.4" cy="503.4" r="2.6"/><circle cx="497.2" cy="503.4" r="2.6"/><circle cx="500.0" cy="503.4" r="2.6"/><circle cx="502.8" cy="503.4" r="2.6"/><circle cx="505.6" cy="503.4" r="2.6"/><circle cx="508.4" cy="503.4" r="2.6"/><circle cx="511.2" cy="503.4" r="2.6"/><circle cx="514.0" cy="503.4" r="2.6"/><circle cx="516.8" cy="503.4" r="2.6"/><circle cx="519.6" cy="503.4" r="2.6"/><circle cx="522.4" cy="503.4" r="2.6"/><circle cx="525.2" cy="503.4" r="2.6"/><circle cx="528.0" cy="503.4" r="2.6"/><circle cx="530.8" cy="503.4" r="2.6"/><circle cx="533.6" cy="503.4" r="2.6"/><circle cx="536.4" cy="503.4" r="2.6"/><circle cx="539.2" cy="503.4" r="2.6"/><circle cx="542.0" cy="503.4" r="2.6"/><circle cx="544.8" cy="503.4" r="2.6"/><circle cx="547.6" cy="503.4" r="2.6"/><circle cx="550.4" cy="503.4" r="2.6"/><circle cx="553.2" cy="503.4" r="2.6"/><circle cx="556.0" cy="503.4" r="2.6"/><circle cx="558.8" cy="503.4" r="2.6"/><circle cx="561.6" cy="503.4" r="2.6"/><circle cx="564.4" cy="503.4" r="2.6"/><circle cx="567.2" cy="503.4" r="2.6"/><circle cx="570.0" cy="503.4" r="2.6"/><circle cx="572.8" cy="503.4" r="2.6"/><circle cx="575.6" cy="503.4" r="2.6"/><circle cx="578.4" cy="503.4" r="2.6"/><circle cx="581.2" cy="503.4" r="2.6"/><circle cx="584.0" cy="503.4" r="2.6"/><circle cx="586.8" cy="503.4" r="2.6"/><circle cx="589.6" cy="503.4" r="2.6"/><circle cx="592.4" cy="503.4" r="2.6"/><circle cx="595.2" cy="503.4" r="2.6"/><circle cx="598.0" cy="503.4" r="2.6"/><circle cx="600.9" cy="503.7" r="2.6"/><circle cx="603.7" cy="503.9" r="2.6"/><circle cx="606.5" cy="504.2" r="2.6"/><circle cx="609.3" cy="504.5" r="2.6"/><circle cx="612.1" cy="504.7" r="2.6"/><circle cx="614.9" cy="505.0" r="2.6"/><circle cx="617.7" cy="505.2" r="2.6"/><circle cx="620.5" cy="505.5" r="2.6"/><circle cx="623.3" cy="505.8" r="2.6"/><circle cx="626.1" cy="506.0" r="2.6"/><circle cx="628.9" cy="506.3" r="2.6"/><circle cx="631.7" cy="506.6" r="2.6"/><circle cx="634.5" cy="506.8" r="2.6"/><circle cx="637.3" cy="507.1" r="2.6"/><circle cx="640.1" cy="507.4" r="2.6"/><circle cx="642.9" cy="507.6" r="2.6"/><circle cx="645.7" cy="507.9" r="2.6"/><circle cx="648.5" cy="508.1" r="2.6"/><circle cx="651.3" cy="508.4" r="2.6"/><circle cx="654.1" cy="508.7" r="2.6"/><circle cx="656.9" cy="508.9" r="2.6"/><circle cx="659.7" cy="509.2" r="2.6"/><circle cx="662.5" cy="509.5" r="2.6"/><circle cx="665.3" cy="509.7" r="2.6"/><circle cx="668.1" cy="510.0" r="2.6"/><circle cx="670.9" cy="510.2" r="2.6"/><circle cx="673.7" cy="510.5" r="2.6"/><circle cx="676.5" cy="510.8" r="2.6"/><circle cx="679.3" cy="511.0" r="2.6"/><circle cx="682.1" cy="511.3" r="2.6"/><circle cx="684.9" cy="511.6" r="2.6"/><circle cx="687.7" cy="511.8" r="2.6"/><circle cx="690.5" cy="512.1" r="2.6"/><circle cx="693.3" cy="512.4" r="2.6"/><circle cx="696.1" cy="512.6" r="2.6"/><circle cx="698.9" cy="512.9" r="2.6"/><circle cx="701.7" cy="513.1" r="2.6"/><circle cx="704.5" cy="513.4" r="2.6"/><circle cx="707.3" cy="513.7" r="2.6"/><circle cx="710.1" cy="513.9" r="2.6"/><circle cx="713.0" cy="514.2" r="2.6"/><circle cx="715.8" cy="514.5" r="2.6"/><circle cx="718.6" cy="514.7" r="2.6"/><circle cx="721.4" cy="515.0" r="2.6"/><circle cx="724.2" cy="515.3" r="2.6"/><circle cx="727.0" cy="515.5" r="2.6"/><circle cx="729.8" cy="515.8" r="2.6"/><circle cx="732.6" cy="516.0" r="2.6"/><circle cx="735.4" cy="516.3" r="2.6"/><circle cx="738.2" cy="516.6" r="2.6"/><circle cx="741.0" cy="516.8" r="2.6"/><circle cx="743.8" cy="517.1" r="2.6"/><circle cx="746.6" cy="517.4" r="2.6"/><circle cx="749.4" cy="517.6" r="2.6"/><circle cx="752.2" cy="517.9" r="2.6"/><circle cx="755.0" cy="518.1" r="2.6"/><circle cx="757.8" cy="518.4" r="2.6"/><circle cx="760.6" cy="518.7" r="2.6"/><circle cx="763.4" cy="518.9" r="2.6"/><circle cx="766.2" cy="519.2" r="2.6"/></g>
<polyline points="96.4,473.7 98.4,474.4 100.4,476.5 102.4,473.8 104.4,474.0 106.4,474.5 108.4,472.1 110.4,474.1 112.4,474.8 114.4,475.8 116.4,471.6 118.4,472.8 120.4,471.5 122.4,475.9 124.4,475.2 126.4,471.3 128.4,476.9 130.4,476.8 132.4,474.9 134.3,474.7 136.3,471.9 138.3,471.1 140.3,474.2 142.3,469.3 144.3,470.3 146.3,470.5 148.3,468.1 150.3,472.1 152.3,471.6 154.3,475.3 156.3,471.7 158.3,472.6 160.3,470.9 162.3,472.2 164.3,469.9 166.3,467.8 168.3,474.6 170.3,474.3 172.3,472.4 174.3,470.8 176.3,466.6 178.3,465.4 180.3,465.7 182.3,463.2 184.3,469.8 186.3,465.9 188.3,470.0 190.3,465.1 192.3,470.5 194.3,469.1 196.3,460.3 198.3,462.1 200.3,468.8 202.3,464.1 204.3,468.9 206.3,449.2 208.3,454.1 210.2,441.3 212.2,440.6 214.2,451.5 216.2,455.8 218.2,440.5 220.2,472.2 222.2,452.2 224.2,447.5 226.2,452.1 228.2,456.2 230.2,466.9 232.2,457.9 234.2,457.1 236.2,462.4 238.2,446.5 240.2,426.8 242.2,445.0 244.2,447.5 246.2,467.2 248.2,429.3 250.2,430.0 252.2,464.2 254.2,444.6 256.2,475.0 258.2,462.1 260.2,449.7 262.2,444.3 264.2,448.3 266.2,451.7 268.2,466.9 270.2,456.9 272.2,474.6 274.2,465.6 276.2,428.5 278.2,461.2 280.2,474.8 282.2,484.4 284.2,453.0 286.1,443.0 288.1,475.3 290.1,428.6 292.1,433.4 294.1,446.6 296.1,426.0 298.1,456.5 300.1,480.6 302.1,465.9 304.1,442.4 306.1,453.6 308.1,446.6 310.1,456.9 312.1,451.4 314.1,485.7 316.1,460.0 318.1,445.6 320.1,442.5 322.1,481.8 324.1,472.3 326.1,454.5 328.1,429.5 330.1,473.1 332.1,461.2 334.1,482.3 336.1,436.1 338.1,476.9 340.1,465.4 342.1,477.8 344.1,437.1 346.1,458.2 348.1,457.1 350.1,444.1 352.1,467.8 354.1,482.2 356.1,461.1 358.1,453.5 360.0,426.2 362.0,425.4 364.0,454.5 366.0,460.2 368.0,458.0 370.0,475.6 372.0,449.8 374.0,447.3 376.0,465.5 378.0,453.5 380.0,476.6 382.0,447.2 384.0,463.0 386.0,484.3 388.0,457.2 390.0,445.5 392.0,420.0 394.0,482.0 396.0,475.9 398.0,453.7 400.0,447.6 402.0,458.3 404.0,450.2 406.0,438.7 408.0,443.9 410.0,464.7 412.0,460.4 414.0,450.0 416.0,425.3 418.0,453.8 420.0,463.6 422.0,445.7 424.0,458.4 426.0,458.4 428.0,463.0 430.0,481.6 432.0,454.4 434.0,442.3 435.9,460.6 437.9,449.1 439.9,460.1 441.9,430.0 443.9,430.5 445.9,437.7 447.9,466.2 449.9,426.8 451.9,458.3 453.9,477.3 455.9,464.9 457.9,424.0 459.9,458.9 461.9,460.8 463.9,434.0 465.9,428.0 467.9,485.7 469.9,479.5 471.9,429.5 473.9,484.0 475.9,444.2 477.9,456.3 479.9,431.8 481.9,463.0 483.9,462.8 485.9,450.7 487.9,427.0 489.9,455.4 491.9,436.8 493.9,466.6 495.9,466.7 497.9,447.8 499.9,449.5 501.9,433.9 503.9,463.9 505.9,450.1 507.9,464.0 509.9,474.9 511.8,485.6 513.8,456.9 515.8,455.9 517.8,457.7 519.8,467.2 521.8,452.4 523.8,432.9 525.8,460.0 527.8,456.0 529.8,466.9 531.8,475.8 533.8,445.3 535.8,463.2 537.8,478.7 539.8,447.0 541.8,466.1 543.8,462.3 545.8,447.0 547.8,459.9 549.8,451.2 551.8,444.7 553.8,426.7 555.8,448.5 557.8,455.8 559.8,451.8 561.8,455.8 563.8,447.3 565.8,422.0 567.8,464.1 569.8,464.3 571.8,461.3 573.8,437.6 575.8,450.2 577.8,475.1 579.8,484.4 581.8,448.2 583.8,428.6 585.7,463.6 587.7,462.5 589.7,452.5 591.7,442.5 593.7,459.7 595.7,485.6 597.7,455.1 599.7,428.0 601.7,446.9 603.7,444.8 605.7,456.3 607.7,456.8 609.7,446.8 611.7,463.8 613.7,485.0 615.7,443.6 617.7,478.5 619.7,429.6 621.7,455.4 623.7,370.4 625.7,460.2 627.7,474.5 629.7,461.2 631.7,447.1 633.7,455.3 635.7,465.2 637.7,434.9 639.7,480.8 641.7,457.6 643.7,467.5 645.7,428.6 647.7,482.4 649.7,436.4 651.7,465.3 653.7,481.7 655.7,435.7 657.7,460.8 659.7,450.9 661.6,442.3 663.6,458.6 665.6,448.0 667.6,481.3 669.6,459.2 671.6,455.9 673.6,468.0 675.6,460.2 677.6,438.7 679.6,458.0 681.6,428.6 683.6,443.3 685.6,451.8 687.6,448.5 689.6,479.7 691.6,467.1 693.6,467.9 695.6,463.0 697.6,457.5 699.6,425.6 701.6,474.2 703.6,446.4 705.6,457.9 707.6,440.4 709.6,456.8 711.6,447.8 713.6,450.1 715.6,451.8 717.6,448.0 719.6,447.0 721.6,454.1 723.6,452.8 725.6,448.2 727.6,456.4 729.6,449.2 731.6,444.6 733.6,449.2 735.6,445.9 737.5,448.4 739.5,459.6 741.5,453.4 743.5,463.0 745.5,460.7 747.5,448.5 749.5,427.4 751.5,465.5 753.5,450.2 755.5,465.6 757.5,457.4 759.5,458.7 761.5,468.0 763.5,455.3" fill="none" stroke="#9e3fcf" stroke-width="1"/>
<g fill="#9e3fcf"><circle cx="96.4" cy="473.7" r="2.8"/><circle cx="98.4" cy="474.4" r="2.8"/><circle cx="100.4" cy="476.5" r="2.8"/><circle cx="102.4" cy="473.8" r="2.8"/><circle cx="104.4" cy="474.0" r="2.8"/><circle cx="106.4" cy="474.5" r="2.8"/><circle cx="108.4" cy="472.1" r="2.8"/><circle cx="110.4" cy="474.1" r="2.8"/><circle cx="112.4" cy="474.8" r="2.8"/><circle cx="114.4" cy="475.8" r="2.8"/><circle cx="116.4" cy="471.6" r="2.8"/><circle cx="118.4" cy="472.8" r="2.8"/><circle cx="120.4" cy="471.5" r="2.8"/><circle cx="122.4" cy="475.9" r="2.8"/><circle cx="124.4" cy="475.2" r="2.8"/><circle cx="126.4" cy="471.3" r="2.8"/><circle cx="128.4" cy="476.9" r="2.8"/><circle cx="130.4" cy="476.8" r="2.8"/><circle cx="132.4" cy="474.9" r="2.8"/><circle cx="134.3" cy="474.7" r="2.8"/><circle cx="136.3" cy="471.9" r="2.8"/><circle cx="138.3" cy="471.1" r="2.8"/><circle cx="140.3" cy="474.2" r="2.8"/><circle cx="142.3" cy="469.3" r="2.8"/><circle cx="144.3" cy="470.3" r="2.8"/><circle cx="146.3" cy="470.5" r="2.8"/><circle cx="148.3" cy="468.1" r="2.8"/><circle cx="150.3" cy="472.1" r="2.8"/><circle cx="152.3" cy="471.6" r="2.8"/><circle cx="154.3" cy="475.3" r="2.8"/><circle cx="156.3" cy="471.7" r="2.8"/><circle cx="158.3" cy="472.6" r="2.8"/><circle cx="160.3" cy="470.9" r="2.8"/><circle cx="162.3" cy="472.2" r="2.8"/><circle cx="164.3" cy="469.9" r="2.8"/><circle cx="166.3" cy="467.8" r="2.8"/><circle cx="168.3" cy="474.6" r="2.8"/><circle cx="170.3" cy="474.3" r="2.8"/><circle cx="172.3" cy="472.4" r="2.8"/><circle cx="174.3" cy="470.8" r="2.8"/><circle cx="176.3" cy="466.6" r="2.8"/><circle cx="178.3" cy="465.4" r="2.8"/><circle cx="180.3" cy="465.7" r="2.8"/><circle cx="182.3" cy="463.2" r="2.8"/><circle cx="184.3" cy="469.8" r="2.8"/><circle cx="186.3" cy="465.9" r="2.8"/><circle cx="188.3" cy="470.0" r="2.8"/><circle cx="190.3" cy="465.1" r="2.8"/><circle cx="192.3" cy="470.5" r="2.8"/><circle cx="194.3" cy="469.1" r="2.8"/><circle cx="196.3" cy="460.3" r="2.8"/><circle cx="198.3" cy="462.1" r="2.8"/><circle cx="200.3" cy="468.8" r="2.8"/><circle cx="202.3" cy="464.1" r="2.8"/><circle cx="204.3" cy="468.9" r="2.8"/><circle cx="206.3" cy="449.2" r="2.8"/><circle cx="208.3" cy="454.1" r="2.8"/><circle cx="210.2" cy="441.3" r="2.8"/><circle cx="212.2" cy="440.6" r="2.8"/><circle cx="214.2" cy="451.5" r="2.8"/><circle cx="216.2" cy="455.8" r="2.8"/><circle cx="218.2" cy="440.5" r="2.8"/><circle cx="220.2" cy="472.2" r="2.8"/><circle cx="222.2" cy="452.2" r="2.8"/><circle cx="224.2" cy="447.5" r="2.8"/><circle cx="226.2" cy="452.1" r="2.8"/><circle cx="228.2" cy="456.2" r="2.8"/><circle cx="230.2" cy="466.9" r="2.8"/><circle cx="232.2" cy="457.9" r="2.8"/><circle cx="234.2" cy="457.1" r="2.8"/><circle cx="236.2" cy="462.4" r="2.8"/><circle cx="238.2" cy="446.5" r="2.8"/><circle cx="240.2" cy="426.8" r="2.8"/><circle cx="242.2" cy="445.0" r="2.8"/><circle cx="244.2" cy="447.5" r="2.8"/><circle cx="246.2" cy="467.2" r="2.8"/><circle cx="248.2" cy="429.3" r="2.8"/><circle cx="250.2" cy="430.0" r="2.8"/><circle cx="252.2" cy="464.2" r="2.8"/><circle cx="254.2" cy="444.6" r="2.8"/><circle cx="256.2" cy="475.0" r="2.8"/><circle cx="258.2" cy="462.1" r="2.8"/><circle cx="260.2" cy="449.7" r="2.8"/><circle cx="262.2" cy="444.3" r="2.8"/><circle cx="264.2" cy="448.3" r="2.8"/><circle cx="266.2" cy="451.7" r="2.8"/><circle cx="268.2" cy="466.9" r="2.8"/><circle cx="270.2" cy="456.9" r="2.8"/><circle cx="272.2" cy="474.6" r="2.8"/><circle cx="274.2" cy="465.6" r="2.8"/><circle cx="276.2" cy="428.5" r="2.8"/><circle cx="278.2" cy="461.2" r="2.8"/><circle cx="280.2" cy="474.8" r="2.8"/><circle cx="282.2" cy="484.4" r="2.8"/><circle cx="284.2" cy="453.0" r="2.8"/><circle cx="286.1" cy="443.0" r="2.8"/><circle cx="288.1" cy="475.3" r="2.8"/><circle cx="290.1" cy="428.6" r="2.8"/><circle cx="292.1" cy="433.4" r="2.8"/><circle cx="294.1" cy="446.6" r="2.8"/><circle cx="296.1" cy="426.0" r="2.8"/><circle cx="298.1" cy="456.5" r="2.8"/><circle cx="300.1" cy="480.6" r="2.8"/><circle cx="302.1" cy="465.9" r="2.8"/><circle cx="304.1" cy="442.4" r="2.8"/><circle cx="306.1" cy="453.6" r="2.8"/><circle cx="308.1" cy="446.6" r="2.8"/><circle cx="310.1" cy="456.9" r="2.8"/><circle cx="312.1" cy="451.4" r="2.8"/><circle cx="314.1" cy="485.7" r="2.8"/><circle cx="316.1" cy="460.0" r="2.8"/><circle cx="318.1" cy="445.6" r="2.8"/><circle cx="320.1" cy="442.5" r="2.8"/><circle cx="322.1" cy="481.8" r="2.8"/><circle cx="324.1" cy="472.3" r="2.8"/><circle cx="326.1" cy="454.5" r="2.8"/><circle cx="328.1" cy="429.5" r="2.8"/><circle cx="330.1" cy="473.1" r="2.8"/><circle cx="332.1" cy="461.2" r="2.8"/><circle cx="334.1" cy="482.3" r="2.8"/><circle cx="336.1" cy="436.1" r="2.8"/><circle cx="338.1" cy="476.9" r="2.8"/><circle cx="340.1" cy="465.4" r="2.8"/><circle cx="342.1" cy="477.8" r="2.8"/><circle cx="344.1" cy="437.1" r="2.8"/><circle cx="346.1" cy="458.2" r="2.8"/><circle cx="348.1" cy="457.1" r="2.8"/><circle cx="350.1" cy="444.1" r="2.8"/><circle cx="352.1" cy="467.8" r="2.8"/><circle cx="354.1" cy="482.2" r="2.8"/><circle cx="356.1" cy="461.1" r="2.8"/><circle cx="358.1" cy="453.5" r="2.8"/><circle cx="360.0" cy="426.2" r="2.8"/><circle cx="362.0" cy="425.4" r="2.8"/><circle cx="364.0" cy="454.5" r="2.8"/><circle cx="366.0" cy="460.2" r="2.8"/><circle cx="368.0" cy="458.0" r="2.8"/><circle cx="370.0" cy="475.6" r="2.8"/><circle cx="372.0" cy="449.8" r="2.8"/><circle cx="374.0" cy="447.3" r="2.8"/><circle cx="376.0" cy="465.5" r="2.8"/><circle cx="378.0" cy="453.5" r="2.8"/><circle cx="380.0" cy="476.6" r="2.8"/><circle cx="382.0" cy="447.2" r="2.8"/><circle cx="384.0" cy="463.0" r="2.8"/><circle cx="386.0" cy="484.3" r="2.8"/><circle cx="388.0" cy="457.2" r="2.8"/><circle cx="390.0" cy="445.5" r="2.8"/><circle cx="392.0" cy="420.0" r="2.8"/><circle cx="394.0" cy="482.0" r="2.8"/><circle cx="396.0" cy="475.9" r="2.8"/><circle cx="398.0" cy="453.7" r="2.8"/><circle cx="400.0" cy="447.6" r="2.8"/><circle cx="402.0" cy="458.3" r="2.8"/><circle cx="404.0" cy="450.2" r="2.8"/><circle cx="406.0" cy="438.7" r="2.8"/><circle cx="408.0" cy="443.9" r="2.8"/><circle cx="410.0" cy="464.7" r="2.8"/><circle cx="412.0" cy="460.4" r="2.8"/><circle cx="414.0" cy="450.0" r="2.8"/><circle cx="416.0" cy="425.3" r="2.8"/><circle cx="418.0" cy="453.8" r="2.8"/><circle cx="420.0" cy="463.6" r="2.8"/><circle cx="422.0" cy="445.7" r="2.8"/><circle cx="424.0" cy="458.4" r="2.8"/><circle cx="426.0" cy="458.4" r="2.8"/><circle cx="428.0" cy="463.0" r="2.8"/><circle cx="430.0" cy="481.6" r="2.8"/><circle cx="432.0" cy="454.4" r="2.8"/><circle cx="434.0" cy="442.3" r="2.8"/><circle cx="435.9" cy="460.6" r="2.8"/><circle cx="437.9" cy="449.1" r="2.8"/><circle cx="439.9" cy="460.1" r="2.8"/><circle cx="441.9" cy="430.0" r="2.8"/><circle cx="443.9" cy="430.5" r="2.8"/><circle cx="445.9" cy="437.7" r="2.8"/><circle cx="447.9" cy="466.2" r="2.8"/><circle cx="449.9" cy="426.8" r="2.8"/><circle cx="451.9" cy="458.3" r="2.8"/><circle cx="453.9" cy="477.3" r="2.8"/><circle cx="455.9" cy="464.9" r="2.8"/><circle cx="457.9" cy="424.0" r="2.8"/><circle cx="459.9" cy="458.9" r="2.8"/><circle cx="461.9" cy="460.8" r="2.8"/><circle cx="463.9" cy="434.0" r="2.8"/><circle cx="465.9" cy="428.0" r="2.8"/><circle cx="467.9" cy="485.7" r="2.8"/><circle cx="469.9" cy="479.5" r="2.8"/><circle cx="471.9" cy="429.5" r="2.8"/><circle cx="473.9" cy="484.0" r="2.8"/><circle cx="475.9" cy="444.2" r="2.8"/><circle cx="477.9" cy="456.3" r="2.8"/><circle cx="479.9" cy="431.8" r="2.8"/><circle cx="481.9" cy="463.0" r="2.8"/><circle cx="483.9" cy="462.8" r="2.8"/><circle cx="485.9" cy="450.7" r="2.8"/><circle cx="487.9" cy="427.0" r="2.8"/><circle cx="489.9" cy="455.4" r="2.8"/><circle cx="491.9" cy="436.8" r="2.8"/><circle cx="493.9" cy="466.6" r="2.8"/><circle cx="495.9" cy="466.7" r="2.8"/><circle cx="497.9" cy="447.8" r="2.8"/><circle cx="499.9" cy="449.5" r="2.8"/><circle cx="501.9" cy="433.9" r="2.8"/><circle cx="503.9" cy="463.9" r="2.8"/><circle cx="505.9" cy="450.1" r="2.8"/><circle cx="507.9" cy="464.0" r="2.8"/><circle cx="509.9" cy="474.9" r="2.8"/><circle cx="511.8" cy="485.6" r="2.8"/><circle cx="513.8" cy="456.9" r="2.8"/><circle cx="515.8" cy="455.9" r="2.8"/><circle cx="517.8" cy="457.7" r="2.8"/><circle cx="519.8" cy="467.2" r="2.8"/><circle cx="521.8" cy="452.4" r="2.8"/><circle cx="523.8" cy="432.9" r="2.8"/><circle cx="525.8" cy="460.0" r="2.8"/><circle cx="527.8" cy="456.0" r="2.8"/><circle cx="529.8" cy="466.9" r="2.8"/><circle cx="531.8" cy="475.8" r="2.8"/><circle cx="533.8" cy="445.3" r="2.8"/><circle cx="535.8" cy="463.2" r="2.8"/><circle cx="537.8" cy="478.7" r="2.8"/><circle cx="539.8" cy="447.0" r="2.8"/><circle cx="541.8" cy="466.1" r="2.8"/><circle cx="543.8" cy="462.3" r="2.8"/><circle cx="545.8" cy="447.0" r="2.8"/><circle cx="547.8" cy="459.9" r="2.8"/><circle cx="549.8" cy="451.2" r="2.8"/><circle cx="551.8" cy="444.7" r="2.8"/><circle cx="553.8" cy="426.7" r="2.8"/><circle cx="555.8" cy="448.5" r="2.8"/><circle cx="557.8" cy="455.8" r="2.8"/><circle cx="559.8" cy="451.8" r="2.8"/><circle cx="561.8" cy="455.8" r="2.8"/><circle cx="563.8" cy="447.3" r="2.8"/><circle cx="565.8" cy="422.0" r="2.8"/><circle cx="567.8" cy="464.1" r="2.8"/><circle cx="569.8" cy="464.3" r="2.8"/><circle cx="571.8" cy="461.3" r="2.8"/><circle cx="573.8" cy="437.6" r="2.8"/><circle cx="575.8" cy="450.2" r="2.8"/><circle cx="577.8" cy="475.1" r="2.8"/><circle cx="579.8" cy="484.4" r="2.8"/><circle cx="581.8" cy="448.2" r="2.8"/><circle cx="583.8" cy="428.6" r="2.8"/><circle cx="585.7" cy="463.6" r="2.8"/><circle cx="587.7" cy="462.5" r="2.8"/><circle cx="589.7" cy="452.5" r="2.8"/><circle cx="591.7" cy="442.5" r="2.8"/><circle cx="593.7" cy="459.7" r="2.8"/><circle cx="595.7" cy="485.6" r="2.8"/><circle cx="597.7" cy="455.1" r="2.8"/><circle cx="599.7" cy="428.0" r="2.8"/><circle cx="601.7" cy="446.9" r="2.8"/><circle cx="603.7" cy="444.8" r="2.8"/><circle cx="605.7" cy="456.3" r="2.8"/><circle cx="607.7" cy="456.8" r="2.8"/><circle cx="609.7" cy="446.8" r="2.8"/><circle cx="611.7" cy="463.8" r="2.8"/><circle cx="613.7" cy="485.0" r="2.8"/><circle cx="615.7" cy="443.6" r="2.8"/><circle cx="617.7" cy="478.5" r="2.8"/><circle cx="619.7" cy="429.6" r="2.8"/><circle cx="621.7" cy="455.4" r="2.8"/><circle cx="623.7" cy="370.4" r="2.8"/><circle cx="625.7" cy="460.2" r="2.8"/><circle cx="627.7" cy="474.5" r="2.8"/><circle cx="629.7" cy="461.2" r="2.8"/><circle cx="631.7" cy="447.1" r="2.8"/><circle cx="633.7" cy="455.3" r="2.8"/><circle cx="635.7" cy="465.2" r="2.8"/><circle cx="637.7" cy="434.9" r="2.8"/><circle cx="639.7" cy="480.8" r="2.8"/><circle cx="641.7" cy="457.6" r="2.8"/><circle cx="643.7" cy="467.5" r="2.8"/><circle cx="645.7" cy="428.6" r="2.8"/><circle cx="647.7" cy="482.4" r="2.8"/><circle cx="649.7" cy="436.4" r="2.8"/><circle cx="651.7" cy="465.3" r="2.8"/><circle cx="653.7" cy="481.7" r="2.8"/><circle cx="655.7" cy="435.7" r="2.8"/><circle cx="657.7" cy="460.8" r="2.8"/><circle cx="659.7" cy="450.9" r="2.8"/><circle cx="661.6" cy="442.3" r="2.8"/><circle cx="663.6" cy="458.6" r="2.8"/><circle cx="665.6" cy="448.0" r="2.8"/><circle cx="667.6" cy="481.3" r="2.8"/><circle cx="669.6" cy="459.2" r="2.8"/><circle cx="671.6" cy="455.9" r="2.8"/><circle cx="673.6" cy="468.0" r="2.8"/><circle cx="675.6" cy="460.2" r="2.8"/><circle cx="677.6" cy="438.7" r="2.8"/><circle cx="679.6" cy="458.0" r="2.8"/><circle cx="681.6" cy="428.6" r="2.8"/><circle cx="683.6" cy="443.3" r="2.8"/><circle cx="685.6" cy="451.8" r="2.8"/><circle cx="687.6" cy="448.5" r="2.8"/><circle cx="689.6" cy="479.7" r="2.8"/><circle cx="691.6" cy="467.1" r="2.8"/><circle cx="693.6" cy="467.9" r="2.8"/><circle cx="695.6" cy="463.0" r="2.8"/><circle cx="697.6" cy="457.5" r="2.8"/><circle cx="699.6" cy="425.6" r="2.8"/><circle cx="701.6" cy="474.2" r="2.8"/><circle cx="703.6" cy="446.4" r="2.8"/><circle cx="705.6" cy="457.9" r="2.8"/><circle cx="707.6" cy="440.4" r="2.8"/><circle cx="709.6" cy="456.8" r="2.8"/><circle cx="711.6" cy="447.8" r="2.8"/><circle cx="713.6" cy="450.1" r="2.8"/><circle cx="715.6" cy="451.8" r="2.8"/><circle cx="717.6" cy="448.0" r="2.8"/><circle cx="719.6" cy="447.0" r="2.8"/><circle cx="721.6" cy="454.1" r="2.8"/><circle cx="723.6" cy="452.8" r="2.8"/><circle cx="725.6" cy="448.2" r="2.8"/><circle cx="727.6" cy="456.4" r="2.8"/><circle cx="729.6" cy="449.2" r="2.8"/><circle cx="731.6" cy="444.6" r="2.8"/><circle cx="733.6" cy="449.2" r="2.8"/><circle cx="735.6" cy="445.9" r="2.8"/><circle cx="737.5" cy="448.4" r="2.8"/><circle cx="739.5" cy="459.6" r="2.8"/><circle cx="741.5" cy="453.4" r="2.8"/><circle cx="743.5" cy="463.0" r="2.8"/><circle cx="745.5" cy="460.7" r="2.8"/><circle cx="747.5" cy="448.5" r="2.8"/><circle cx="749.5" cy="427.4" r="2.8"/><circle cx="751.5" cy="465.5" r="2.8"/><circle cx="753.5" cy="450.2" r="2.8"/><circle cx="755.5" cy="465.6" r="2.8"/><circle cx="757.5" cy="457.4" r="2.8"/><circle cx="759.5" cy="458.7" r="2.8"/><circle cx="761.5" cy="468.0" r="2.8"/><circle cx="763.5" cy="455.3" r="2.8"/></g>
</svg>
<div class="ax" style="right:1005px;top:357.2px">2000</div>
<div class="ax" style="right:1005px;top:396.7px">1500</div>
<div class="ax" style="right:1005px;top:436.2px">1000</div>
<div class="ax" style="right:1005px;top:475.7px">500</div>
<div class="ax" style="right:1005px;top:515.2px">0</div>
<div class="ax" style="left:778.8px;top:515.9px">1 ms</div>
<div class="ax" style="left:778.8px;top:489.6px">2 ms</div>
<div class="ax" style="left:778.8px;top:463.2px">4 ms</div>
<div class="ax" style="left:778.8px;top:436.9px">8 ms</div>
<div class="ax" style="left:778.8px;top:410.6px">16 ms</div>
<div class="ax" style="left:778.8px;top:384.2px">32 ms</div>
<div class="ax" style="left:778.8px;top:357.9px">64 ms</div>
<div class="ax" style="left:96.6px;width:30px;text-align:center;top:523px">09:25</div>
<div class="ax" style="left:130.5px;width:30px;text-align:center;top:523px">09:26</div>
<div class="ax" style="left:164.3px;width:30px;text-align:center;top:523px">09:27</div>
<div class="ax" style="left:198.2px;width:30px;text-align:center;top:523px">09:28</div>
<div class="ax" style="left:232.1px;width:30px;text-align:center;top:523px">09:29</div>
<div class="ax" style="left:265.9px;width:30px;text-align:center;top:523px">09:30</div>
<div class="ax" style="left:299.8px;width:30px;text-align:center;top:523px">09:31</div>
<div class="ax" style="left:333.6px;width:30px;text-align:center;top:523px">09:32</div>
<div class="ax" style="left:367.5px;width:30px;text-align:center;top:523px">09:33</div>
<div class="ax" style="left:401.3px;width:30px;text-align:center;top:523px">09:34</div>
<div class="ax" style="left:435.2px;width:30px;text-align:center;top:523px">09:35</div>
<div class="ax" style="left:469.0px;width:30px;text-align:center;top:523px">09:36</div>
<div class="ax" style="left:502.9px;width:30px;text-align:center;top:523px">09:37</div>
<div class="ax" style="left:536.7px;width:30px;text-align:center;top:523px">09:38</div>
<div class="ax" style="left:570.6px;width:30px;text-align:center;top:523px">09:39</div>
<div class="ax" style="left:604.5px;width:30px;text-align:center;top:523px">09:40</div>
<div class="ax" style="left:638.3px;width:30px;text-align:center;top:523px">09:41</div>
<div class="ax" style="left:672.2px;width:30px;text-align:center;top:523px">09:42</div>
<div class="ax" style="left:706.0px;width:30px;text-align:center;top:523px">09:43</div>
<div class="ax" style="left:739.9px;width:30px;text-align:center;top:523px">09:44</div>
<div class="ax" style="left:72.5px;top:443.7px;font-size:6.5px;transform:translate(-50%,-50%) rotate(-90deg);">Request Per Second (rps)</div>
<div class="ax" style="left:803.8px;top:443.5px;font-size:7px;color:#d0d1da;transform:translate(-50%,-50%) rotate(90deg);">Time</div>
<div class="a" style="left:810.7px;top:384px;width:244.4px;height:14px;background:#202226"></div>
<div class="a" style="left:810.7px;top:412px;width:244.4px;height:14px;background:#202226"></div>
<div class="lr" style="left:960px;width:24.3px;top:361px;color:#3aa6ee">max</div>
<div class="lr" style="left:990px;width:27.2px;top:361px;color:#3aa6ee">avg</div>
<div class="lr" style="left:1020px;width:29.4px;top:361px;color:#3aa6ee">total</div>
<div class="a" style="left:811.7px;top:376.0px;width:7.6px;height:2.6px;border-radius:1.3px;background:#7eb26d"></div>
<div class="lg" style="left:824.6px;top:373.6px">http_reqs.sum</div>
<div class="lr" style="left:940px;width:48.6px;top:373.6px">1777</div>
<div class="lr" style="left:990px;width:31.8px;top:373.6px">1302</div>
<div class="lr" style="left:1020px;width:33.3px;top:373.6px">515738</div>
<div class="a" style="left:811.7px;top:390.1px;width:7.6px;height:2.6px;border-radius:1.3px;background:#eab839"></div>
<div class="lg" style="left:824.6px;top:387.7px">http_reqs.RPS</div>
<div class="lr" style="left:940px;width:48.6px;top:387.7px">592</div>
<div class="lr" style="left:990px;width:31.8px;top:387.7px">434</div>
<div class="lr" style="left:1020px;width:33.3px;top:387.7px">171913</div>
<div class="a" style="left:811.7px;top:404.2px;width:7.6px;height:2.6px;border-radius:1.3px;background:#6ed0e0"></div>
<div class="lg" style="left:824.6px;top:401.8px">iterations.iteration</div>
<div class="lr" style="left:940px;width:48.6px;top:401.8px">600</div>
<div class="lr" style="left:990px;width:31.8px;top:401.8px">442</div>
<div class="lr" style="left:1020px;width:33.3px;top:401.8px">175449</div>
<div class="a" style="left:811.7px;top:418.3px;width:7.6px;height:2.6px;border-radius:1.3px;background:#ef843c"></div>
<div class="lg" style="left:824.6px;top:415.9px">vus.VUS</div>
<div class="lr" style="left:940px;width:48.6px;top:415.9px">200</div>
<div class="lr" style="left:990px;width:31.8px;top:415.9px">151</div>
<div class="lr" style="left:1020px;width:33.3px;top:415.9px">60070</div>
<div class="a" style="left:811.7px;top:432.4px;width:7.6px;height:2.6px;border-radius:1.3px;background:#a03fd0"></div>
<div class="lg" style="left:824.6px;top:430.0px">http..req..duration.Response..Time <span style="color:#8e8f99">(right-y)</span></div>
<div class="lr" style="left:940px;width:48.6px;top:430.0px">60.2 ms</div>
<div class="lr" style="left:990px;width:31.8px;top:430.0px">5.28 ms</div>
<div class="lr" style="left:1020px;width:33.3px;top:430.0px">2.09 s</div>
<!-- histogram -->
<div class="a" style="left:96.0px;top:572px;width:1px;height:30px;background:#1c1f23"></div>
<div class="a" style="left:163.7px;top:572px;width:1px;height:30px;background:#1c1f23"></div>
<div class="a" style="left:231.4px;top:572px;width:1px;height:30px;background:#1c1f23"></div>
<div class="a" style="left:299.1px;top:572px;width:1px;height:30px;background:#1c1f23"></div>
<div class="a" style="left:366.8px;top:572px;width:1px;height:30px;background:#1c1f23"></div>
<div class="a" style="left:434.5px;top:572px;width:1px;height:30px;background:#1c1f23"></div>
<div class="a" style="left:502.2px;top:572px;width:1px;height:30px;background:#1c1f23"></div>
<div class="a" style="left:569.9px;top:572px;width:1px;height:30px;background:#1c1f23"></div>
<div class="a" style="left:637.6px;top:572px;width:1px;height:30px;background:#1c1f23"></div>
<div class="a" style="left:705.3px;top:572px;width:1px;height:30px;background:#1c1f23"></div>
<div class="a" style="left:773.0px;top:572px;width:1px;height:30px;background:#1c1f23"></div>
<div class="a" style="left:840.7px;top:572px;width:1px;height:30px;background:#1c1f23"></div>
<div class="a" style="left:908.4px;top:572px;width:1px;height:30px;background:#1c1f23"></div>
<div class="a" style="left:976.1px;top:572px;width:1px;height:30px;background:#1c1f23"></div>
<div class="a" style="left:1043.8px;top:572px;width:1px;height:30px;background:#1c1f23"></div>
<div class="a" style="left:96px;top:584px;width:948px;height:1px;background:#1c1f23"></div>
<div class="a" style="left:96px;top:581.7px;width:67.7px;height:20px;background:#629f56"></div>
<div class="ax" style="right:1007.6px;top:579.6px">500,000</div>
</div></div>
</body></html>
